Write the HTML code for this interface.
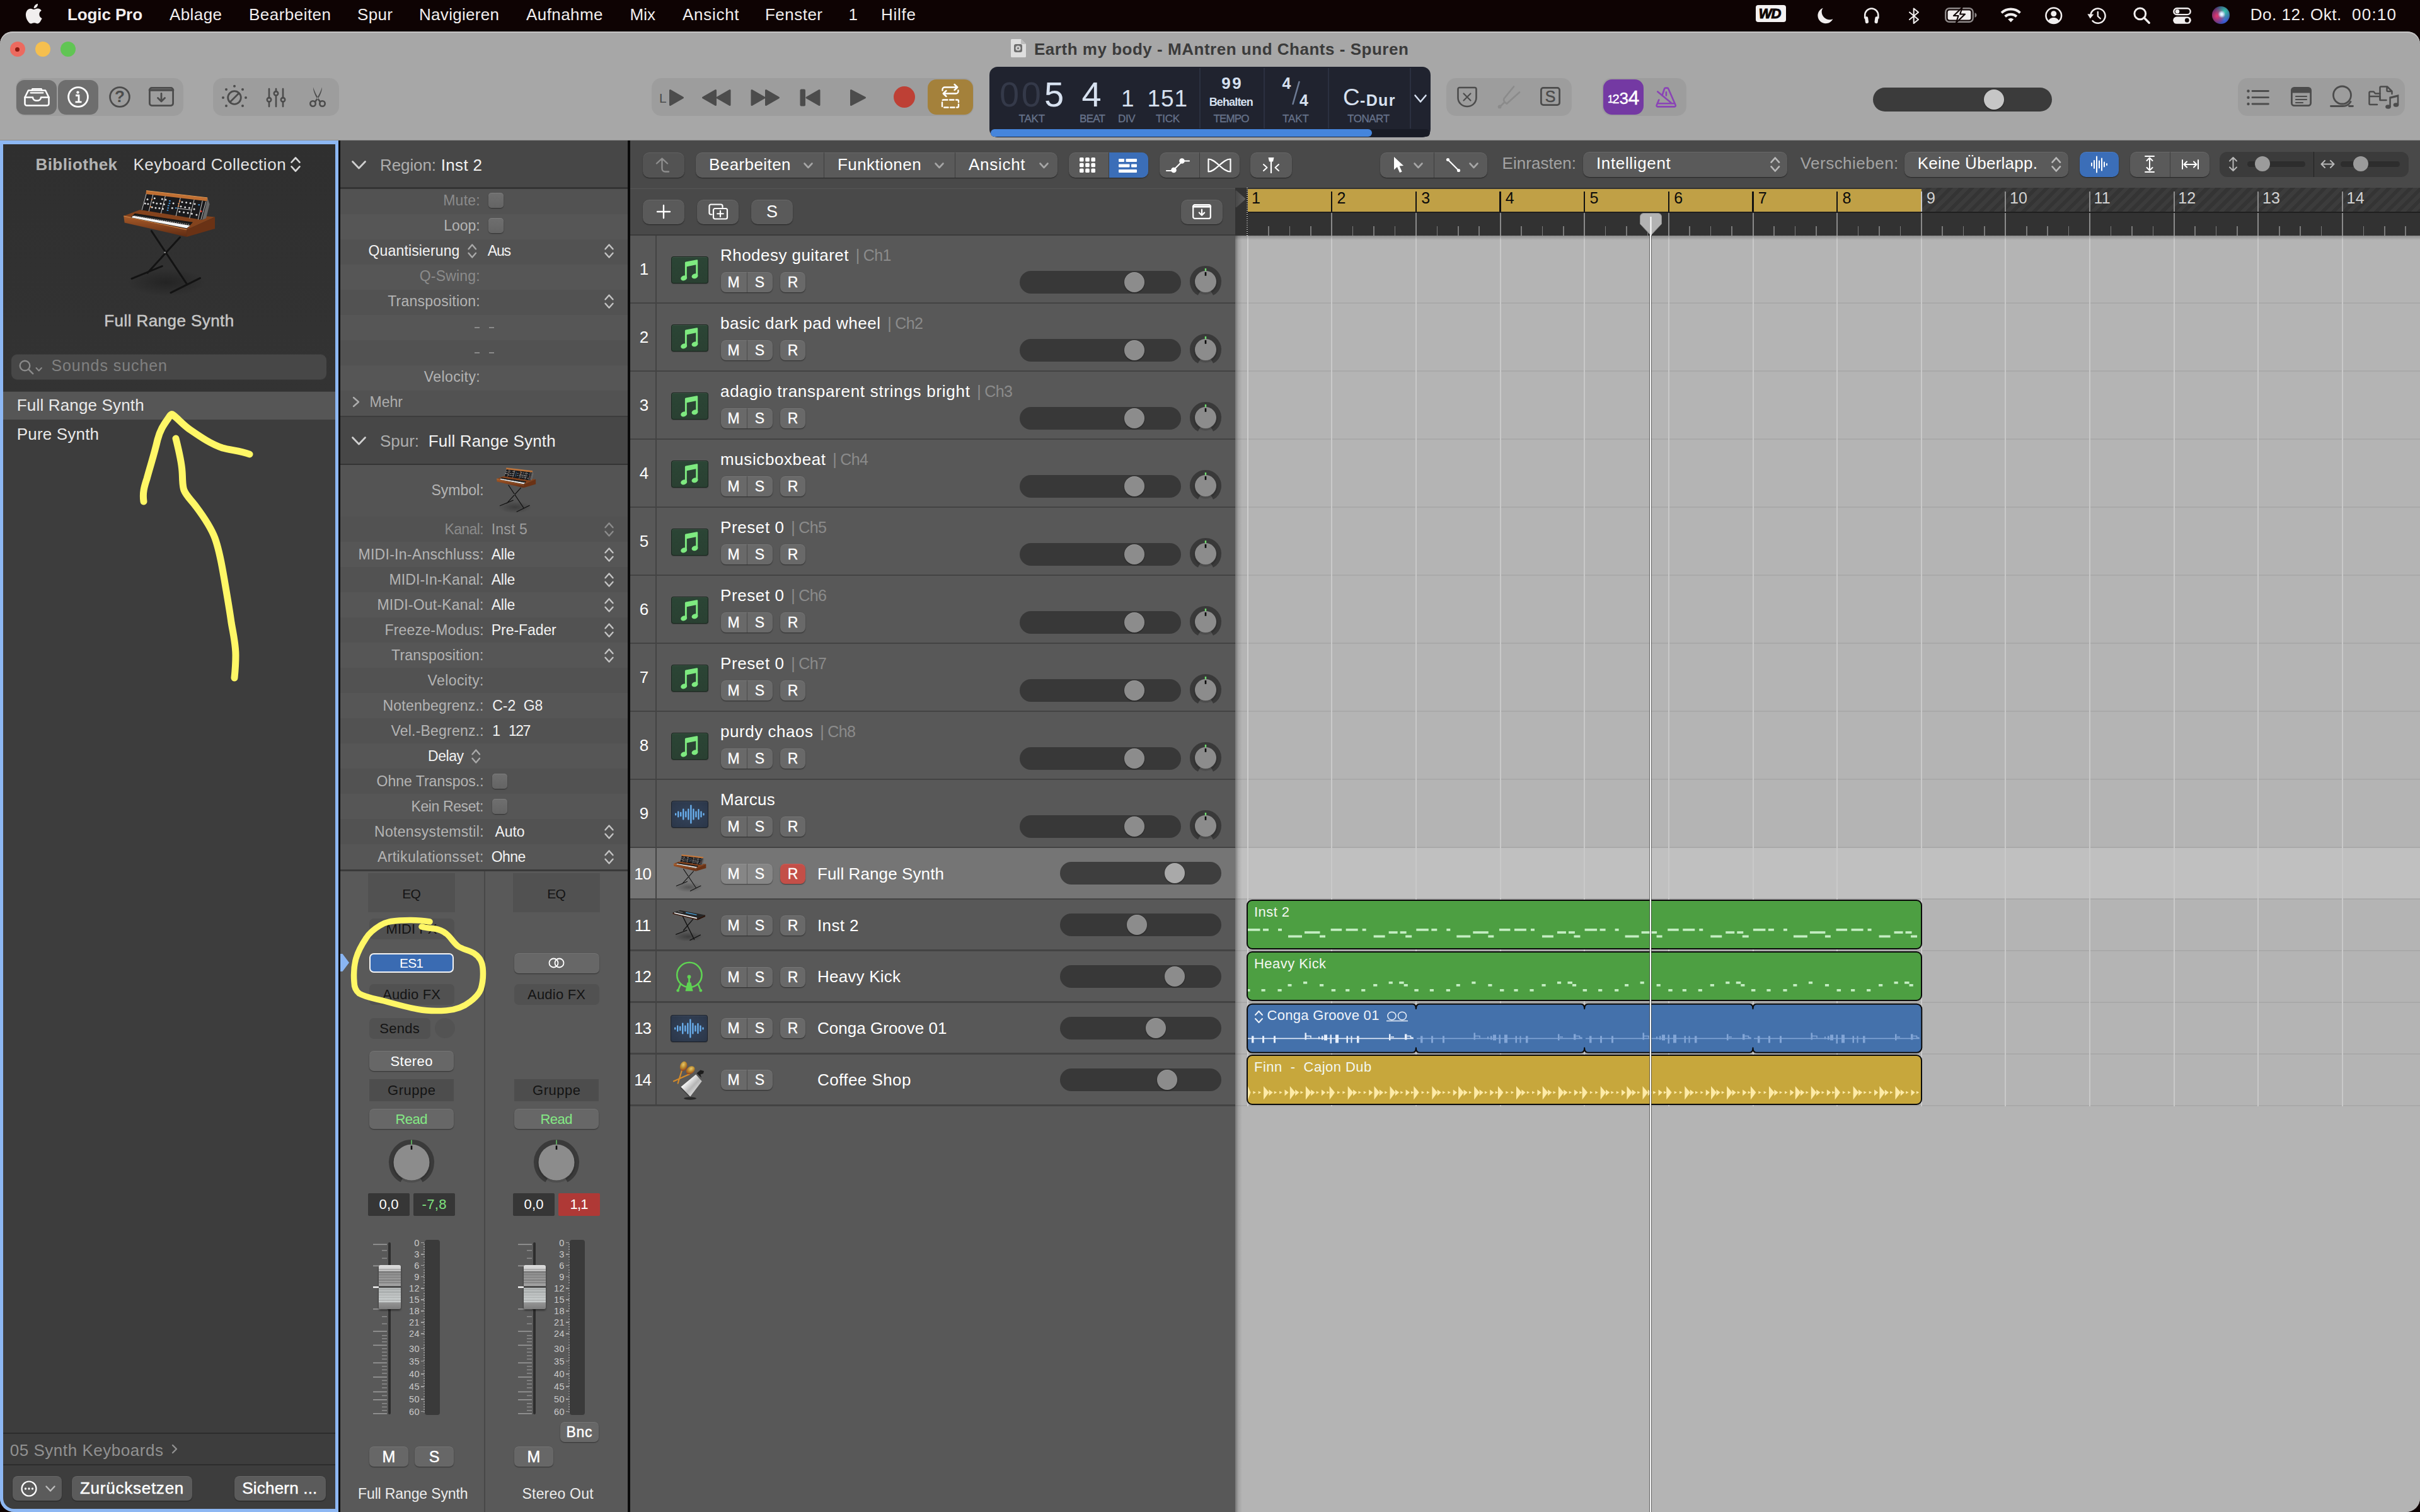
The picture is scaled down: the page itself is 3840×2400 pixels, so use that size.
<!DOCTYPE html>
<html><head><meta charset="utf-8"><title>Logic Pro</title>
<style>
html,body{margin:0;padding:0;}
body{width:3840px;height:2400px;overflow:hidden;background:#0e0303;position:relative;font-family:"Liberation Sans",sans-serif;}
#r{position:absolute;left:0;top:0;width:3840px;height:2400px;overflow:hidden;}
#r div,#r svg{position:absolute;box-sizing:border-box;}
#r svg{overflow:visible;}
.t{white-space:pre;line-height:1;}
</style></head><body><div id="r">
<div style="left:0px;top:0px;width:3840px;height:50px;background:#0e0303;"></div>
<svg style="left:39.5px;top:6px;" width="27.5" height="31.5" viewBox="2.2 0 19.6 24"><path fill="#f1eeee" d="M12.152 6.896c-.948 0-2.415-1.078-3.96-1.04-2.04.027-3.91 1.183-4.961 3.014-2.117 3.675-.546 9.103 1.519 12.09 1.013 1.454 2.208 3.09 3.792 3.039 1.52-.065 2.09-.987 3.935-.987 1.831 0 2.35.987 3.96.948 1.637-.026 2.676-1.48 3.676-2.948 1.156-1.688 1.636-3.325 1.662-3.415-.039-.013-3.182-1.221-3.22-4.857-.026-3.04 2.48-4.494 2.597-4.559-1.429-2.09-3.623-2.324-4.39-2.376-2-.156-3.675 1.09-4.61 1.09zM15.53 3.83c.843-1.012 1.4-2.427 1.245-3.83-1.207.052-2.662.805-3.532 1.818-.78.896-1.454 2.338-1.273 3.714 1.338.104 2.715-.688 3.559-1.701"/></svg>
<div class="t" style="left:107px;top:10.29px;font-size:26px;color:#f1eeee;letter-spacing:-0.11px;font-weight:700;">Logic Pro</div>
<div class="t" style="left:269px;top:10.29px;font-size:26px;color:#f1eeee;letter-spacing:0.41px;">Ablage</div>
<div class="t" style="left:395px;top:10.29px;font-size:26px;color:#f1eeee;letter-spacing:0.47px;">Bearbeiten</div>
<div class="t" style="left:567px;top:10.29px;font-size:26px;color:#f1eeee;letter-spacing:0.36px;">Spur</div>
<div class="t" style="left:665px;top:10.29px;font-size:26px;color:#f1eeee;letter-spacing:0.3px;">Navigieren</div>
<div class="t" style="left:835px;top:10.29px;font-size:26px;color:#f1eeee;letter-spacing:0.43px;">Aufnahme</div>
<div class="t" style="left:999.5px;top:10.29px;font-size:26px;color:#f1eeee;letter-spacing:0.03px;">Mix</div>
<div class="t" style="left:1083px;top:10.29px;font-size:26px;color:#f1eeee;letter-spacing:0.71px;">Ansicht</div>
<div class="t" style="left:1214px;top:10.29px;font-size:26px;color:#f1eeee;letter-spacing:0.48px;">Fenster</div>
<div class="t" style="left:1346.5px;top:10.29px;font-size:26px;color:#f1eeee;letter-spacing:-1.96px;">1</div>
<div class="t" style="left:1398px;top:10.29px;font-size:26px;color:#f1eeee;letter-spacing:0.75px;">Hilfe</div>
<div style="left:2785.5px;top:8px;width:48px;height:27px;background:#f4f2f2;border-radius:4px;"></div>
<div class="t" style="left:2790.67px;top:11.38px;font-size:22px;color:#0e0303;letter-spacing:-1px;font-weight:700;font-style:italic;-webkit-text-stroke:1px;">WD</div>
<svg style="left:2880.5px;top:10.5px;" width="30.5" height="29.4" viewBox="0 0 27 26"><path fill="#f1eeee" d="M10.5 1.5C6 3 2.8 7.5 3 12.6c.3 6 5.2 10.6 11.2 10.6 4.4 0 8.2-2.5 10-6.2-1.4.6-2.9.9-4.5.9-6.2 0-11.2-5-11.2-11.2 0-1.900.7-3.700 2-5.200z"/></svg>
<svg style="left:2956px;top:10.5px;" width="27.5" height="27.5" viewBox="0 0 27.5 27.5"><path fill="none" stroke="#f1eeee" stroke-width="2.6" d="M3.200 18.500V13.200C3.200 7.300 7.900 2.500 13.750 2.500S24.300 7.300 24.300 13.200v5.300"/><rect x="3.400" y="15.200" width="5.200" height="11" rx="2.400" fill="#f1eeee" transform="rotate(-8 6 20.700)"/><rect x="18.900" y="15.200" width="5.200" height="11" rx="2.400" fill="#f1eeee" transform="rotate(8 21.500 20.700)"/></svg>
<svg style="left:3028px;top:12px;" width="18" height="26.5" viewBox="0 0 18 26.5"><path fill="none" stroke="#f1eeee" stroke-width="2.100" stroke-linejoin="round" stroke-linecap="round" d="M2 7.500l14 11.500-7.300 6V1.500l7.300 6L2 19"/></svg>
<svg style="left:3086px;top:12px;" width="52" height="24" viewBox="0 0 52 24"><rect x="1.200" y="1.200" width="43.500" height="21.600" rx="6" fill="none" stroke="#8e8989" stroke-width="2.400"/><path d="M47.500 8.200c2 .6 3 2 3 3.800s-1 3.200-3 3.800z" fill="#8e8989"/><rect x="4.600" y="4.600" width="36.700" height="14.800" rx="3" fill="#f1eeee"/><path d="M27.500 0L14 13h7.500l-3.500 11L32 10.500h-7.800z" fill="#f1eeee" stroke="#0e0303" stroke-width="2.200" stroke-linejoin="round"/></svg>
<svg style="left:3173.5px;top:11px;" width="33.5" height="24.5" viewBox="0 0 33.5 24.5"><g fill="none" stroke="#f1eeee" stroke-width="3.900" stroke-linecap="butt"><path d="M2 9.400c8.300-7.800 21.200-7.800 29.500 0"/><path d="M7.600 15.300c5.200-4.800 13.100-4.800 18.300 0"/></g><path d="M16.750 24.300l-4.600-4.700c2.600-2.300 6.600-2.300 9.200 0z" fill="#f1eeee"/></svg>
<svg style="left:3244.5px;top:10.5px;" width="27.5" height="27.5" viewBox="0 0 27.5 27.5"><circle cx="13.750" cy="13.750" r="12.300" fill="none" stroke="#f1eeee" stroke-width="2.600"/><circle cx="13.750" cy="10.800" r="4.500" fill="#f1eeee"/><path d="M5.200 22.300c1.600-3.700 5-5.300 8.550-5.300s6.950 1.600 8.550 5.300c-2.300 2.300-5.300 3.600-8.550 3.600s-6.250-1.300-8.550-3.600z" fill="#f1eeee"/></svg>
<svg style="left:3311.5px;top:12px;" width="30" height="26.5" viewBox="0 0 30 26.5"><path fill="none" stroke="#f1eeee" stroke-width="2.500" stroke-linecap="round" d="M5.300 12.500a11.600 11.600 0 1 1 3.200 8.700"/><path fill="#f1eeee" d="M0.300 10.200l10 .6-5.600 6.800z"/><path fill="none" stroke="#f1eeee" stroke-width="2.300" stroke-linecap="round" d="M16.800 6.800v7l4 3.700"/></svg>
<svg style="left:3384.5px;top:10.5px;" width="27" height="27" viewBox="0 0 27 27"><circle cx="10.800" cy="10.800" r="8.900" fill="none" stroke="#f1eeee" stroke-width="3"/><path d="M17.300 17.300l7.900 7.900" stroke="#f1eeee" stroke-width="3.400" stroke-linecap="round"/></svg>
<svg style="left:3447.5px;top:12px;" width="29" height="26" viewBox="0 0 29 26"><rect x="1.300" y="1.300" width="26.400" height="9.800" rx="4.900" fill="none" stroke="#f1eeee" stroke-width="2.400"/><circle cx="7" cy="6.200" r="3.300" fill="#f1eeee"/><rect x="0.200" y="14.600" width="28.600" height="11.200" rx="5.600" fill="#f1eeee"/><circle cx="22.300" cy="20.200" r="3.400" fill="#0e0303"/></svg>
<div style="left:3510px;top:10px;width:28px;height:28px;border-radius:14px;background:radial-gradient(circle at 55% 45%,#ffffff 0,#cfe8ff 10%,rgba(255,255,255,0) 28%),radial-gradient(circle at 28% 55%,#e8366f 0,rgba(232,54,111,0) 55%),radial-gradient(circle at 70% 30%,#35c9b0 0,rgba(53,201,176,0) 55%),radial-gradient(circle at 70% 78%,#3a62e0 0,rgba(58,98,224,0) 60%),#3b2b6b;"></div>
<div class="t" style="left:3570.8px;top:9.69px;font-size:26px;color:#f1eeee;letter-spacing:0.52px;">Do. 12. Okt.</div>
<div class="t" style="left:3732px;top:9.69px;font-size:26px;color:#f1eeee;letter-spacing:1.24px;">00:10</div>
<div style="left:0px;top:50px;width:3840px;height:2350px;background:#a7a7a7;border-radius:20px 20px 22px 22px;box-shadow:inset 0 2px 0 #c6c6c6;"></div>
<div style="left:0px;top:221.5px;width:3840px;height:1.5px;background:#8e8e8e;"></div>
<div style="left:15.8px;top:66px;width:24px;height:24px;background:#ec6a5f;border-radius:12px;"></div>
<div style="left:56px;top:66px;width:24px;height:24px;background:#f5bf4f;border-radius:12px;"></div>
<div style="left:96px;top:66px;width:24px;height:24px;background:#61c554;border-radius:12px;"></div>
<div style="left:24.3px;top:74.5px;width:7px;height:7px;background:#8c1a10;border-radius:3.5px;"></div>
<svg style="left:1604px;top:62px;" width="24" height="29" viewBox="0 0 24 29"><path d="M1.500 0h14.500l8 8v19.500a1.500 1.500 0 0 1-1.500 1.500h-21a1.500 1.500 0 0 1-1.500-1.500v-26a1.500 1.500 0 0 1 1.500-1.500z" fill="#dedede"/><path d="M16 0l8 8h-6.500a1.500 1.500 0 0 1-1.500-1.500z" fill="#bcbcbc"/><rect x="5" y="8" width="13" height="13" rx="3" fill="#6e6e6e"/><circle cx="11.500" cy="14.500" r="4" fill="#cfcfcf"/><circle cx="11.500" cy="14.500" r="1.500" fill="#6e6e6e"/></svg>
<div class="t" style="left:1641px;top:64.69px;font-size:26px;color:#3b3b3b;letter-spacing:0.52px;font-weight:700;">Earth my body - MAntren und Chants - Spuren</div>
<div style="left:24.5px;top:124px;width:266px;height:60px;background:rgba(0,0,0,0.055);border-radius:15px;"></div>
<div style="left:26px;top:126.5px;width:64px;height:55px;background:#6e6e6e;border-radius:13px;"></div>
<div style="left:92px;top:126.5px;width:64px;height:55px;background:#6e6e6e;border-radius:13px;"></div>
<svg style="left:37.5px;top:138px;" width="41" height="31" viewBox="0 0 41 31"><g fill="none" stroke="#fff" stroke-width="2.600" stroke-linejoin="round" stroke-linecap="round"><path d="M1.500 16.500L7 5.500h27l5.500 11v10a3 3 0 0 1-3 3h-32a3 3 0 0 1-3-3z"/><path d="M1.500 16.500h12.500c0 3.500 3 5.300 6.500 5.300s6.500-1.800 6.500-5.300h12.500"/><path d="M10.500 9.300h20M12.500 5.500l.8-2.500h14.400l.8 2.500" stroke-width="2.200"/></g></svg>
<svg style="left:107px;top:136.5px;" width="34" height="34" viewBox="0 0 34 34"><circle cx="17" cy="17" r="15.400" fill="none" stroke="#fff" stroke-width="2.800"/><circle cx="16.500" cy="9.600" r="2.200" fill="#fff"/><path d="M13 14.500h5v10M12.500 24.800h10" fill="none" stroke="#fff" stroke-width="2.800"/></svg>
<svg style="left:173px;top:136.5px;" width="34" height="34" viewBox="0 0 34 34"><circle cx="17" cy="17" r="15.400" fill="none" stroke="#4c4c4c" stroke-width="2.800"/></svg>
<div class="t" style="left:182.06px;top:140.49px;font-size:26px;color:#4c4c4c;font-weight:700;">?</div>
<svg style="left:236px;top:138px;" width="40" height="31" viewBox="0 0 40 31"><g fill="none" stroke="#4c4c4c" stroke-width="2.800" stroke-linejoin="round" stroke-linecap="round"><rect x="1.400" y="1.400" width="37.200" height="28.200" rx="3.500"/><path d="M1.400 5h37.200" stroke-width="3.600"/><path d="M20 10.500v12M14.500 17.500l5.500 5.500 5.500-5.500"/></g></svg>
<div style="left:338px;top:124px;width:200px;height:60px;background:rgba(0,0,0,0.055);border-radius:15px;"></div>
<svg style="left:352px;top:134px;" width="40" height="40" viewBox="0 0 40 40"><circle cx="20" cy="21" r="10.300" fill="none" stroke="#4c4c4c" stroke-width="2.800"/><path d="M13.500 27.500L26 15" stroke="#4c4c4c" stroke-width="2.800" stroke-linecap="round"/><g fill="#4c4c4c"><circle cx="20" cy="2.800" r="2"/><circle cx="7" cy="8" r="2"/><circle cx="33" cy="8" r="2"/><circle cx="2" cy="21" r="2"/><circle cx="38" cy="21" r="2"/><circle cx="7" cy="34" r="2"/><circle cx="33" cy="34" r="2"/></g></svg>
<svg style="left:422px;top:139px;" width="32" height="32" viewBox="0 0 32 32"><g stroke="#4c4c4c" stroke-width="2.600" stroke-linecap="round" fill="none"><path d="M5 2v14M5 22.500v7.500M16 2v4M16 12.500v17.500M27 2v14M27 22.500v7.500"/><circle cx="5" cy="19.300" r="3.200"/><circle cx="16" cy="9.300" r="3.200"/><circle cx="27" cy="19.300" r="3.200"/></g></svg>
<svg style="left:491px;top:137px;" width="26" height="34" viewBox="0 0 26 34"><g stroke="#4c4c4c" stroke-width="2.600" fill="none" stroke-linecap="round"><circle cx="5.500" cy="27.500" r="4.200"/><circle cx="20.500" cy="27.500" r="4.200"/></g><path d="M6 1.500c1.500 5 6.500 16.500 12.500 22.500l-2.500 1.500C11 19 5.500 8 6 1.500zM20 1.500c-1.500 5-6.500 16.500-12.500 22.500l2.500 1.500C15 19 20.500 8 20 1.500z" fill="#4c4c4c"/></svg>
<div style="left:1034px;top:124px;width:511px;height:60px;background:rgba(0,0,0,0.055);border-radius:15px;"></div>
<div class="t" style="left:1046px;top:145.22px;font-size:21px;color:#4c4c4c;">L</div>
<svg style="left:1060px;top:140px;" width="330" height="30" viewBox="0 0 330 30"><path d="M3.500 3.500v23l20-11.500z" fill="#4c4c4c" stroke="#4c4c4c" stroke-width="3" stroke-linejoin="round"/><path d="M75.500 3.500v23l-20-11.500zM98 3.500v23l-20-11.500z" fill="#4c4c4c" stroke="#4c4c4c" stroke-width="3" stroke-linejoin="round"/><path d="M133 3.500v23l20-11.500zM155.500 3.500v23l20-11.500z" fill="#4c4c4c" stroke="#4c4c4c" stroke-width="3" stroke-linejoin="round"/><rect x="209.500" y="1.500" width="8.500" height="27" rx="2" fill="#4c4c4c"/><path d="M240 3.500v23l-20-11.500z" fill="#4c4c4c" stroke="#4c4c4c" stroke-width="3" stroke-linejoin="round"/><path d="M290.500 3.500v23l22-11.500z" fill="#4c4c4c" stroke="#4c4c4c" stroke-width="3" stroke-linejoin="round"/></svg>
<div style="left:1418.3px;top:137.3px;width:33.4px;height:33.4px;background:#be4035;border-radius:17px;"></div>
<div style="left:1472px;top:126px;width:72px;height:56px;background:#a4813b;border-radius:14px;"></div>
<svg style="left:1492px;top:132px;" width="32" height="44" viewBox="0 0 32 44"><g fill="none" stroke="#fff" stroke-width="2.400" stroke-linecap="round" stroke-linejoin="round"><path d="M3.500 11.500v-1.500a3.500 3.500 0 0 1 3.500-3.500h20M22.500 2l4.800 4.500-4.800 4.500"/><path d="M28.500 11.500v1.500a3.500 3.500 0 0 1-3.500 3.500h-20M9.500 12l-4.800 4.500 4.800 4.500"/><rect x="3" y="26.500" width="26" height="12" rx="2" stroke-dasharray="6.500 3.500"/></g></svg>
<div style="left:1570px;top:106px;width:700px;height:112px;background:#20232f;border-radius:13px;"></div>
<div class="t" style="left:1586px;top:121.6px;font-size:56px;color:#343949;letter-spacing:3.72px;">00</div>
<div class="t" style="left:1657px;top:121.6px;font-size:56px;color:#d7e1f0;">5</div>
<div class="t" style="left:1716.5px;top:121.6px;font-size:56px;color:#d7e1f0;">4</div>
<div class="t" style="left:1779px;top:137.68px;font-size:37px;color:#d7e1f0;">1</div>
<div class="t" style="left:1820.5px;top:137.68px;font-size:37px;color:#d7e1f0;letter-spacing:0.89px;">151</div>
<div class="t" style="left:1616.6px;top:179.91px;font-size:17px;color:#66728a;letter-spacing:-0.23px;-webkit-text-stroke:.35px;">TAKT</div>
<div class="t" style="left:1713px;top:179.91px;font-size:17px;color:#66728a;letter-spacing:-0.71px;-webkit-text-stroke:.35px;">BEAT</div>
<div class="t" style="left:1774px;top:179.91px;font-size:17px;color:#66728a;letter-spacing:-0.37px;-webkit-text-stroke:.35px;">DIV</div>
<div class="t" style="left:1834px;top:179.91px;font-size:17px;color:#66728a;letter-spacing:-0.24px;-webkit-text-stroke:.35px;">TICK</div>
<div style="left:1903px;top:108px;width:2px;height:96px;background:#2b3040;"></div>
<div style="left:2005px;top:108px;width:2px;height:96px;background:#2b3040;"></div>
<div style="left:2107px;top:108px;width:2px;height:96px;background:#2b3040;"></div>
<div style="left:2237px;top:108px;width:2px;height:96px;background:#2b3040;"></div>
<div class="t" style="left:1938.25px;top:118.99px;font-size:26px;color:#d7e1f0;letter-spacing:2.58px;font-weight:700;">99</div>
<div class="t" style="left:1918.7px;top:153.06px;font-size:18px;color:#d7e1f0;letter-spacing:-0.86px;font-weight:700;">Behalten</div>
<div class="t" style="left:1925.4px;top:179.91px;font-size:17px;color:#66728a;letter-spacing:-0.81px;-webkit-text-stroke:.35px;">TEMPO</div>
<div class="t" style="left:2034.6px;top:119.84px;font-size:25px;color:#d7e1f0;font-weight:700;">4</div>
<svg style="left:2049px;top:128px;" width="16" height="40" viewBox="0 0 16 40"><path d="M12.500 2L2.500 37" stroke="#6d7b95" stroke-width="2.600" stroke-linecap="round"/></svg>
<div class="t" style="left:2062px;top:146.54px;font-size:25px;color:#d7e1f0;font-weight:700;">4</div>
<div class="t" style="left:2035px;top:179.91px;font-size:17px;color:#66728a;letter-spacing:-0.06px;-webkit-text-stroke:.35px;">TAKT</div>
<div class="t" style="left:2131px;top:136.38px;font-size:37px;color:#d7e1f0;">C</div>
<div class="t" style="left:2158px;top:146.54px;font-size:25px;color:#d7e1f0;letter-spacing:1.37px;font-weight:700;">-Dur</div>
<div class="t" style="left:2138px;top:179.91px;font-size:17px;color:#66728a;letter-spacing:-0.45px;-webkit-text-stroke:.35px;">TONART</div>
<svg style="left:2244px;top:150px;" width="20" height="14" viewBox="0 0 20 14"><path d="M1.500 1.500l8.500 10 8.500-10" fill="none" stroke="#d7e1f0" stroke-width="2.600" stroke-linecap="round" stroke-linejoin="round"/></svg>
<div style="left:1572px;top:204.5px;width:696.5px;height:12px;background:#181b25;border-radius:6px;"></div>
<div style="left:1572px;top:204.5px;width:605px;height:12px;background:#4585dc;border-radius:6px;"></div>
<div style="left:2294.5px;top:124px;width:199.5px;height:60px;background:rgba(0,0,0,0.055);border-radius:15px;"></div>
<svg style="left:2312px;top:137px;" width="32" height="34" viewBox="0 0 32 34"><g fill="none" stroke="#4c4c4c" stroke-width="2.600" stroke-linejoin="round" stroke-linecap="round"><path d="M4 2h24a2.500 2.500 0 0 1 2.500 2.500v13.500c0 9-7.500 14-14.500 14S1.500 27 1.500 18V4.500A2.500 2.500 0 0 1 4 2z"/><path d="M10.500 11.500l11 11M21.500 11.500l-11 11" stroke-width="2.200"/></g></svg>
<svg style="left:2376px;top:135px;" width="38" height="38" viewBox="0 0 38 38"><g fill="none" stroke="#8b8b8b" stroke-width="2.700" stroke-linecap="round" stroke-linejoin="round"><path d="M26 2.500L10.500 21.500M35 11.500L15 29.500M10.500 21.500c-1.500 3 1 6.500 4.500 8M11.500 27L4 34.500"/></g><circle cx="3.600" cy="34.400" r="2.900" fill="#8b8b8b"/></svg>
<svg style="left:2444px;top:138px;" width="32" height="30" viewBox="0 0 32 30"><rect x="1.400" y="1.400" width="29.200" height="27.200" rx="3.500" fill="none" stroke="#4c4c4c" stroke-width="2.800"/></svg>
<div class="t" style="left:2451.66px;top:141.34px;font-size:25px;color:#4c4c4c;-webkit-text-stroke:.5px;">S</div>
<div style="left:2541.5px;top:124px;width:134.5px;height:60px;background:rgba(0,0,0,0.055);border-radius:15px;"></div>
<div style="left:2544px;top:126px;width:64px;height:56px;background:#7439a3;border-radius:14px;"></div>
<div class="t" style="left:2551px;top:149.96px;font-size:16px;color:#fff;-webkit-text-stroke:.4px;">1</div>
<div class="t" style="left:2558.5px;top:147.07px;font-size:20px;color:#fff;-webkit-text-stroke:.4px;">2</div>
<div class="t" style="left:2569.5px;top:142.99px;font-size:26px;color:#fff;-webkit-text-stroke:.4px;">3</div>
<div class="t" style="left:2583.5px;top:138.91px;font-size:32px;color:#fff;-webkit-text-stroke:.4px;">4</div>
<svg style="left:2626.5px;top:137px;" width="34" height="35" viewBox="0 0 34 35"><g fill="none" stroke="#8a43b6" stroke-width="2.600" stroke-linejoin="round" stroke-linecap="round"><path d="M10.500 14.500L14 4a2 2 0 0 1 1.900-1.400h2.600a2 2 0 0 1 1.900 1.400l11.300 26a1.700 1.700 0 0 1-1.600 2.400h-26.800a1.700 1.700 0 0 1-1.600-2.400l3.600-8.500"/><path d="M4 27.300h26.500M3.300 8.500L24.500 26M16.900 9.300v5.300"/></g></svg>
<div style="left:2972px;top:139px;width:284px;height:38px;background:#3b3b3b;border-radius:19px;"></div>
<div style="left:3148px;top:142px;width:32px;height:32px;background:#c6c6c6;border-radius:16px;box-shadow:0 1px 2px rgba(0,0,0,.5);"></div>
<div style="left:3551px;top:124px;width:265px;height:60px;background:rgba(0,0,0,0.055);border-radius:15px;"></div>
<svg style="left:3565px;top:141px;" width="36" height="28" viewBox="0 0 36 28"><g fill="#4c4c4c"><circle cx="2.500" cy="3.500" r="2.200"/><circle cx="2.500" cy="13.700" r="2.200"/><circle cx="2.500" cy="24" r="2.200"/></g><path d="M9 3.500h25.500M9 13.700h25.500M9 24h25.500" stroke="#4c4c4c" stroke-width="2.800" stroke-linecap="round"/></svg>
<svg style="left:3635px;top:137.5px;" width="33" height="31" viewBox="0 0 33 31"><rect x="1.400" y="1.400" width="30.200" height="28.200" rx="4" fill="none" stroke="#4c4c4c" stroke-width="2.800"/><path d="M1.400 9.500V5a3.600 3.600 0 0 1 3.600-3.600h23a3.600 3.600 0 0 1 3.600 3.600v4.500z" fill="#4c4c4c"/><path d="M8 15h17M8 20h17M8 25h11" stroke="#4c4c4c" stroke-width="2.200" stroke-linecap="round"/></svg>
<svg style="left:3697px;top:135px;" width="38" height="36" viewBox="0 0 38 36"><g fill="none" stroke="#4c4c4c" stroke-width="2.800" stroke-linecap="round"><circle cx="19.500" cy="16" r="14"/><path d="M1.500 33.500h19c6 0 10-3 12.500-7M30.500 33.500h6"/></g></svg>
<svg style="left:3758px;top:136px;" width="50" height="38" viewBox="0 0 50 38"><g fill="none" stroke="#4c4c4c" stroke-width="2.500" stroke-linejoin="round" stroke-linecap="round"><path d="M18.500 21V3a1.500 1.500 0 0 1 1.500-1.500h10l7.500 7.500v4M29.500 1.500v6a1.500 1.500 0 0 0 1.500 1.500h6.500"/><path d="M14 30h-11a1.500 1.500 0 0 1-1.500-1.500v-17.500a1.500 1.500 0 0 1 1.500-1.500h5.500l2.500 3h7.500M1.500 17h17v6h10"/></g><g fill="#4c4c4c"><ellipse cx="31.500" cy="33.500" rx="4.300" ry="3.300"/><ellipse cx="44" cy="30.500" rx="4.300" ry="3.300"/><path d="M33.300 33.500h2.500V20.500l10-2.500v12.500h2.500V14l-15 3.800z"/></g></svg>
<div style="left:0px;top:223px;width:536.5px;height:2177px;background:#8db7f3;border-radius:0 0 0 22px;"></div>
<div style="left:5px;top:228.5px;width:527px;height:2166.5px;background:#3d3d3d;border-radius:0 0 0 17px;"></div>
<div style="left:5px;top:228.5px;width:527px;height:392px;background:linear-gradient(#2f2f2f,#333333);"></div>
<div style="left:536.5px;top:223px;width:3.5px;height:2177px;background:#0a0a0a;"></div>
<div class="t" style="left:56.5px;top:247.99px;font-size:26px;color:#b3b3b3;letter-spacing:0.43px;font-weight:700;">Bibliothek</div>
<div class="t" style="left:211.4px;top:247.99px;font-size:26px;color:#e3e3e3;letter-spacing:0.53px;">Keyboard Collection</div>
<svg style="left:461px;top:248.5px;" width="16" height="24" viewBox="0 0 16 24"><path d="M1.500 8.64 L8 1.500 L14.5 8.64 M1.500 15.36 L8 22.5 L14.5 15.36" fill="none" stroke="#d8d8d8" stroke-width="2.6" stroke-linecap="round" stroke-linejoin="round"/></svg>
<svg style="left:194px;top:301px;" width="149" height="168" viewBox="14 11 149 168"><defs><linearGradient id="wfL" x1="0" y1="0" x2="0" y2="1"><stop offset="0" stop-color="#a85c2a"/><stop offset="1" stop-color="#5f2b12"/></linearGradient><radialGradient id="shL" cx=".5" cy=".5" r=".5"><stop offset="0" stop-color="rgba(0,0,0,.28)"/><stop offset="1" stop-color="rgba(0,0,0,0)"/></radialGradient></defs><ellipse cx="84" cy="158" rx="62" ry="22" fill="url(#shL)"/><g stroke="#131313" stroke-width="2.900" stroke-linecap="round"><path d="M105.500 86.700L54 143.200M28.900 152.300L77.300 132.500"/><path d="M60.300 76.600L116.800 161.400M91 174.600L137.600 151.400"/></g><circle cx="81.700" cy="110.800" r="1.300" fill="#9a9a9a"/><path d="M16.300 52.800L41.500 43.300 161 54.600 116.200 74.700z" fill="#84431d"/><path d="M116.200 74.700L161 54.600V72.900L116.200 86z" fill="#6a3215"/><path d="M16.300 52.800L116.200 74.700V86L17.600 63.400z" fill="url(#wfL)"/><path d="M16.300 52.800L116.200 74.700" stroke="#c98045" stroke-width="1.200"/><path d="M34 48.800L126 62.800 116.500 73 27.500 55.300z" fill="#111"/><path d="M31 52.400L121.500 68 116.400 72.300 28.600 55.200z" fill="#f4f4f4"/><path d="M36 49.600L125 63.200 121.800 66.800 33 52.300z" fill="#1b1b1b"/><path d="M33.500 52.500L121.500 66.500" stroke="#e9e9e9" stroke-width="1.100" stroke-dasharray="1.300 1.900"/><path d="M149.200 23.900L152.600 33.900 147 56.500 140.700 59z" fill="#676767"/><path d="M51.500 17.600L148.500 29 140.700 59 44.600 43.300z" fill="#1a1a1c"/><path d="M52.100 12.600L149.200 23.900 148.500 29.300 51.500 17.900z" fill="#bf6f33"/><path d="M52.100 12.600L149.200 23.900" stroke="#e39a55" stroke-width="1"/><g stroke="#d8d8d8" stroke-width=".900" fill="none"><path d="M52.100 17.800L45.200 43.400M147 29.500L138.800 58.700M62.800 18.800L56.200 45.500M82.300 21.100L75.400 49M106.200 24.100L99.200 52.800M128.100 27L120.600 56.500M141.300 28.600L134.400 58.400M101.800 40.800L124.400 43.300"/></g><circle cx="54" cy="26.4" r="1.500" fill="#dcdcdc"/><circle cx="50.3" cy="32.9" r="1.500" fill="#dcdcdc"/><circle cx="54.9" cy="33.7" r="1.500" fill="#dcdcdc"/><circle cx="65.3" cy="24.7" r="1.500" fill="#dcdcdc"/><circle cx="77.3" cy="26" r="1.500" fill="#dcdcdc"/><circle cx="63.4" cy="31.4" r="1.500" fill="#dcdcdc"/><circle cx="68.8" cy="32.9" r="1.500" fill="#dcdcdc"/><circle cx="75" cy="33.3" r="1.500" fill="#dcdcdc"/><circle cx="61.3" cy="38.9" r="1.500" fill="#dcdcdc"/><circle cx="67" cy="39.9" r="1.500" fill="#dcdcdc"/><circle cx="72.9" cy="40.6" r="1.500" fill="#dcdcdc"/><circle cx="82.9" cy="27" r="1.500" fill="#dcdcdc"/><circle cx="80.4" cy="34.2" r="1.500" fill="#dcdcdc"/><circle cx="78.5" cy="41.5" r="1.500" fill="#dcdcdc"/><circle cx="95.1" cy="32.7" r="1.500" fill="#dcdcdc"/><circle cx="93.3" cy="40.2" r="1.500" fill="#dcdcdc"/><circle cx="109" cy="30.8" r="1.500" fill="#dcdcdc"/><circle cx="115.6" cy="31.4" r="1.500" fill="#dcdcdc"/><circle cx="122.1" cy="32.4" r="1.500" fill="#dcdcdc"/><circle cx="107" cy="37.7" r="1.500" fill="#dcdcdc"/><circle cx="113.7" cy="38.9" r="1.500" fill="#dcdcdc"/><circle cx="120.4" cy="39.9" r="1.500" fill="#dcdcdc"/><circle cx="104.9" cy="46.1" r="1.500" fill="#dcdcdc"/><circle cx="111.6" cy="47.1" r="1.500" fill="#dcdcdc"/><circle cx="118.1" cy="48" r="1.500" fill="#dcdcdc"/><circle cx="129" cy="33.7" r="1.500" fill="#dcdcdc"/><circle cx="128.1" cy="42.1" r="1.500" fill="#dcdcdc"/><circle cx="124.4" cy="49.2" r="1.500" fill="#dcdcdc"/><circle cx="131.9" cy="50.9" r="1.500" fill="#dcdcdc"/><rect x="88.1" y="28.05" width="2.600" height="1.700" fill="#4aa2ea"/><rect x="87.6" y="31.85" width="2.600" height="1.700" fill="#4aa2ea"/><rect x="86" y="35.55" width="2.600" height="1.700" fill="#4aa2ea"/><rect x="85.4" y="39.35" width="2.600" height="1.700" fill="#4aa2ea"/><rect x="84.7" y="42.85" width="2.600" height="1.700" fill="#4aa2ea"/><rect x="134.4" y="34.35" width="2.600" height="1.700" fill="#4aa2ea"/><rect x="97.9" y="39.35" width="2.600" height="1.700" fill="#4aa2ea"/><rect x="60.1" y="25.65" width="2.200" height="1.900" fill="#e8853f"/><rect x="104.2" y="28.15" width="2.200" height="1.900" fill="#e8853f"/><rect x="102.5" y="32.35" width="2.200" height="1.900" fill="#e8853f"/><rect x="102.2" y="36.15" width="2.200" height="1.900" fill="#e8853f"/><rect x="57.9" y="37.35" width="2.200" height="1.900" fill="#e8853f"/><circle cx="139.200" cy="45.500" r="1.400" fill="#e3342a"/></svg>
<div class="t" style="left:165.2px;top:496.19px;font-size:26px;color:#c6c6c6;letter-spacing:0.44px;-webkit-text-stroke:0.5px #c6c6c6;">Full Range Synth</div>
<div style="left:18px;top:562px;width:500px;height:40px;background:#474747;border-radius:9px;box-shadow:0 1px 0 rgba(255,255,255,.06),inset 0 1px 0 rgba(0,0,0,.15);"></div>
<svg style="left:30px;top:571px;" width="40" height="26" viewBox="0 0 40 26"><circle cx="9.500" cy="9.500" r="7.800" fill="none" stroke="#8a8a8a" stroke-width="2.400"/><path d="M15.200 15.200l7 7" stroke="#8a8a8a" stroke-width="2.600" stroke-linecap="round"/><path d="M27.500 13l4.200 4.500 4.200-4.500" fill="none" stroke="#8a8a8a" stroke-width="2" stroke-linecap="round" stroke-linejoin="round"/></svg>
<div class="t" style="left:81.4px;top:568.44px;font-size:25px;color:#808080;letter-spacing:0.94px;">Sounds suchen</div>
<div style="left:5px;top:622px;width:527px;height:44px;background:#565656;"></div>
<div class="t" style="left:26.8px;top:629.99px;font-size:26px;color:#e9e9e9;letter-spacing:0.16px;">Full Range Synth</div>
<div class="t" style="left:26.8px;top:675.99px;font-size:26px;color:#e9e9e9;letter-spacing:0.18px;">Pure Synth</div>
<div style="left:5px;top:2274px;width:527px;height:2px;background:#2c2c2c;"></div>
<div class="t" style="left:15.7px;top:2288.99px;font-size:26px;color:#919191;letter-spacing:0.54px;">05 Synth Keyboards</div>
<svg style="left:272px;top:2292px;" width="10" height="16" viewBox="0 0 10 16"><path d="M2 2l6 6-6 6" fill="none" stroke="#919191" stroke-width="2.400" stroke-linecap="round" stroke-linejoin="round"/></svg>
<div style="left:5px;top:2324px;width:527px;height:2px;background:#2c2c2c;"></div>
<div style="left:20px;top:2342.5px;width:78px;height:39px;background:#5b5b5b;border-radius:8px;box-shadow:0 1px 1.500px rgba(0,0,0,.45),inset 0 1px 0 rgba(255,255,255,.08);"></div>
<svg style="left:33px;top:2349.5px;" width="26" height="26" viewBox="0 0 26 26"><circle cx="13" cy="13" r="11.500" fill="none" stroke="#fff" stroke-width="2.200"/><g fill="#fff"><circle cx="7.500" cy="13" r="1.700"/><circle cx="13" cy="13" r="1.700"/><circle cx="18.500" cy="13" r="1.700"/></g></svg>
<svg style="left:72px;top:2358px;" width="16" height="11" viewBox="0 0 16 11"><path d="M1.500 1.500l6.500 7 6.500-7" fill="none" stroke="#bdbdbd" stroke-width="2.400" stroke-linecap="round" stroke-linejoin="round"/></svg>
<div style="left:113.5px;top:2342.5px;width:191px;height:39px;background:#5b5b5b;border-radius:8px;box-shadow:0 1px 1.500px rgba(0,0,0,.45),inset 0 1px 0 rgba(255,255,255,.08);"></div>
<div class="t" style="left:126.9px;top:2349.39px;font-size:26px;color:#fff;letter-spacing:0.76px;-webkit-text-stroke:.45px;">Zurücksetzen</div>
<div style="left:372px;top:2342.5px;width:144.5px;height:39px;background:#5b5b5b;border-radius:8px;box-shadow:0 1px 1.500px rgba(0,0,0,.45),inset 0 1px 0 rgba(255,255,255,.08);"></div>
<div class="t" style="left:384.3px;top:2349.39px;font-size:26px;color:#fff;letter-spacing:0.2px;-webkit-text-stroke:.45px;">Sichern ...</div>
<div style="left:540px;top:223px;width:456px;height:2177px;background:#595959;"></div>
<div style="left:996px;top:223px;width:4px;height:2177px;background:#0a0a0a;"></div>
<div style="left:540px;top:223px;width:456px;height:75px;background:#474747;"></div>
<div style="left:540px;top:297px;width:456px;height:2.5px;background:#343434;"></div>
<svg style="left:558px;top:255px;" width="23" height="14" viewBox="0 0 23 14"><path d="M1.500 1.500l10 10.500 10-10.500" fill="none" stroke="#d0d0d0" stroke-width="2.800" stroke-linecap="round" stroke-linejoin="round"/></svg>
<div class="t" style="left:603px;top:249.39px;font-size:26px;color:#adadad;letter-spacing:-0.1px;">Region:</div>
<div class="t" style="left:699.8px;top:249.39px;font-size:26px;color:#f2f2f2;letter-spacing:0.32px;">Inst 2</div>
<div style="left:540px;top:299.5px;width:456px;height:40px;background:#525252;"></div>
<div style="left:540px;top:339.5px;width:456px;height:40px;background:#565656;"></div>
<div style="left:540px;top:379.5px;width:456px;height:40px;background:#525252;"></div>
<div style="left:540px;top:419.5px;width:456px;height:40px;background:#565656;"></div>
<div style="left:540px;top:459.5px;width:456px;height:40px;background:#525252;"></div>
<div style="left:540px;top:499.5px;width:456px;height:40px;background:#565656;"></div>
<div style="left:540px;top:539.5px;width:456px;height:40px;background:#525252;"></div>
<div style="left:540px;top:579.5px;width:456px;height:40px;background:#565656;"></div>
<div style="left:540px;top:619.5px;width:456px;height:40px;background:#525252;"></div>
<div class="t" style="left:703.2px;top:306.73px;font-size:23px;color:#8b8b8b;letter-spacing:0.25px;">Mute:</div>
<div style="left:775px;top:306px;width:24px;height:24px;background:linear-gradient(#6f6f6f,#646464);border-radius:5px;box-shadow:0 1px 1.500px rgba(0,0,0,.45),inset 0 1px 0 rgba(255,255,255,.1);"></div>
<div class="t" style="left:704.2px;top:346.73px;font-size:23px;color:#b4b4b4;letter-spacing:-0.01px;">Loop:</div>
<div style="left:775px;top:346px;width:24px;height:24px;background:linear-gradient(#6f6f6f,#646464);border-radius:5px;box-shadow:0 1px 1.500px rgba(0,0,0,.45),inset 0 1px 0 rgba(255,255,255,.1);"></div>
<div class="t" style="left:584.6px;top:386.73px;font-size:23px;color:#f2f2f2;letter-spacing:0.13px;">Quantisierung</div>
<svg style="left:742px;top:386.5px;" width="14.5" height="23" viewBox="0 0 14.5 23"><path d="M1.500 8.28 L7.25 1.500 L13 8.28 M1.500 14.72 L7.25 21.5 L13 14.72" fill="none" stroke="#a9a9a9" stroke-width="2.4" stroke-linecap="round" stroke-linejoin="round"/></svg>
<div class="t" style="left:773.8px;top:386.73px;font-size:23px;color:#f2f2f2;letter-spacing:-1.22px;">Aus</div>
<svg style="left:958.5px;top:386.5px;" width="15" height="23" viewBox="0 0 15 23"><path d="M1.500 8.28 L7.5 1.500 L13.5 8.28 M1.500 14.72 L7.5 21.5 L13.5 14.72" fill="none" stroke="#c4c4c4" stroke-width="2.4" stroke-linecap="round" stroke-linejoin="round"/></svg>
<div class="t" style="left:665.7px;top:426.73px;font-size:23px;color:#8b8b8b;letter-spacing:0.2px;">Q-Swing:</div>
<div class="t" style="left:615.2px;top:466.73px;font-size:23px;color:#b4b4b4;letter-spacing:0.22px;">Transposition:</div>
<svg style="left:958.5px;top:466.5px;" width="15" height="23" viewBox="0 0 15 23"><path d="M1.500 8.28 L7.5 1.500 L13.5 8.28 M1.500 14.72 L7.5 21.5 L13.5 14.72" fill="none" stroke="#c4c4c4" stroke-width="2.4" stroke-linecap="round" stroke-linejoin="round"/></svg>
<div style="left:753px;top:518.5px;width:8px;height:2px;background:#8a8a8a;"></div>
<div style="left:776px;top:518.5px;width:8px;height:2px;background:#8a8a8a;"></div>
<div style="left:753px;top:558.5px;width:8px;height:2px;background:#8a8a8a;"></div>
<div style="left:776px;top:558.5px;width:8px;height:2px;background:#8a8a8a;"></div>
<div class="t" style="left:672.7px;top:586.73px;font-size:23px;color:#b4b4b4;letter-spacing:0.42px;">Velocity:</div>
<svg style="left:558.5px;top:629px;" width="12" height="18" viewBox="0 0 12 18"><path d="M2 2l8 7-8 7" fill="none" stroke="#adadad" stroke-width="2.400" stroke-linecap="round" stroke-linejoin="round"/></svg>
<div class="t" style="left:586.5px;top:626.73px;font-size:23px;color:#adadad;">Mehr</div>
<div style="left:540px;top:659.5px;width:456px;height:2.5px;background:#3c3c3c;"></div>
<div style="left:540px;top:662px;width:456px;height:74px;background:#474747;"></div>
<div style="left:540px;top:735.5px;width:456px;height:2.5px;background:#343434;"></div>
<svg style="left:558px;top:693px;" width="23" height="14" viewBox="0 0 23 14"><path d="M1.500 1.500l10 10.500 10-10.500" fill="none" stroke="#d0d0d0" stroke-width="2.800" stroke-linecap="round" stroke-linejoin="round"/></svg>
<div class="t" style="left:603px;top:686.99px;font-size:26px;color:#adadad;letter-spacing:-0.04px;">Spur:</div>
<div class="t" style="left:679.8px;top:686.99px;font-size:26px;color:#f2f2f2;letter-spacing:0.16px;">Full Range Synth</div>
<div style="left:540px;top:738px;width:456px;height:82px;background:#545454;"></div>
<div class="t" style="left:684.5px;top:766.53px;font-size:23px;color:#b4b4b4;letter-spacing:-0.01px;">Symbol:</div>
<svg style="left:786.5px;top:742px;" width="64" height="72.2" viewBox="14 11 149 168"><defs><linearGradient id="wfI" x1="0" y1="0" x2="0" y2="1"><stop offset="0" stop-color="#a85c2a"/><stop offset="1" stop-color="#5f2b12"/></linearGradient><radialGradient id="shI" cx=".5" cy=".5" r=".5"><stop offset="0" stop-color="rgba(0,0,0,.28)"/><stop offset="1" stop-color="rgba(0,0,0,0)"/></radialGradient></defs><ellipse cx="84" cy="158" rx="62" ry="22" fill="url(#shI)"/><g stroke="#131313" stroke-width="2.900" stroke-linecap="round"><path d="M105.500 86.700L54 143.200M28.900 152.300L77.300 132.500"/><path d="M60.300 76.600L116.800 161.400M91 174.600L137.600 151.400"/></g><circle cx="81.700" cy="110.800" r="1.300" fill="#9a9a9a"/><path d="M16.300 52.800L41.500 43.300 161 54.600 116.200 74.700z" fill="#84431d"/><path d="M116.200 74.700L161 54.600V72.900L116.200 86z" fill="#6a3215"/><path d="M16.300 52.800L116.200 74.700V86L17.600 63.400z" fill="url(#wfI)"/><path d="M16.300 52.800L116.200 74.700" stroke="#c98045" stroke-width="1.200"/><path d="M34 48.800L126 62.800 116.500 73 27.500 55.300z" fill="#111"/><path d="M31 52.400L121.500 68 116.400 72.300 28.600 55.200z" fill="#f4f4f4"/><path d="M36 49.600L125 63.200 121.800 66.800 33 52.300z" fill="#1b1b1b"/><path d="M33.500 52.500L121.500 66.500" stroke="#e9e9e9" stroke-width="1.100" stroke-dasharray="1.300 1.900"/><path d="M149.200 23.900L152.600 33.900 147 56.500 140.700 59z" fill="#676767"/><path d="M51.500 17.600L148.500 29 140.700 59 44.600 43.300z" fill="#1a1a1c"/><path d="M52.100 12.600L149.200 23.900 148.500 29.300 51.500 17.900z" fill="#bf6f33"/><path d="M52.100 12.600L149.200 23.900" stroke="#e39a55" stroke-width="1"/><g stroke="#d8d8d8" stroke-width=".900" fill="none"><path d="M52.100 17.800L45.200 43.400M147 29.500L138.800 58.700M62.800 18.800L56.200 45.500M82.300 21.100L75.400 49M106.200 24.100L99.200 52.800M128.100 27L120.600 56.500M141.300 28.600L134.400 58.400M101.800 40.800L124.400 43.300"/></g><circle cx="54" cy="26.4" r="1.500" fill="#dcdcdc"/><circle cx="50.3" cy="32.9" r="1.500" fill="#dcdcdc"/><circle cx="54.9" cy="33.7" r="1.500" fill="#dcdcdc"/><circle cx="65.3" cy="24.7" r="1.500" fill="#dcdcdc"/><circle cx="77.3" cy="26" r="1.500" fill="#dcdcdc"/><circle cx="63.4" cy="31.4" r="1.500" fill="#dcdcdc"/><circle cx="68.8" cy="32.9" r="1.500" fill="#dcdcdc"/><circle cx="75" cy="33.3" r="1.500" fill="#dcdcdc"/><circle cx="61.3" cy="38.9" r="1.500" fill="#dcdcdc"/><circle cx="67" cy="39.9" r="1.500" fill="#dcdcdc"/><circle cx="72.9" cy="40.6" r="1.500" fill="#dcdcdc"/><circle cx="82.9" cy="27" r="1.500" fill="#dcdcdc"/><circle cx="80.4" cy="34.2" r="1.500" fill="#dcdcdc"/><circle cx="78.5" cy="41.5" r="1.500" fill="#dcdcdc"/><circle cx="95.1" cy="32.7" r="1.500" fill="#dcdcdc"/><circle cx="93.3" cy="40.2" r="1.500" fill="#dcdcdc"/><circle cx="109" cy="30.8" r="1.500" fill="#dcdcdc"/><circle cx="115.6" cy="31.4" r="1.500" fill="#dcdcdc"/><circle cx="122.1" cy="32.4" r="1.500" fill="#dcdcdc"/><circle cx="107" cy="37.7" r="1.500" fill="#dcdcdc"/><circle cx="113.7" cy="38.9" r="1.500" fill="#dcdcdc"/><circle cx="120.4" cy="39.9" r="1.500" fill="#dcdcdc"/><circle cx="104.9" cy="46.1" r="1.500" fill="#dcdcdc"/><circle cx="111.6" cy="47.1" r="1.500" fill="#dcdcdc"/><circle cx="118.1" cy="48" r="1.500" fill="#dcdcdc"/><circle cx="129" cy="33.7" r="1.500" fill="#dcdcdc"/><circle cx="128.1" cy="42.1" r="1.500" fill="#dcdcdc"/><circle cx="124.4" cy="49.2" r="1.500" fill="#dcdcdc"/><circle cx="131.9" cy="50.9" r="1.500" fill="#dcdcdc"/><rect x="88.1" y="28.05" width="2.600" height="1.700" fill="#4aa2ea"/><rect x="87.6" y="31.85" width="2.600" height="1.700" fill="#4aa2ea"/><rect x="86" y="35.55" width="2.600" height="1.700" fill="#4aa2ea"/><rect x="85.4" y="39.35" width="2.600" height="1.700" fill="#4aa2ea"/><rect x="84.7" y="42.85" width="2.600" height="1.700" fill="#4aa2ea"/><rect x="134.4" y="34.35" width="2.600" height="1.700" fill="#4aa2ea"/><rect x="97.9" y="39.35" width="2.600" height="1.700" fill="#4aa2ea"/><rect x="60.1" y="25.65" width="2.200" height="1.900" fill="#e8853f"/><rect x="104.2" y="28.15" width="2.200" height="1.900" fill="#e8853f"/><rect x="102.5" y="32.35" width="2.200" height="1.900" fill="#e8853f"/><rect x="102.2" y="36.15" width="2.200" height="1.900" fill="#e8853f"/><rect x="57.9" y="37.35" width="2.200" height="1.900" fill="#e8853f"/><circle cx="139.200" cy="45.500" r="1.400" fill="#e3342a"/></svg>
<div style="left:540px;top:820px;width:456px;height:40px;background:#525252;"></div>
<div style="left:540px;top:860px;width:456px;height:40px;background:#565656;"></div>
<div style="left:540px;top:900px;width:456px;height:40px;background:#525252;"></div>
<div style="left:540px;top:940px;width:456px;height:40px;background:#565656;"></div>
<div style="left:540px;top:980px;width:456px;height:40px;background:#525252;"></div>
<div style="left:540px;top:1020px;width:456px;height:40px;background:#565656;"></div>
<div style="left:540px;top:1060px;width:456px;height:40px;background:#525252;"></div>
<div style="left:540px;top:1100px;width:456px;height:40px;background:#565656;"></div>
<div style="left:540px;top:1140px;width:456px;height:40px;background:#525252;"></div>
<div style="left:540px;top:1180px;width:456px;height:40px;background:#565656;"></div>
<div style="left:540px;top:1220px;width:456px;height:40px;background:#525252;"></div>
<div style="left:540px;top:1260px;width:456px;height:40px;background:#565656;"></div>
<div style="left:540px;top:1300px;width:456px;height:40px;background:#525252;"></div>
<div style="left:540px;top:1340px;width:456px;height:40px;background:#565656;"></div>
<div class="t" style="left:705.5px;top:828.73px;font-size:23px;color:#8b8b8b;letter-spacing:-0.64px;">Kanal:</div>
<div class="t" style="left:779.8px;top:828.73px;font-size:23px;color:#9d9d9d;letter-spacing:0.15px;">Inst 5</div>
<svg style="left:958.5px;top:828.5px;" width="15" height="23" viewBox="0 0 15 23"><path d="M1.500 8.28 L7.5 1.500 L13.5 8.28 M1.500 14.72 L7.5 21.5 L13.5 14.72" fill="none" stroke="#8c8c8c" stroke-width="2.4" stroke-linecap="round" stroke-linejoin="round"/></svg>
<div class="t" style="left:568.5px;top:868.73px;font-size:23px;color:#b4b4b4;letter-spacing:0.28px;">MIDI-In-Anschluss:</div>
<div class="t" style="left:779.8px;top:868.73px;font-size:23px;color:#f2f2f2;letter-spacing:-0.28px;">Alle</div>
<svg style="left:958.5px;top:868.5px;" width="15" height="23" viewBox="0 0 15 23"><path d="M1.500 8.28 L7.5 1.500 L13.5 8.28 M1.500 14.72 L7.5 21.5 L13.5 14.72" fill="none" stroke="#c4c4c4" stroke-width="2.4" stroke-linecap="round" stroke-linejoin="round"/></svg>
<div class="t" style="left:617.5px;top:908.73px;font-size:23px;color:#b4b4b4;letter-spacing:0.13px;">MIDI-In-Kanal:</div>
<div class="t" style="left:779.8px;top:908.73px;font-size:23px;color:#f2f2f2;letter-spacing:-0.28px;">Alle</div>
<svg style="left:958.5px;top:908.5px;" width="15" height="23" viewBox="0 0 15 23"><path d="M1.500 8.28 L7.5 1.500 L13.5 8.28 M1.500 14.72 L7.5 21.5 L13.5 14.72" fill="none" stroke="#c4c4c4" stroke-width="2.4" stroke-linecap="round" stroke-linejoin="round"/></svg>
<div class="t" style="left:598.5px;top:948.73px;font-size:23px;color:#b4b4b4;letter-spacing:0.2px;">MIDI-Out-Kanal:</div>
<div class="t" style="left:779.8px;top:948.73px;font-size:23px;color:#f2f2f2;letter-spacing:-0.28px;">Alle</div>
<svg style="left:958.5px;top:948.5px;" width="15" height="23" viewBox="0 0 15 23"><path d="M1.500 8.28 L7.5 1.500 L13.5 8.28 M1.500 14.72 L7.5 21.5 L13.5 14.72" fill="none" stroke="#c4c4c4" stroke-width="2.4" stroke-linecap="round" stroke-linejoin="round"/></svg>
<div class="t" style="left:610.5px;top:988.73px;font-size:23px;color:#b4b4b4;letter-spacing:0.2px;">Freeze-Modus:</div>
<div class="t" style="left:779.8px;top:988.73px;font-size:23px;color:#f2f2f2;letter-spacing:-0.07px;">Pre-Fader</div>
<svg style="left:958.5px;top:988.5px;" width="15" height="23" viewBox="0 0 15 23"><path d="M1.500 8.28 L7.5 1.500 L13.5 8.28 M1.500 14.72 L7.5 21.5 L13.5 14.72" fill="none" stroke="#c4c4c4" stroke-width="2.4" stroke-linecap="round" stroke-linejoin="round"/></svg>
<div class="t" style="left:621px;top:1028.73px;font-size:23px;color:#b4b4b4;letter-spacing:0.22px;">Transposition:</div>
<svg style="left:958.5px;top:1028.5px;" width="15" height="23" viewBox="0 0 15 23"><path d="M1.500 8.28 L7.5 1.500 L13.5 8.28 M1.500 14.72 L7.5 21.5 L13.5 14.72" fill="none" stroke="#c4c4c4" stroke-width="2.4" stroke-linecap="round" stroke-linejoin="round"/></svg>
<div class="t" style="left:678.5px;top:1068.73px;font-size:23px;color:#b4b4b4;letter-spacing:0.42px;">Velocity:</div>
<div class="t" style="left:607.5px;top:1108.73px;font-size:23px;color:#b4b4b4;letter-spacing:0.21px;">Notenbegrenz.:</div>
<div class="t" style="left:781.3px;top:1108.73px;font-size:23px;color:#f2f2f2;letter-spacing:-0.09px;">C-2  G8</div>
<div class="t" style="left:620.5px;top:1148.73px;font-size:23px;color:#b4b4b4;letter-spacing:0.2px;">Vel.-Begrenz.:</div>
<div class="t" style="left:781.3px;top:1148.73px;font-size:23px;color:#f2f2f2;letter-spacing:-1.55px;">1   127</div>
<div class="t" style="left:679px;top:1188.73px;font-size:23px;color:#f2f2f2;letter-spacing:-0.45px;">Delay</div>
<svg style="left:747.5px;top:1188.5px;" width="14.5" height="23" viewBox="0 0 14.5 23"><path d="M1.500 8.28 L7.25 1.500 L13 8.28 M1.500 14.72 L7.25 21.5 L13 14.72" fill="none" stroke="#a9a9a9" stroke-width="2.4" stroke-linecap="round" stroke-linejoin="round"/></svg>
<div class="t" style="left:597.5px;top:1228.73px;font-size:23px;color:#b4b4b4;">Ohne Transpos.:</div>
<div style="left:781px;top:1228px;width:24px;height:24px;background:linear-gradient(#6f6f6f,#646464);border-radius:5px;box-shadow:0 1px 1.500px rgba(0,0,0,.45),inset 0 1px 0 rgba(255,255,255,.1);"></div>
<div class="t" style="left:652.5px;top:1268.73px;font-size:23px;color:#b4b4b4;letter-spacing:-0.39px;">Kein Reset:</div>
<div style="left:781px;top:1268px;width:24px;height:24px;background:linear-gradient(#6f6f6f,#646464);border-radius:5px;box-shadow:0 1px 1.500px rgba(0,0,0,.45),inset 0 1px 0 rgba(255,255,255,.1);"></div>
<div class="t" style="left:594px;top:1308.73px;font-size:23px;color:#b4b4b4;letter-spacing:0.32px;">Notensystemstil:</div>
<div class="t" style="left:785.5px;top:1308.73px;font-size:23px;color:#f2f2f2;letter-spacing:-0.1px;">Auto</div>
<svg style="left:958.5px;top:1308.5px;" width="15" height="23" viewBox="0 0 15 23"><path d="M1.500 8.28 L7.5 1.500 L13.5 8.28 M1.500 14.72 L7.5 21.5 L13.5 14.72" fill="none" stroke="#c4c4c4" stroke-width="2.4" stroke-linecap="round" stroke-linejoin="round"/></svg>
<div class="t" style="left:599px;top:1348.73px;font-size:23px;color:#b4b4b4;letter-spacing:0.38px;">Artikulationsset:</div>
<div class="t" style="left:779.8px;top:1348.73px;font-size:23px;color:#f2f2f2;letter-spacing:-0.59px;">Ohne</div>
<svg style="left:958.5px;top:1348.5px;" width="15" height="23" viewBox="0 0 15 23"><path d="M1.500 8.28 L7.5 1.500 L13.5 8.28 M1.500 14.72 L7.5 21.5 L13.5 14.72" fill="none" stroke="#c4c4c4" stroke-width="2.4" stroke-linecap="round" stroke-linejoin="round"/></svg>
<div style="left:540px;top:1380px;width:456px;height:3px;background:#3a3a3a;"></div>
<div style="left:768px;top:1383px;width:2px;height:1017px;background:#484848;"></div>
<div style="left:584px;top:1386px;width:138px;height:62px;background:#515151;"></div>
<div class="t" style="left:638.13px;top:1407.72px;font-size:21px;color:#141414;letter-spacing:-0.6px;">EQ</div>
<div style="left:585.5px;top:1458px;width:135px;height:33px;background:#515151;border-radius:7px;"></div>
<div class="t" style="left:612.5px;top:1464.38px;font-size:22px;color:#141414;letter-spacing:0.06px;">MIDI FX</div>
<div style="left:586px;top:1512.5px;width:134px;height:31.5px;background:#3a6bb2;border-radius:7px;border:2px solid #f4f4f4;"></div>
<div class="t" style="left:633.95px;top:1518.22px;font-size:21px;color:#fff;letter-spacing:-0.8px;">ES1</div>
<svg style="left:540px;top:1514px;" width="15" height="28" viewBox="0 0 15 28"><path d="M0 0l3.500 0 10.500 14-10.500 14-3.500 0z" fill="#8ab5f2"/></svg>
<div style="left:585.5px;top:1561.5px;width:135px;height:33px;background:#515151;border-radius:7px;"></div>
<div class="t" style="left:607px;top:1567.88px;font-size:22px;color:#141414;letter-spacing:0.22px;">Audio FX</div>
<div style="left:585.5px;top:1615.5px;width:97px;height:33px;background:#515151;border-radius:7px;"></div>
<div class="t" style="left:602.25px;top:1621.88px;font-size:22px;color:#141414;letter-spacing:0.28px;">Sends</div>
<div style="left:690px;top:1616px;width:32px;height:32px;background:#535353;border-radius:16px;"></div>
<div style="left:586px;top:1668px;width:134px;height:32px;background:#676767;border-radius:7px;box-shadow:0 1px 1.500px rgba(0,0,0,.45),inset 0 1px 0 rgba(255,255,255,.09);"></div>
<div class="t" style="left:619.5px;top:1673.88px;font-size:22px;color:#fff;letter-spacing:0.44px;">Stereo</div>
<div style="left:586px;top:1712.5px;width:134px;height:35.5px;background:#4d4d4d;"></div>
<div class="t" style="left:615px;top:1719.88px;font-size:22px;color:#141414;letter-spacing:0.53px;">Gruppe</div>
<div style="left:586px;top:1760px;width:134px;height:32px;background:#676767;border-radius:7px;box-shadow:0 1px 1.500px rgba(0,0,0,.45),inset 0 1px 0 rgba(255,255,255,.09);"></div>
<div class="t" style="left:627.5px;top:1765.88px;font-size:22px;color:#84e984;letter-spacing:-0.53px;">Read</div>
<svg style="left:617px;top:1809px;" width="72" height="72" viewBox="0 0 72 72"><defs><radialGradient id="kn8375" cx=".5" cy=".62" r=".62"><stop offset=".82" stop-color="rgba(0,0,0,.13)"/><stop offset="1" stop-color="rgba(0,0,0,0)"/></radialGradient></defs><path d="M20.61 63.77 A31.75 31.75 0 1 1 51.39 63.77" fill="none" stroke="#3a3a3a" stroke-width="8.5"/><circle cx="36" cy="37.8" r="30.5" fill="url(#kn8375)"/><circle cx="36" cy="36" r="28.5" fill="#8c8c8c"/><rect x="35.35" y="0.5" width="1.3" height="7" fill="#6fe06f"/><rect x="34.7" y="9.5" width="2.600" height="6.27" fill="#0c0c0c"/></svg>
<div style="left:584px;top:1894px;width:66px;height:35.5px;background:#363636;border-radius:2px;"></div>
<div class="t" style="left:601.5px;top:1901.38px;font-size:22px;color:#fff;letter-spacing:0.21px;">0,0</div>
<div style="left:656px;top:1894px;width:66px;height:35.5px;background:#363636;border-radius:2px;"></div>
<div class="t" style="left:669.5px;top:1901.38px;font-size:22px;color:#7fe37f;letter-spacing:0.36px;">-7,8</div>
<svg style="left:591.5px;top:1967px;" width="24" height="282" viewBox="0 0 24 282"><rect x="0" y="7.5" width="22" height="1.600" fill="#9a9a9a"/><rect x="0" y="41.5" width="22" height="1.600" fill="#9a9a9a"/><rect x="0" y="76" width="22" height="1.600" fill="#9a9a9a"/><rect x="0" y="110" width="22" height="1.600" fill="#9a9a9a"/><rect x="0" y="145.5" width="22" height="1.600" fill="#9a9a9a"/><rect x="0" y="167.5" width="22" height="1.600" fill="#9a9a9a"/><rect x="0" y="195.5" width="22" height="1.600" fill="#9a9a9a"/><rect x="0" y="218" width="22" height="1.600" fill="#9a9a9a"/><rect x="0" y="241.5" width="22" height="1.600" fill="#9a9a9a"/><rect x="0" y="254" width="22" height="1.600" fill="#9a9a9a"/><rect x="0" y="276" width="22" height="1.600" fill="#9a9a9a"/><rect x="14" y="17" width="8" height="1.600" fill="#8a8a8a"/><rect x="14" y="29.5" width="8" height="1.600" fill="#8a8a8a"/><rect x="14" y="53" width="8" height="1.600" fill="#8a8a8a"/><rect x="14" y="64.5" width="8" height="1.600" fill="#8a8a8a"/><rect x="14" y="87.5" width="8" height="1.600" fill="#8a8a8a"/><rect x="14" y="99" width="8" height="1.600" fill="#8a8a8a"/><rect x="14" y="122" width="8" height="1.600" fill="#8a8a8a"/><rect x="14" y="133.5" width="8" height="1.600" fill="#8a8a8a"/><rect x="14" y="152" width="8" height="1.600" fill="#8a8a8a"/><rect x="14" y="157" width="8" height="1.600" fill="#8a8a8a"/><rect x="14" y="162" width="8" height="1.600" fill="#8a8a8a"/><rect x="14" y="173" width="8" height="1.600" fill="#8a8a8a"/><rect x="14" y="178.5" width="8" height="1.600" fill="#8a8a8a"/><rect x="14" y="184" width="8" height="1.600" fill="#8a8a8a"/><rect x="14" y="189.5" width="8" height="1.600" fill="#8a8a8a"/><rect x="14" y="201" width="8" height="1.600" fill="#8a8a8a"/><rect x="14" y="206.5" width="8" height="1.600" fill="#8a8a8a"/><rect x="14" y="212" width="8" height="1.600" fill="#8a8a8a"/><rect x="14" y="223.5" width="8" height="1.600" fill="#8a8a8a"/><rect x="14" y="229" width="8" height="1.600" fill="#8a8a8a"/><rect x="14" y="235" width="8" height="1.600" fill="#8a8a8a"/><rect x="14" y="247.5" width="8" height="1.600" fill="#8a8a8a"/><rect x="14" y="260" width="8" height="1.600" fill="#8a8a8a"/><rect x="14" y="265.5" width="8" height="1.600" fill="#8a8a8a"/><rect x="14" y="271" width="8" height="1.600" fill="#8a8a8a"/></svg>
<div style="left:616px;top:1972px;width:4px;height:273px;background:#2e2e2e;border-radius:2px;"></div>
<div style="left:600.5px;top:2007.5px;width:35px;height:70.5px;background:linear-gradient(#dedede 0,#c9c9c9 13%,#8c8c8c 14.500%,#a2a2a2 47.500%,#2c2c2c 48.500%,#2c2c2c 50.500%,#b3b7b7 51.500%,#c9cdcd 84%,#939393 86%,#7c7c7c 100%);border-radius:3px;box-shadow:0 2px 3px rgba(0,0,0,.5);"></div>
<div style="left:600.5px;top:2014px;width:35px;height:26px;background:repeating-linear-gradient(rgba(0,0,0,.16) 0,rgba(0,0,0,.16) 1.500px,rgba(0,0,0,0) 1.500px,rgba(0,0,0,0) 4.300px);"></div>
<div style="left:600.5px;top:2046px;width:35px;height:22px;background:repeating-linear-gradient(rgba(0,0,0,.10) 0,rgba(0,0,0,.10) 1.500px,rgba(0,0,0,0) 1.500px,rgba(0,0,0,0) 4.300px);"></div>
<div style="left:592px;top:2042px;width:9px;height:2px;background:#fff;"></div>
<div style="left:674px;top:1968px;width:24px;height:278px;background:#3a3a3a;border-radius:4px;"></div>
<div class="t" style="left:657.14px;top:1965.53px;font-size:14.5px;color:#c9c9c9;letter-spacing:0.3px;">0</div>
<div style="left:667.5px;top:1971.8px;width:5.5px;height:1.6px;background:#a4a4a4;"></div>
<div class="t" style="left:657.14px;top:1983.93px;font-size:14.5px;color:#c9c9c9;letter-spacing:0.3px;">3</div>
<div style="left:667.5px;top:1990.2px;width:5.5px;height:1.6px;background:#a4a4a4;"></div>
<div class="t" style="left:657.14px;top:2001.63px;font-size:14.5px;color:#c9c9c9;letter-spacing:0.3px;">6</div>
<div style="left:667.5px;top:2007.9px;width:5.5px;height:1.6px;background:#a4a4a4;"></div>
<div class="t" style="left:657.14px;top:2019.63px;font-size:14.5px;color:#c9c9c9;letter-spacing:0.3px;">9</div>
<div style="left:667.5px;top:2025.9px;width:5.5px;height:1.6px;background:#a4a4a4;"></div>
<div class="t" style="left:649.07px;top:2037.73px;font-size:14.5px;color:#c9c9c9;letter-spacing:0.3px;">12</div>
<div style="left:667.5px;top:2044px;width:5.5px;height:1.6px;background:#a4a4a4;"></div>
<div class="t" style="left:649.07px;top:2055.73px;font-size:14.5px;color:#c9c9c9;letter-spacing:0.3px;">15</div>
<div style="left:667.5px;top:2062px;width:5.5px;height:1.6px;background:#a4a4a4;"></div>
<div class="t" style="left:649.07px;top:2073.73px;font-size:14.5px;color:#c9c9c9;letter-spacing:0.3px;">18</div>
<div style="left:667.5px;top:2080px;width:5.5px;height:1.6px;background:#a4a4a4;"></div>
<div class="t" style="left:649.07px;top:2091.83px;font-size:14.5px;color:#c9c9c9;letter-spacing:0.3px;">21</div>
<div style="left:667.5px;top:2098.1px;width:5.5px;height:1.6px;background:#a4a4a4;"></div>
<div class="t" style="left:649.07px;top:2109.83px;font-size:14.5px;color:#c9c9c9;letter-spacing:0.3px;">24</div>
<div style="left:667.5px;top:2116.1px;width:5.5px;height:1.6px;background:#a4a4a4;"></div>
<div class="t" style="left:649.07px;top:2133.63px;font-size:14.5px;color:#c9c9c9;letter-spacing:0.3px;">30</div>
<div style="left:667.5px;top:2139.9px;width:5.5px;height:1.6px;background:#a4a4a4;"></div>
<div class="t" style="left:649.07px;top:2153.63px;font-size:14.5px;color:#c9c9c9;letter-spacing:0.3px;">35</div>
<div style="left:667.5px;top:2159.9px;width:5.5px;height:1.6px;background:#a4a4a4;"></div>
<div class="t" style="left:649.07px;top:2173.73px;font-size:14.5px;color:#c9c9c9;letter-spacing:0.3px;">40</div>
<div style="left:667.5px;top:2180px;width:5.5px;height:1.6px;background:#a4a4a4;"></div>
<div class="t" style="left:649.07px;top:2193.83px;font-size:14.5px;color:#c9c9c9;letter-spacing:0.3px;">45</div>
<div style="left:667.5px;top:2200.1px;width:5.5px;height:1.6px;background:#a4a4a4;"></div>
<div class="t" style="left:649.07px;top:2213.93px;font-size:14.5px;color:#c9c9c9;letter-spacing:0.3px;">50</div>
<div style="left:667.5px;top:2220.2px;width:5.5px;height:1.6px;background:#a4a4a4;"></div>
<div class="t" style="left:649.07px;top:2233.63px;font-size:14.5px;color:#c9c9c9;letter-spacing:0.3px;">60</div>
<div style="left:667.5px;top:2239.9px;width:5.5px;height:1.6px;background:#a4a4a4;"></div>
<div style="left:671.8px;top:1974px;width:1.8px;height:268px;background:repeating-linear-gradient(#929292 0,#929292 1.600px,rgba(0,0,0,0) 1.600px,rgba(0,0,0,0) 4.100px);"></div>
<div style="left:586px;top:2296px;width:62px;height:32px;background:#676767;border-radius:7px;box-shadow:0 1px 1.500px rgba(0,0,0,.45),inset 0 1px 0 rgba(255,255,255,.09);"></div>
<div class="t" style="left:606.59px;top:2299.84px;font-size:25px;color:#fff;-webkit-text-stroke:.45px;">M</div>
<div style="left:658px;top:2296px;width:62px;height:32px;background:#676767;border-radius:7px;box-shadow:0 1px 1.500px rgba(0,0,0,.45),inset 0 1px 0 rgba(255,255,255,.09);"></div>
<div class="t" style="left:680.66px;top:2299.84px;font-size:25px;color:#fff;-webkit-text-stroke:.45px;">S</div>
<div style="left:814px;top:1386px;width:138px;height:62px;background:#515151;"></div>
<div class="t" style="left:868.13px;top:1407.72px;font-size:21px;color:#141414;letter-spacing:-0.6px;">EQ</div>
<div style="left:815.5px;top:1512.5px;width:135px;height:32px;background:#676767;border-radius:7px;box-shadow:0 1px 1.500px rgba(0,0,0,.45),inset 0 1px 0 rgba(255,255,255,.09);"></div>
<svg style="left:870px;top:1520px;" width="26" height="17" viewBox="0 0 26 17"><circle cx="8.500" cy="8.500" r="7" fill="none" stroke="#fff" stroke-width="1.800"/><circle cx="17.500" cy="8.500" r="7" fill="none" stroke="#fff" stroke-width="1.800"/></svg>
<div style="left:815.5px;top:1561.5px;width:135px;height:33px;background:#515151;border-radius:7px;"></div>
<div class="t" style="left:837px;top:1567.88px;font-size:22px;color:#141414;letter-spacing:0.22px;">Audio FX</div>
<div style="left:816px;top:1712.5px;width:134px;height:35.5px;background:#4d4d4d;"></div>
<div class="t" style="left:845px;top:1719.88px;font-size:22px;color:#141414;letter-spacing:0.53px;">Gruppe</div>
<div style="left:816px;top:1760px;width:134px;height:32px;background:#676767;border-radius:7px;box-shadow:0 1px 1.500px rgba(0,0,0,.45),inset 0 1px 0 rgba(255,255,255,.09);"></div>
<div class="t" style="left:857.5px;top:1765.88px;font-size:22px;color:#84e984;letter-spacing:-0.53px;">Read</div>
<svg style="left:847px;top:1809px;" width="72" height="72" viewBox="0 0 72 72"><defs><radialGradient id="kn10675" cx=".5" cy=".62" r=".62"><stop offset=".82" stop-color="rgba(0,0,0,.13)"/><stop offset="1" stop-color="rgba(0,0,0,0)"/></radialGradient></defs><path d="M20.61 63.77 A31.75 31.75 0 1 1 51.39 63.77" fill="none" stroke="#3a3a3a" stroke-width="8.5"/><circle cx="36" cy="37.8" r="30.5" fill="url(#kn10675)"/><circle cx="36" cy="36" r="28.5" fill="#8c8c8c"/><rect x="35.35" y="0.5" width="1.3" height="7" fill="#6fe06f"/><rect x="34.7" y="9.5" width="2.600" height="6.27" fill="#0c0c0c"/></svg>
<div style="left:814px;top:1894px;width:66px;height:35.5px;background:#363636;border-radius:2px;"></div>
<div class="t" style="left:831.5px;top:1901.38px;font-size:22px;color:#fff;letter-spacing:0.21px;">0,0</div>
<div style="left:886px;top:1894px;width:66px;height:35.5px;background:#af3936;border-radius:2px;"></div>
<div class="t" style="left:904.51px;top:1901.38px;font-size:22px;color:#fff;letter-spacing:-0.8px;">1,1</div>
<svg style="left:821.5px;top:1967px;" width="24" height="282" viewBox="0 0 24 282"><rect x="0" y="7.5" width="22" height="1.600" fill="#9a9a9a"/><rect x="0" y="41.5" width="22" height="1.600" fill="#9a9a9a"/><rect x="0" y="76" width="22" height="1.600" fill="#9a9a9a"/><rect x="0" y="110" width="22" height="1.600" fill="#9a9a9a"/><rect x="0" y="145.5" width="22" height="1.600" fill="#9a9a9a"/><rect x="0" y="167.5" width="22" height="1.600" fill="#9a9a9a"/><rect x="0" y="195.5" width="22" height="1.600" fill="#9a9a9a"/><rect x="0" y="218" width="22" height="1.600" fill="#9a9a9a"/><rect x="0" y="241.5" width="22" height="1.600" fill="#9a9a9a"/><rect x="0" y="254" width="22" height="1.600" fill="#9a9a9a"/><rect x="0" y="276" width="22" height="1.600" fill="#9a9a9a"/><rect x="14" y="17" width="8" height="1.600" fill="#8a8a8a"/><rect x="14" y="29.5" width="8" height="1.600" fill="#8a8a8a"/><rect x="14" y="53" width="8" height="1.600" fill="#8a8a8a"/><rect x="14" y="64.5" width="8" height="1.600" fill="#8a8a8a"/><rect x="14" y="87.5" width="8" height="1.600" fill="#8a8a8a"/><rect x="14" y="99" width="8" height="1.600" fill="#8a8a8a"/><rect x="14" y="122" width="8" height="1.600" fill="#8a8a8a"/><rect x="14" y="133.5" width="8" height="1.600" fill="#8a8a8a"/><rect x="14" y="152" width="8" height="1.600" fill="#8a8a8a"/><rect x="14" y="157" width="8" height="1.600" fill="#8a8a8a"/><rect x="14" y="162" width="8" height="1.600" fill="#8a8a8a"/><rect x="14" y="173" width="8" height="1.600" fill="#8a8a8a"/><rect x="14" y="178.5" width="8" height="1.600" fill="#8a8a8a"/><rect x="14" y="184" width="8" height="1.600" fill="#8a8a8a"/><rect x="14" y="189.5" width="8" height="1.600" fill="#8a8a8a"/><rect x="14" y="201" width="8" height="1.600" fill="#8a8a8a"/><rect x="14" y="206.5" width="8" height="1.600" fill="#8a8a8a"/><rect x="14" y="212" width="8" height="1.600" fill="#8a8a8a"/><rect x="14" y="223.5" width="8" height="1.600" fill="#8a8a8a"/><rect x="14" y="229" width="8" height="1.600" fill="#8a8a8a"/><rect x="14" y="235" width="8" height="1.600" fill="#8a8a8a"/><rect x="14" y="247.5" width="8" height="1.600" fill="#8a8a8a"/><rect x="14" y="260" width="8" height="1.600" fill="#8a8a8a"/><rect x="14" y="265.5" width="8" height="1.600" fill="#8a8a8a"/><rect x="14" y="271" width="8" height="1.600" fill="#8a8a8a"/></svg>
<div style="left:846px;top:1972px;width:4px;height:273px;background:#2e2e2e;border-radius:2px;"></div>
<div style="left:830.5px;top:2007.5px;width:35px;height:70.5px;background:linear-gradient(#dedede 0,#c9c9c9 13%,#8c8c8c 14.500%,#a2a2a2 47.500%,#2c2c2c 48.500%,#2c2c2c 50.500%,#b3b7b7 51.500%,#c9cdcd 84%,#939393 86%,#7c7c7c 100%);border-radius:3px;box-shadow:0 2px 3px rgba(0,0,0,.5);"></div>
<div style="left:830.5px;top:2014px;width:35px;height:26px;background:repeating-linear-gradient(rgba(0,0,0,.16) 0,rgba(0,0,0,.16) 1.500px,rgba(0,0,0,0) 1.500px,rgba(0,0,0,0) 4.300px);"></div>
<div style="left:830.5px;top:2046px;width:35px;height:22px;background:repeating-linear-gradient(rgba(0,0,0,.10) 0,rgba(0,0,0,.10) 1.500px,rgba(0,0,0,0) 1.500px,rgba(0,0,0,0) 4.300px);"></div>
<div style="left:822px;top:2042px;width:9px;height:2px;background:#fff;"></div>
<div style="left:904px;top:1968px;width:24px;height:278px;background:#3a3a3a;border-radius:4px;"></div>
<div class="t" style="left:887.14px;top:1965.53px;font-size:14.5px;color:#c9c9c9;letter-spacing:0.3px;">0</div>
<div style="left:897.5px;top:1971.8px;width:5.5px;height:1.6px;background:#a4a4a4;"></div>
<div class="t" style="left:887.14px;top:1983.93px;font-size:14.5px;color:#c9c9c9;letter-spacing:0.3px;">3</div>
<div style="left:897.5px;top:1990.2px;width:5.5px;height:1.6px;background:#a4a4a4;"></div>
<div class="t" style="left:887.14px;top:2001.63px;font-size:14.5px;color:#c9c9c9;letter-spacing:0.3px;">6</div>
<div style="left:897.5px;top:2007.9px;width:5.5px;height:1.6px;background:#a4a4a4;"></div>
<div class="t" style="left:887.14px;top:2019.63px;font-size:14.5px;color:#c9c9c9;letter-spacing:0.3px;">9</div>
<div style="left:897.5px;top:2025.9px;width:5.5px;height:1.6px;background:#a4a4a4;"></div>
<div class="t" style="left:879.07px;top:2037.73px;font-size:14.5px;color:#c9c9c9;letter-spacing:0.3px;">12</div>
<div style="left:897.5px;top:2044px;width:5.5px;height:1.6px;background:#a4a4a4;"></div>
<div class="t" style="left:879.07px;top:2055.73px;font-size:14.5px;color:#c9c9c9;letter-spacing:0.3px;">15</div>
<div style="left:897.5px;top:2062px;width:5.5px;height:1.6px;background:#a4a4a4;"></div>
<div class="t" style="left:879.07px;top:2073.73px;font-size:14.5px;color:#c9c9c9;letter-spacing:0.3px;">18</div>
<div style="left:897.5px;top:2080px;width:5.5px;height:1.6px;background:#a4a4a4;"></div>
<div class="t" style="left:879.07px;top:2091.83px;font-size:14.5px;color:#c9c9c9;letter-spacing:0.3px;">21</div>
<div style="left:897.5px;top:2098.1px;width:5.5px;height:1.6px;background:#a4a4a4;"></div>
<div class="t" style="left:879.07px;top:2109.83px;font-size:14.5px;color:#c9c9c9;letter-spacing:0.3px;">24</div>
<div style="left:897.5px;top:2116.1px;width:5.5px;height:1.6px;background:#a4a4a4;"></div>
<div class="t" style="left:879.07px;top:2133.63px;font-size:14.5px;color:#c9c9c9;letter-spacing:0.3px;">30</div>
<div style="left:897.5px;top:2139.9px;width:5.5px;height:1.6px;background:#a4a4a4;"></div>
<div class="t" style="left:879.07px;top:2153.63px;font-size:14.5px;color:#c9c9c9;letter-spacing:0.3px;">35</div>
<div style="left:897.5px;top:2159.9px;width:5.5px;height:1.6px;background:#a4a4a4;"></div>
<div class="t" style="left:879.07px;top:2173.73px;font-size:14.5px;color:#c9c9c9;letter-spacing:0.3px;">40</div>
<div style="left:897.5px;top:2180px;width:5.5px;height:1.6px;background:#a4a4a4;"></div>
<div class="t" style="left:879.07px;top:2193.83px;font-size:14.5px;color:#c9c9c9;letter-spacing:0.3px;">45</div>
<div style="left:897.5px;top:2200.1px;width:5.5px;height:1.6px;background:#a4a4a4;"></div>
<div class="t" style="left:879.07px;top:2213.93px;font-size:14.5px;color:#c9c9c9;letter-spacing:0.3px;">50</div>
<div style="left:897.5px;top:2220.2px;width:5.5px;height:1.6px;background:#a4a4a4;"></div>
<div class="t" style="left:879.07px;top:2233.63px;font-size:14.5px;color:#c9c9c9;letter-spacing:0.3px;">60</div>
<div style="left:897.5px;top:2239.9px;width:5.5px;height:1.6px;background:#a4a4a4;"></div>
<div style="left:901.8px;top:1974px;width:1.8px;height:268px;background:repeating-linear-gradient(#929292 0,#929292 1.600px,rgba(0,0,0,0) 1.600px,rgba(0,0,0,0) 4.100px);"></div>
<div style="left:816px;top:2296px;width:62px;height:32px;background:#676767;border-radius:7px;box-shadow:0 1px 1.500px rgba(0,0,0,.45),inset 0 1px 0 rgba(255,255,255,.09);"></div>
<div class="t" style="left:836.59px;top:2299.84px;font-size:25px;color:#fff;-webkit-text-stroke:.45px;">M</div>
<div style="left:888.5px;top:2256.5px;width:61px;height:32px;background:#676767;border-radius:7px;box-shadow:0 1px 1.500px rgba(0,0,0,.45),inset 0 1px 0 rgba(255,255,255,.09);"></div>
<div class="t" style="left:898.5px;top:2261.53px;font-size:23px;color:#fff;letter-spacing:0.68px;-webkit-text-stroke:.45px;">Bnc</div>
<div class="t" style="left:568.05px;top:2360.23px;font-size:23px;color:#ececec;letter-spacing:-0.13px;">Full Range Synth</div>
<div class="t" style="left:828.5px;top:2360.23px;font-size:23px;color:#ececec;letter-spacing:0.2px;">Stereo Out</div>
<div style="left:1000px;top:223px;width:2840px;height:76px;background:#494949;"></div>
<div style="left:1000px;top:299px;width:960px;height:75px;background:#494949;"></div>
<div style="left:1000px;top:298.5px;width:960px;height:1.5px;background:#565656;"></div>
<div style="left:1020px;top:242px;width:66px;height:40px;background:#535353;border-radius:10px;box-shadow:0 1px 1.500px rgba(0,0,0,.5),inset 0 1px 0 rgba(255,255,255,.09);"></div>
<svg style="left:1040px;top:250px;" width="24" height="25" viewBox="0 0 24 25"><g fill="none" stroke="#8e8e8e" stroke-width="2.400" stroke-linecap="round" stroke-linejoin="round"><path d="M2 9.500L10.500 1.500 19 9.500M10.500 2v15.500a5 5 0 0 0 5 5h5.500"/></g></svg>
<div style="left:1104px;top:242px;width:574px;height:40px;background:#5a5a5a;border-radius:10px;box-shadow:0 1px 1.500px rgba(0,0,0,.5),inset 0 1px 0 rgba(255,255,255,.09);"></div>
<div style="left:1306.5px;top:242px;width:1.5px;height:40px;background:rgba(0,0,0,.3);"></div>
<div style="left:1514.5px;top:242px;width:1.5px;height:40px;background:rgba(0,0,0,.3);"></div>
<div class="t" style="left:1125px;top:248.29px;font-size:26px;color:#fff;letter-spacing:0.42px;">Bearbeiten</div>
<svg style="left:1274.5px;top:257.5px;" width="15" height="9.5" viewBox="0 0 15 9.5"><path d="M1.500 1.500L7.5 8 L13.5 1.500" fill="none" stroke="#a6a6a6" stroke-width="2.600" stroke-linecap="round" stroke-linejoin="round"/></svg>
<div class="t" style="left:1329px;top:248.29px;font-size:26px;color:#fff;letter-spacing:0.44px;">Funktionen</div>
<svg style="left:1482.5px;top:257.5px;" width="15" height="9.5" viewBox="0 0 15 9.5"><path d="M1.500 1.500L7.5 8 L13.5 1.500" fill="none" stroke="#a6a6a6" stroke-width="2.600" stroke-linecap="round" stroke-linejoin="round"/></svg>
<div class="t" style="left:1537px;top:248.29px;font-size:26px;color:#fff;letter-spacing:0.71px;">Ansicht</div>
<svg style="left:1648.5px;top:257.5px;" width="15" height="9.5" viewBox="0 0 15 9.5"><path d="M1.500 1.500L7.5 8 L13.5 1.500" fill="none" stroke="#a6a6a6" stroke-width="2.600" stroke-linecap="round" stroke-linejoin="round"/></svg>
<div style="left:1696px;top:242px;width:126px;height:40px;background:#5a5a5a;border-radius:10px;box-shadow:0 1px 1.500px rgba(0,0,0,.5),inset 0 1px 0 rgba(255,255,255,.09);"></div>
<div style="left:1760px;top:242px;width:62px;height:40px;background:#3b6eb8;border-radius:0 10px 10px 0;"></div>
<div style="left:1758.5px;top:242px;width:1.5px;height:40px;background:rgba(0,0,0,.3);"></div>
<svg style="left:1712.5px;top:249.5px;" width="26" height="25" viewBox="0 0 26 25"><rect x="0" y="0" width="6.600" height="6.600" rx="1.600" fill="#fff"/><rect x="9.2" y="0" width="6.600" height="6.600" rx="1.600" fill="#fff"/><rect x="18.4" y="0" width="6.600" height="6.600" rx="1.600" fill="#fff"/><rect x="0" y="8.7" width="6.600" height="6.600" rx="1.600" fill="#fff"/><rect x="9.2" y="8.7" width="6.600" height="6.600" rx="1.600" fill="#fff"/><rect x="18.4" y="8.7" width="6.600" height="6.600" rx="1.600" fill="#fff"/><rect x="0" y="17.4" width="6.600" height="6.600" rx="1.600" fill="#fff"/><rect x="9.2" y="17.4" width="6.600" height="6.600" rx="1.600" fill="#fff"/><rect x="18.4" y="17.4" width="6.600" height="6.600" rx="1.600" fill="#fff"/></svg>
<svg style="left:1775px;top:252px;" width="29" height="22" viewBox="0 0 29 22"><g fill="#fff"><rect x="0" y="0" width="9" height="5" rx="1"/><rect x="11.500" y="0" width="17.500" height="5" rx="1"/><rect x="0" y="8.500" width="17.500" height="5" rx="1"/><rect x="20" y="8.500" width="9" height="5" rx="1"/><rect x="0" y="17" width="29" height="5" rx="1"/></g></svg>
<div style="left:1840px;top:242px;width:126.5px;height:40px;background:#5a5a5a;border-radius:10px;box-shadow:0 1px 1.500px rgba(0,0,0,.5),inset 0 1px 0 rgba(255,255,255,.09);"></div>
<div style="left:1902.5px;top:242px;width:1.5px;height:40px;background:rgba(0,0,0,.3);"></div>
<svg style="left:1850px;top:249px;" width="40" height="26" viewBox="0 0 40 26"><path d="M1 22h10M26 6.500h11M12.500 20.500L25 8" stroke="#fff" stroke-width="2.200" stroke-linecap="round"/><circle cx="12.500" cy="21" r="4.300" fill="#fff"/><circle cx="25.500" cy="6.500" r="4.300" fill="#fff"/></svg>
<svg style="left:1916px;top:250.5px;" width="38" height="23" viewBox="0 0 38 23"><path d="M1.500 1.500c12 0 22 20 35 20v-20c-13 0-23 20-35 20z" fill="none" stroke="#fff" stroke-width="2.200" stroke-linejoin="round"/></svg>
<div style="left:1984px;top:242px;width:66px;height:40px;background:#5a5a5a;border-radius:10px;box-shadow:0 1px 1.500px rgba(0,0,0,.5),inset 0 1px 0 rgba(255,255,255,.09);"></div>
<svg style="left:2003px;top:249px;" width="28" height="27" viewBox="0 0 28 27"><path d="M9.500 1h9l-1.500 6.500h-6z" fill="#fff"/><path d="M14 7v19" stroke="#fff" stroke-width="2.200"/><path d="M2 12l5.500 5L2 22M26 12l-5.500 5L26 22" fill="none" stroke="#fff" stroke-width="2" stroke-linecap="round" stroke-linejoin="round"/></svg>
<div style="left:2190px;top:242px;width:170px;height:40px;background:#5a5a5a;border-radius:10px;box-shadow:0 1px 1.500px rgba(0,0,0,.5),inset 0 1px 0 rgba(255,255,255,.09);"></div>
<div style="left:2274.5px;top:242px;width:1.5px;height:40px;background:rgba(0,0,0,.3);"></div>
<svg style="left:2211px;top:248px;" width="17" height="27" viewBox="0 0 17 27"><path d="M1 1v20.500l5-4.500 4 9 3.600-1.600-4-8.800 6.500-.5z" fill="#fff"/></svg>
<svg style="left:2243px;top:257.5px;" width="15" height="9.5" viewBox="0 0 15 9.5"><path d="M1.500 1.500L7.5 8 L13.5 1.500" fill="none" stroke="#a6a6a6" stroke-width="2.600" stroke-linecap="round" stroke-linejoin="round"/></svg>
<svg style="left:2294px;top:250px;" width="24" height="24" viewBox="0 0 24 24"><path d="M3.500 3.500l17 17" stroke="#fff" stroke-width="2.200"/><circle cx="3.500" cy="3.500" r="2.600" fill="#fff"/><circle cx="20.500" cy="20.500" r="2.600" fill="#fff"/></svg>
<svg style="left:2330.5px;top:257.5px;" width="15" height="9.5" viewBox="0 0 15 9.5"><path d="M1.500 1.500L7.5 8 L13.5 1.500" fill="none" stroke="#a6a6a6" stroke-width="2.600" stroke-linecap="round" stroke-linejoin="round"/></svg>
<div class="t" style="left:2383.5px;top:245.99px;font-size:26px;color:#a3a3a3;letter-spacing:0.05px;">Einrasten:</div>
<div style="left:2512px;top:240.5px;width:324px;height:40px;background:#5a5a5a;border-radius:10px;box-shadow:0 1px 1.500px rgba(0,0,0,.5),inset 0 1px 0 rgba(255,255,255,.09);"></div>
<div class="t" style="left:2533px;top:245.99px;font-size:26px;color:#fff;letter-spacing:0.64px;">Intelligent</div>
<svg style="left:2808.5px;top:248.5px;" width="15.5" height="24" viewBox="0 0 15.5 24"><path d="M1.500 8.64 L7.75 1.500 L14 8.64 M1.500 15.36 L7.75 22.5 L14 15.36" fill="none" stroke="#b9b9b9" stroke-width="2.6" stroke-linecap="round" stroke-linejoin="round"/></svg>
<div class="t" style="left:2856.7px;top:245.99px;font-size:26px;color:#a3a3a3;letter-spacing:0.48px;">Verschieben:</div>
<div style="left:3022px;top:240.5px;width:260px;height:40px;background:#5a5a5a;border-radius:10px;box-shadow:0 1px 1.500px rgba(0,0,0,.5),inset 0 1px 0 rgba(255,255,255,.09);"></div>
<div class="t" style="left:3042.7px;top:245.99px;font-size:26px;color:#fff;letter-spacing:0.28px;">Keine Überlapp.</div>
<svg style="left:3254.5px;top:248.5px;" width="15.5" height="24" viewBox="0 0 15.5 24"><path d="M1.500 8.64 L7.75 1.500 L14 8.64 M1.500 15.36 L7.75 22.5 L14 15.36" fill="none" stroke="#b9b9b9" stroke-width="2.6" stroke-linecap="round" stroke-linejoin="round"/></svg>
<div style="left:3300px;top:240.5px;width:62px;height:40px;background:#3b6eb8;border-radius:10px;box-shadow:0 1px 1.500px rgba(0,0,0,.5),inset 0 1px 0 rgba(255,255,255,.09);"></div>
<svg style="left:3318px;top:246.5px;" width="26" height="28" viewBox="0 0 26 28"><rect x="0" y="11" width="2" height="6" rx="1" fill="#fff"/><rect x="4" y="7" width="2" height="14" rx="1" fill="#fff"/><rect x="8" y="0.5" width="2" height="27" rx="1" fill="#fff"/><rect x="12" y="7.5" width="2" height="13" rx="1" fill="#fff"/><rect x="16" y="3.5" width="2" height="21" rx="1" fill="#fff"/><rect x="20" y="9.5" width="2" height="9" rx="1" fill="#fff"/><rect x="24" y="12" width="2" height="4" rx="1" fill="#fff"/></svg>
<div style="left:3380px;top:240.5px;width:126px;height:40px;background:#5a5a5a;border-radius:10px;box-shadow:0 1px 1.500px rgba(0,0,0,.5),inset 0 1px 0 rgba(255,255,255,.09);"></div>
<div style="left:3442.5px;top:240.5px;width:1.5px;height:40px;background:rgba(0,0,0,.3);"></div>
<svg style="left:3403px;top:246.5px;" width="16" height="27" viewBox="0 0 16 27"><g fill="none" stroke="#fff" stroke-width="2" stroke-linecap="round" stroke-linejoin="round"><path d="M1 1h14M1 26h14M8 3.500v20M3.500 8L8 3.500l4.500 4.500M3.500 19L8 23.500l4.500-4.500"/></g></svg>
<svg style="left:3461.5px;top:252.5px;" width="27" height="16" viewBox="0 0 27 16"><g fill="none" stroke="#fff" stroke-width="2" stroke-linecap="round" stroke-linejoin="round"><path d="M1 1v14M26 1v14M3.500 8h20M8 3.500L3.500 8 8 12.500M19 3.500L23.500 8 19 12.500"/></g></svg>
<div style="left:3522px;top:240.5px;width:300px;height:40px;background:#3b3b3b;border-radius:12px;"></div>
<div style="left:3670.5px;top:240.5px;width:1.5px;height:40px;background:#222;"></div>
<svg style="left:3536px;top:248px;" width="15" height="25" viewBox="0 0 15 25"><g fill="none" stroke="#b7b7b7" stroke-width="2" stroke-linecap="round" stroke-linejoin="round"><path d="M7.500 2v21M2 7.500L7.500 2 13 7.500M2 17.500L7.500 23 13 17.500"/></g></svg>
<div style="left:3566px;top:256px;width:92px;height:8.5px;background:#2d2d2d;border-radius:4.25px;"></div>
<div style="left:3578px;top:248.2px;width:24px;height:24px;background:#9b9b9b;border-radius:12px;"></div>
<svg style="left:3681.5px;top:253px;" width="23" height="15" viewBox="0 0 23 15"><g fill="none" stroke="#b7b7b7" stroke-width="2" stroke-linecap="round" stroke-linejoin="round"><path d="M2 7.500h19M7 2L1.500 7.500 7 13M16 2l5.500 5.500L16 13"/></g></svg>
<div style="left:3714px;top:256px;width:94px;height:8.5px;background:#2d2d2d;border-radius:4.25px;"></div>
<div style="left:3734px;top:248.2px;width:24px;height:24px;background:#9b9b9b;border-radius:12px;"></div>
<div style="left:1020px;top:316.5px;width:66px;height:39.5px;background:#5a5a5a;border-radius:10px;box-shadow:0 1px 1.500px rgba(0,0,0,.5),inset 0 1px 0 rgba(255,255,255,.09);"></div>
<svg style="left:1042px;top:325px;" width="22" height="22" viewBox="0 0 22 22"><path d="M11 1v20M1 11h20" stroke="#fff" stroke-width="2.400" stroke-linecap="round"/></svg>
<div style="left:1106px;top:316.5px;width:66px;height:39.5px;background:#5a5a5a;border-radius:10px;box-shadow:0 1px 1.500px rgba(0,0,0,.5),inset 0 1px 0 rgba(255,255,255,.09);"></div>
<svg style="left:1124px;top:323px;" width="32" height="26" viewBox="0 0 32 26"><g fill="none" stroke="#fff" stroke-width="2.200" stroke-linejoin="round" stroke-linecap="round"><path d="M5.500 17.500h-1.500a2.500 2.500 0 0 1-2.500-2.500v-11a2.500 2.500 0 0 1 2.500-2.500h16a2.500 2.500 0 0 1 2.500 2.500v2"/><rect x="8" y="8" width="22" height="16.500" rx="2.500"/><path d="M19 11.500v9.500M14.200 16.250h9.600"/></g></svg>
<div style="left:1192px;top:316.5px;width:66px;height:39.5px;background:#5a5a5a;border-radius:10px;box-shadow:0 1px 1.500px rgba(0,0,0,.5),inset 0 1px 0 rgba(255,255,255,.09);"></div>
<div class="t" style="left:1216px;top:323.14px;font-size:27px;color:#fff;">S</div>
<div style="left:1874px;top:316.5px;width:66px;height:39.5px;background:#5a5a5a;border-radius:10px;box-shadow:0 1px 1.500px rgba(0,0,0,.5),inset 0 1px 0 rgba(255,255,255,.09);"></div>
<svg style="left:1892px;top:324px;" width="30" height="24" viewBox="0 0 30 24"><g fill="none" stroke="#fff" stroke-width="2.200" stroke-linejoin="round" stroke-linecap="round"><rect x="1.200" y="1.200" width="27.600" height="21.600" rx="2.500"/><path d="M1.200 4h27.600" stroke-width="2.800"/><path d="M15 8.500v9M10.800 13.500l4.200 4.200 4.200-4.200"/></g></svg>
<div style="left:1000px;top:372px;width:960px;height:2.5px;background:#3a3a3a;"></div>
<div style="left:1000px;top:374px;width:960px;height:2026px;background:#585858;"></div>
<div style="left:1000px;top:479.5px;width:960px;height:2.5px;background:#434343;"></div>
<div class="t" style="left:1014.77px;top:413.69px;font-size:26px;color:#fff;">1</div>
<div style="left:1064.5px;top:406.5px;width:59px;height:43px;background:linear-gradient(#2b4535,#2a4032);border-radius:4px;border:1px solid rgba(0,0,0,.4);box-shadow:inset 0 1px 0 rgba(255,255,255,.08),0 1px 1px rgba(0,0,0,.25);"></div>
<svg style="left:1064.5px;top:406.5px;" width="59" height="43" viewBox="0 0 59 43"><g fill="#7eea80"><ellipse cx="20.200" cy="34.400" rx="5.100" ry="3.900" transform="rotate(-20 20.200 34.400)"/><ellipse cx="37.500" cy="31.300" rx="5.100" ry="3.900" transform="rotate(-20 37.500 31.300)"/><path d="M21.900 10.100a1.600 1.600 0 0 1 1.300-1.600L40.600 5.200a1.300 1.300 0 0 1 1.600 1.300V31.500h-2.900V13.300L24.800 16.200V34.600h-2.900z"/></g></svg>
<div class="t" style="left:1143px;top:391.79px;font-size:26px;color:#fff;letter-spacing:0.46px;">Rhodesy guitaret</div>
<div class="t" style="left:1357.8px;top:392.64px;font-size:25px;color:#8b8b8b;letter-spacing:-0.7px;">| Ch1</div>
<div style="left:1144px;top:432px;width:82px;height:32px;background:#696969;border-radius:8px;box-shadow:0 1px 1.500px rgba(0,0,0,.5),inset 0 1px 0 rgba(255,255,255,.09);"></div>
<div style="left:1184.5px;top:432px;width:1.5px;height:32px;background:rgba(0,0,0,.28);"></div>
<div class="t" style="left:1154.42px;top:437.03px;font-size:23px;color:#fff;-webkit-text-stroke:.3px;">M</div>
<div class="t" style="left:1197.83px;top:437.03px;font-size:23px;color:#fff;-webkit-text-stroke:.3px;">S</div>
<div style="left:1237.5px;top:432px;width:40.5px;height:32px;background:#696969;border-radius:8px;box-shadow:0 1px 1.500px rgba(0,0,0,.5),inset 0 1px 0 rgba(255,255,255,.09);"></div>
<div class="t" style="left:1249.69px;top:437.03px;font-size:23px;color:#fff;-webkit-text-stroke:.3px;">R</div>
<div style="left:1618px;top:430px;width:256px;height:36px;background:#383838;border-radius:18px;"></div>
<div style="left:1784px;top:432px;width:32px;height:32px;background:#8c8c8c;border-radius:16px;box-shadow:0 1px 2px rgba(0,0,0,.45),inset 0 1px 0 rgba(255,255,255,.15);"></div>
<svg style="left:1888px;top:422px;" width="50" height="50" viewBox="0 0 50 50"><defs><radialGradient id="kn19577" cx=".5" cy=".62" r=".62"><stop offset=".82" stop-color="rgba(0,0,0,.13)"/><stop offset="1" stop-color="rgba(0,0,0,0)"/></radialGradient></defs><path d="M15.06 42.93 A20.5 20.5 0 1 1 34.94 42.93" fill="none" stroke="#393939" stroke-width="9"/><circle cx="25" cy="26.8" r="19" fill="url(#kn19577)"/><circle cx="25" cy="25" r="17" fill="#8c8c8c"/><rect x="23.8" y="4" width="2.4" height="4" fill="#6fe06f"/><rect x="23.7" y="10" width="2.600" height="5.78" fill="#0c0c0c"/></svg>
<div style="left:1000px;top:587.5px;width:960px;height:2.5px;background:#434343;"></div>
<div class="t" style="left:1014.77px;top:521.69px;font-size:26px;color:#fff;">2</div>
<div style="left:1064.5px;top:514.5px;width:59px;height:43px;background:linear-gradient(#2b4535,#2a4032);border-radius:4px;border:1px solid rgba(0,0,0,.4);box-shadow:inset 0 1px 0 rgba(255,255,255,.08),0 1px 1px rgba(0,0,0,.25);"></div>
<svg style="left:1064.5px;top:514.5px;" width="59" height="43" viewBox="0 0 59 43"><g fill="#7eea80"><ellipse cx="20.200" cy="34.400" rx="5.100" ry="3.900" transform="rotate(-20 20.200 34.400)"/><ellipse cx="37.500" cy="31.300" rx="5.100" ry="3.900" transform="rotate(-20 37.500 31.300)"/><path d="M21.900 10.100a1.600 1.600 0 0 1 1.300-1.600L40.600 5.200a1.300 1.300 0 0 1 1.600 1.300V31.500h-2.900V13.300L24.800 16.200V34.600h-2.900z"/></g></svg>
<div class="t" style="left:1143px;top:499.79px;font-size:26px;color:#fff;letter-spacing:0.51px;">basic dark pad wheel</div>
<div class="t" style="left:1408.3px;top:500.64px;font-size:25px;color:#8b8b8b;letter-spacing:-0.7px;">| Ch2</div>
<div style="left:1144px;top:540px;width:82px;height:32px;background:#696969;border-radius:8px;box-shadow:0 1px 1.500px rgba(0,0,0,.5),inset 0 1px 0 rgba(255,255,255,.09);"></div>
<div style="left:1184.5px;top:540px;width:1.5px;height:32px;background:rgba(0,0,0,.28);"></div>
<div class="t" style="left:1154.42px;top:545.03px;font-size:23px;color:#fff;-webkit-text-stroke:.3px;">M</div>
<div class="t" style="left:1197.83px;top:545.03px;font-size:23px;color:#fff;-webkit-text-stroke:.3px;">S</div>
<div style="left:1237.5px;top:540px;width:40.5px;height:32px;background:#696969;border-radius:8px;box-shadow:0 1px 1.500px rgba(0,0,0,.5),inset 0 1px 0 rgba(255,255,255,.09);"></div>
<div class="t" style="left:1249.69px;top:545.03px;font-size:23px;color:#fff;-webkit-text-stroke:.3px;">R</div>
<div style="left:1618px;top:538px;width:256px;height:36px;background:#383838;border-radius:18px;"></div>
<div style="left:1784px;top:540px;width:32px;height:32px;background:#8c8c8c;border-radius:16px;box-shadow:0 1px 2px rgba(0,0,0,.45),inset 0 1px 0 rgba(255,255,255,.15);"></div>
<svg style="left:1888px;top:530px;" width="50" height="50" viewBox="0 0 50 50"><defs><radialGradient id="kn19685" cx=".5" cy=".62" r=".62"><stop offset=".82" stop-color="rgba(0,0,0,.13)"/><stop offset="1" stop-color="rgba(0,0,0,0)"/></radialGradient></defs><path d="M15.06 42.93 A20.5 20.5 0 1 1 34.94 42.93" fill="none" stroke="#393939" stroke-width="9"/><circle cx="25" cy="26.8" r="19" fill="url(#kn19685)"/><circle cx="25" cy="25" r="17" fill="#8c8c8c"/><rect x="23.8" y="4" width="2.4" height="4" fill="#6fe06f"/><rect x="23.7" y="10" width="2.600" height="5.78" fill="#0c0c0c"/></svg>
<div style="left:1000px;top:695.5px;width:960px;height:2.5px;background:#434343;"></div>
<div class="t" style="left:1014.77px;top:629.69px;font-size:26px;color:#fff;">3</div>
<div style="left:1064.5px;top:622.5px;width:59px;height:43px;background:linear-gradient(#2b4535,#2a4032);border-radius:4px;border:1px solid rgba(0,0,0,.4);box-shadow:inset 0 1px 0 rgba(255,255,255,.08),0 1px 1px rgba(0,0,0,.25);"></div>
<svg style="left:1064.5px;top:622.5px;" width="59" height="43" viewBox="0 0 59 43"><g fill="#7eea80"><ellipse cx="20.200" cy="34.400" rx="5.100" ry="3.900" transform="rotate(-20 20.200 34.400)"/><ellipse cx="37.500" cy="31.300" rx="5.100" ry="3.900" transform="rotate(-20 37.500 31.300)"/><path d="M21.900 10.100a1.600 1.600 0 0 1 1.300-1.600L40.600 5.200a1.300 1.300 0 0 1 1.600 1.300V31.500h-2.900V13.300L24.800 16.200V34.600h-2.900z"/></g></svg>
<div class="t" style="left:1143px;top:607.79px;font-size:26px;color:#fff;letter-spacing:0.72px;">adagio transparent strings bright</div>
<div class="t" style="left:1550.3px;top:608.64px;font-size:25px;color:#8b8b8b;letter-spacing:-0.7px;">| Ch3</div>
<div style="left:1144px;top:648px;width:82px;height:32px;background:#696969;border-radius:8px;box-shadow:0 1px 1.500px rgba(0,0,0,.5),inset 0 1px 0 rgba(255,255,255,.09);"></div>
<div style="left:1184.5px;top:648px;width:1.5px;height:32px;background:rgba(0,0,0,.28);"></div>
<div class="t" style="left:1154.42px;top:653.03px;font-size:23px;color:#fff;-webkit-text-stroke:.3px;">M</div>
<div class="t" style="left:1197.83px;top:653.03px;font-size:23px;color:#fff;-webkit-text-stroke:.3px;">S</div>
<div style="left:1237.5px;top:648px;width:40.5px;height:32px;background:#696969;border-radius:8px;box-shadow:0 1px 1.500px rgba(0,0,0,.5),inset 0 1px 0 rgba(255,255,255,.09);"></div>
<div class="t" style="left:1249.69px;top:653.03px;font-size:23px;color:#fff;-webkit-text-stroke:.3px;">R</div>
<div style="left:1618px;top:646px;width:256px;height:36px;background:#383838;border-radius:18px;"></div>
<div style="left:1784px;top:648px;width:32px;height:32px;background:#8c8c8c;border-radius:16px;box-shadow:0 1px 2px rgba(0,0,0,.45),inset 0 1px 0 rgba(255,255,255,.15);"></div>
<svg style="left:1888px;top:638px;" width="50" height="50" viewBox="0 0 50 50"><defs><radialGradient id="kn19793" cx=".5" cy=".62" r=".62"><stop offset=".82" stop-color="rgba(0,0,0,.13)"/><stop offset="1" stop-color="rgba(0,0,0,0)"/></radialGradient></defs><path d="M15.06 42.93 A20.5 20.5 0 1 1 34.94 42.93" fill="none" stroke="#393939" stroke-width="9"/><circle cx="25" cy="26.8" r="19" fill="url(#kn19793)"/><circle cx="25" cy="25" r="17" fill="#8c8c8c"/><rect x="23.8" y="4" width="2.4" height="4" fill="#6fe06f"/><rect x="23.7" y="10" width="2.600" height="5.78" fill="#0c0c0c"/></svg>
<div style="left:1000px;top:803.5px;width:960px;height:2.5px;background:#434343;"></div>
<div class="t" style="left:1014.77px;top:737.69px;font-size:26px;color:#fff;">4</div>
<div style="left:1064.5px;top:730.5px;width:59px;height:43px;background:linear-gradient(#2b4535,#2a4032);border-radius:4px;border:1px solid rgba(0,0,0,.4);box-shadow:inset 0 1px 0 rgba(255,255,255,.08),0 1px 1px rgba(0,0,0,.25);"></div>
<svg style="left:1064.5px;top:730.5px;" width="59" height="43" viewBox="0 0 59 43"><g fill="#7eea80"><ellipse cx="20.200" cy="34.400" rx="5.100" ry="3.900" transform="rotate(-20 20.200 34.400)"/><ellipse cx="37.500" cy="31.300" rx="5.100" ry="3.900" transform="rotate(-20 37.500 31.300)"/><path d="M21.900 10.100a1.600 1.600 0 0 1 1.300-1.600L40.600 5.200a1.300 1.300 0 0 1 1.600 1.300V31.500h-2.900V13.300L24.800 16.200V34.600h-2.900z"/></g></svg>
<div class="t" style="left:1143px;top:715.79px;font-size:26px;color:#fff;letter-spacing:0.6px;">musicboxbeat</div>
<div class="t" style="left:1321.3px;top:716.64px;font-size:25px;color:#8b8b8b;letter-spacing:-0.7px;">| Ch4</div>
<div style="left:1144px;top:756px;width:82px;height:32px;background:#696969;border-radius:8px;box-shadow:0 1px 1.500px rgba(0,0,0,.5),inset 0 1px 0 rgba(255,255,255,.09);"></div>
<div style="left:1184.5px;top:756px;width:1.5px;height:32px;background:rgba(0,0,0,.28);"></div>
<div class="t" style="left:1154.42px;top:761.03px;font-size:23px;color:#fff;-webkit-text-stroke:.3px;">M</div>
<div class="t" style="left:1197.83px;top:761.03px;font-size:23px;color:#fff;-webkit-text-stroke:.3px;">S</div>
<div style="left:1237.5px;top:756px;width:40.5px;height:32px;background:#696969;border-radius:8px;box-shadow:0 1px 1.500px rgba(0,0,0,.5),inset 0 1px 0 rgba(255,255,255,.09);"></div>
<div class="t" style="left:1249.69px;top:761.03px;font-size:23px;color:#fff;-webkit-text-stroke:.3px;">R</div>
<div style="left:1618px;top:754px;width:256px;height:36px;background:#383838;border-radius:18px;"></div>
<div style="left:1784px;top:756px;width:32px;height:32px;background:#8c8c8c;border-radius:16px;box-shadow:0 1px 2px rgba(0,0,0,.45),inset 0 1px 0 rgba(255,255,255,.15);"></div>
<svg style="left:1888px;top:746px;" width="50" height="50" viewBox="0 0 50 50"><defs><radialGradient id="kn19901" cx=".5" cy=".62" r=".62"><stop offset=".82" stop-color="rgba(0,0,0,.13)"/><stop offset="1" stop-color="rgba(0,0,0,0)"/></radialGradient></defs><path d="M15.06 42.93 A20.5 20.5 0 1 1 34.94 42.93" fill="none" stroke="#393939" stroke-width="9"/><circle cx="25" cy="26.8" r="19" fill="url(#kn19901)"/><circle cx="25" cy="25" r="17" fill="#8c8c8c"/><rect x="23.8" y="4" width="2.4" height="4" fill="#6fe06f"/><rect x="23.7" y="10" width="2.600" height="5.78" fill="#0c0c0c"/></svg>
<div style="left:1000px;top:911.5px;width:960px;height:2.5px;background:#434343;"></div>
<div class="t" style="left:1014.77px;top:845.69px;font-size:26px;color:#fff;">5</div>
<div style="left:1064.5px;top:838.5px;width:59px;height:43px;background:linear-gradient(#2b4535,#2a4032);border-radius:4px;border:1px solid rgba(0,0,0,.4);box-shadow:inset 0 1px 0 rgba(255,255,255,.08),0 1px 1px rgba(0,0,0,.25);"></div>
<svg style="left:1064.5px;top:838.5px;" width="59" height="43" viewBox="0 0 59 43"><g fill="#7eea80"><ellipse cx="20.200" cy="34.400" rx="5.100" ry="3.900" transform="rotate(-20 20.200 34.400)"/><ellipse cx="37.500" cy="31.300" rx="5.100" ry="3.900" transform="rotate(-20 37.500 31.300)"/><path d="M21.900 10.100a1.600 1.600 0 0 1 1.300-1.600L40.600 5.200a1.300 1.300 0 0 1 1.600 1.300V31.500h-2.900V13.300L24.800 16.200V34.600h-2.900z"/></g></svg>
<div class="t" style="left:1143px;top:823.79px;font-size:26px;color:#fff;letter-spacing:0.6px;">Preset 0</div>
<div class="t" style="left:1255.3px;top:824.64px;font-size:25px;color:#8b8b8b;letter-spacing:-0.7px;">| Ch5</div>
<div style="left:1144px;top:864px;width:82px;height:32px;background:#696969;border-radius:8px;box-shadow:0 1px 1.500px rgba(0,0,0,.5),inset 0 1px 0 rgba(255,255,255,.09);"></div>
<div style="left:1184.5px;top:864px;width:1.5px;height:32px;background:rgba(0,0,0,.28);"></div>
<div class="t" style="left:1154.42px;top:869.03px;font-size:23px;color:#fff;-webkit-text-stroke:.3px;">M</div>
<div class="t" style="left:1197.83px;top:869.03px;font-size:23px;color:#fff;-webkit-text-stroke:.3px;">S</div>
<div style="left:1237.5px;top:864px;width:40.5px;height:32px;background:#696969;border-radius:8px;box-shadow:0 1px 1.500px rgba(0,0,0,.5),inset 0 1px 0 rgba(255,255,255,.09);"></div>
<div class="t" style="left:1249.69px;top:869.03px;font-size:23px;color:#fff;-webkit-text-stroke:.3px;">R</div>
<div style="left:1618px;top:862px;width:256px;height:36px;background:#383838;border-radius:18px;"></div>
<div style="left:1784px;top:864px;width:32px;height:32px;background:#8c8c8c;border-radius:16px;box-shadow:0 1px 2px rgba(0,0,0,.45),inset 0 1px 0 rgba(255,255,255,.15);"></div>
<svg style="left:1888px;top:854px;" width="50" height="50" viewBox="0 0 50 50"><defs><radialGradient id="kn20009" cx=".5" cy=".62" r=".62"><stop offset=".82" stop-color="rgba(0,0,0,.13)"/><stop offset="1" stop-color="rgba(0,0,0,0)"/></radialGradient></defs><path d="M15.06 42.93 A20.5 20.5 0 1 1 34.94 42.93" fill="none" stroke="#393939" stroke-width="9"/><circle cx="25" cy="26.8" r="19" fill="url(#kn20009)"/><circle cx="25" cy="25" r="17" fill="#8c8c8c"/><rect x="23.8" y="4" width="2.4" height="4" fill="#6fe06f"/><rect x="23.7" y="10" width="2.600" height="5.78" fill="#0c0c0c"/></svg>
<div style="left:1000px;top:1019.5px;width:960px;height:2.5px;background:#434343;"></div>
<div class="t" style="left:1014.77px;top:953.69px;font-size:26px;color:#fff;">6</div>
<div style="left:1064.5px;top:946.5px;width:59px;height:43px;background:linear-gradient(#2b4535,#2a4032);border-radius:4px;border:1px solid rgba(0,0,0,.4);box-shadow:inset 0 1px 0 rgba(255,255,255,.08),0 1px 1px rgba(0,0,0,.25);"></div>
<svg style="left:1064.5px;top:946.5px;" width="59" height="43" viewBox="0 0 59 43"><g fill="#7eea80"><ellipse cx="20.200" cy="34.400" rx="5.100" ry="3.900" transform="rotate(-20 20.200 34.400)"/><ellipse cx="37.500" cy="31.300" rx="5.100" ry="3.900" transform="rotate(-20 37.500 31.300)"/><path d="M21.900 10.100a1.600 1.600 0 0 1 1.300-1.600L40.600 5.200a1.300 1.300 0 0 1 1.600 1.300V31.500h-2.900V13.300L24.800 16.200V34.600h-2.900z"/></g></svg>
<div class="t" style="left:1143px;top:931.79px;font-size:26px;color:#fff;letter-spacing:0.6px;">Preset 0</div>
<div class="t" style="left:1255.3px;top:932.64px;font-size:25px;color:#8b8b8b;letter-spacing:-0.7px;">| Ch6</div>
<div style="left:1144px;top:972px;width:82px;height:32px;background:#696969;border-radius:8px;box-shadow:0 1px 1.500px rgba(0,0,0,.5),inset 0 1px 0 rgba(255,255,255,.09);"></div>
<div style="left:1184.5px;top:972px;width:1.5px;height:32px;background:rgba(0,0,0,.28);"></div>
<div class="t" style="left:1154.42px;top:977.03px;font-size:23px;color:#fff;-webkit-text-stroke:.3px;">M</div>
<div class="t" style="left:1197.83px;top:977.03px;font-size:23px;color:#fff;-webkit-text-stroke:.3px;">S</div>
<div style="left:1237.5px;top:972px;width:40.5px;height:32px;background:#696969;border-radius:8px;box-shadow:0 1px 1.500px rgba(0,0,0,.5),inset 0 1px 0 rgba(255,255,255,.09);"></div>
<div class="t" style="left:1249.69px;top:977.03px;font-size:23px;color:#fff;-webkit-text-stroke:.3px;">R</div>
<div style="left:1618px;top:970px;width:256px;height:36px;background:#383838;border-radius:18px;"></div>
<div style="left:1784px;top:972px;width:32px;height:32px;background:#8c8c8c;border-radius:16px;box-shadow:0 1px 2px rgba(0,0,0,.45),inset 0 1px 0 rgba(255,255,255,.15);"></div>
<svg style="left:1888px;top:962px;" width="50" height="50" viewBox="0 0 50 50"><defs><radialGradient id="kn20117" cx=".5" cy=".62" r=".62"><stop offset=".82" stop-color="rgba(0,0,0,.13)"/><stop offset="1" stop-color="rgba(0,0,0,0)"/></radialGradient></defs><path d="M15.06 42.93 A20.5 20.5 0 1 1 34.94 42.93" fill="none" stroke="#393939" stroke-width="9"/><circle cx="25" cy="26.8" r="19" fill="url(#kn20117)"/><circle cx="25" cy="25" r="17" fill="#8c8c8c"/><rect x="23.8" y="4" width="2.4" height="4" fill="#6fe06f"/><rect x="23.7" y="10" width="2.600" height="5.78" fill="#0c0c0c"/></svg>
<div style="left:1000px;top:1127.5px;width:960px;height:2.5px;background:#434343;"></div>
<div class="t" style="left:1014.77px;top:1061.69px;font-size:26px;color:#fff;">7</div>
<div style="left:1064.5px;top:1054.5px;width:59px;height:43px;background:linear-gradient(#2b4535,#2a4032);border-radius:4px;border:1px solid rgba(0,0,0,.4);box-shadow:inset 0 1px 0 rgba(255,255,255,.08),0 1px 1px rgba(0,0,0,.25);"></div>
<svg style="left:1064.5px;top:1054.5px;" width="59" height="43" viewBox="0 0 59 43"><g fill="#7eea80"><ellipse cx="20.200" cy="34.400" rx="5.100" ry="3.900" transform="rotate(-20 20.200 34.400)"/><ellipse cx="37.500" cy="31.300" rx="5.100" ry="3.900" transform="rotate(-20 37.500 31.300)"/><path d="M21.900 10.100a1.600 1.600 0 0 1 1.300-1.600L40.600 5.200a1.300 1.300 0 0 1 1.600 1.300V31.500h-2.900V13.300L24.800 16.200V34.600h-2.900z"/></g></svg>
<div class="t" style="left:1143px;top:1039.79px;font-size:26px;color:#fff;letter-spacing:0.6px;">Preset 0</div>
<div class="t" style="left:1255.3px;top:1040.64px;font-size:25px;color:#8b8b8b;letter-spacing:-0.7px;">| Ch7</div>
<div style="left:1144px;top:1080px;width:82px;height:32px;background:#696969;border-radius:8px;box-shadow:0 1px 1.500px rgba(0,0,0,.5),inset 0 1px 0 rgba(255,255,255,.09);"></div>
<div style="left:1184.5px;top:1080px;width:1.5px;height:32px;background:rgba(0,0,0,.28);"></div>
<div class="t" style="left:1154.42px;top:1085.03px;font-size:23px;color:#fff;-webkit-text-stroke:.3px;">M</div>
<div class="t" style="left:1197.83px;top:1085.03px;font-size:23px;color:#fff;-webkit-text-stroke:.3px;">S</div>
<div style="left:1237.5px;top:1080px;width:40.5px;height:32px;background:#696969;border-radius:8px;box-shadow:0 1px 1.500px rgba(0,0,0,.5),inset 0 1px 0 rgba(255,255,255,.09);"></div>
<div class="t" style="left:1249.69px;top:1085.03px;font-size:23px;color:#fff;-webkit-text-stroke:.3px;">R</div>
<div style="left:1618px;top:1078px;width:256px;height:36px;background:#383838;border-radius:18px;"></div>
<div style="left:1784px;top:1080px;width:32px;height:32px;background:#8c8c8c;border-radius:16px;box-shadow:0 1px 2px rgba(0,0,0,.45),inset 0 1px 0 rgba(255,255,255,.15);"></div>
<svg style="left:1888px;top:1070px;" width="50" height="50" viewBox="0 0 50 50"><defs><radialGradient id="kn20225" cx=".5" cy=".62" r=".62"><stop offset=".82" stop-color="rgba(0,0,0,.13)"/><stop offset="1" stop-color="rgba(0,0,0,0)"/></radialGradient></defs><path d="M15.06 42.93 A20.5 20.5 0 1 1 34.94 42.93" fill="none" stroke="#393939" stroke-width="9"/><circle cx="25" cy="26.8" r="19" fill="url(#kn20225)"/><circle cx="25" cy="25" r="17" fill="#8c8c8c"/><rect x="23.8" y="4" width="2.4" height="4" fill="#6fe06f"/><rect x="23.7" y="10" width="2.600" height="5.78" fill="#0c0c0c"/></svg>
<div style="left:1000px;top:1235.5px;width:960px;height:2.5px;background:#434343;"></div>
<div class="t" style="left:1014.77px;top:1169.69px;font-size:26px;color:#fff;">8</div>
<div style="left:1064.5px;top:1162.5px;width:59px;height:43px;background:linear-gradient(#2b4535,#2a4032);border-radius:4px;border:1px solid rgba(0,0,0,.4);box-shadow:inset 0 1px 0 rgba(255,255,255,.08),0 1px 1px rgba(0,0,0,.25);"></div>
<svg style="left:1064.5px;top:1162.5px;" width="59" height="43" viewBox="0 0 59 43"><g fill="#7eea80"><ellipse cx="20.200" cy="34.400" rx="5.100" ry="3.900" transform="rotate(-20 20.200 34.400)"/><ellipse cx="37.500" cy="31.300" rx="5.100" ry="3.900" transform="rotate(-20 37.500 31.300)"/><path d="M21.900 10.100a1.600 1.600 0 0 1 1.300-1.600L40.600 5.200a1.300 1.300 0 0 1 1.600 1.300V31.500h-2.900V13.300L24.800 16.200V34.600h-2.900z"/></g></svg>
<div class="t" style="left:1143px;top:1147.79px;font-size:26px;color:#fff;letter-spacing:0.54px;">purdy chaos</div>
<div class="t" style="left:1301.3px;top:1148.64px;font-size:25px;color:#8b8b8b;letter-spacing:-0.7px;">| Ch8</div>
<div style="left:1144px;top:1188px;width:82px;height:32px;background:#696969;border-radius:8px;box-shadow:0 1px 1.500px rgba(0,0,0,.5),inset 0 1px 0 rgba(255,255,255,.09);"></div>
<div style="left:1184.5px;top:1188px;width:1.5px;height:32px;background:rgba(0,0,0,.28);"></div>
<div class="t" style="left:1154.42px;top:1193.03px;font-size:23px;color:#fff;-webkit-text-stroke:.3px;">M</div>
<div class="t" style="left:1197.83px;top:1193.03px;font-size:23px;color:#fff;-webkit-text-stroke:.3px;">S</div>
<div style="left:1237.5px;top:1188px;width:40.5px;height:32px;background:#696969;border-radius:8px;box-shadow:0 1px 1.500px rgba(0,0,0,.5),inset 0 1px 0 rgba(255,255,255,.09);"></div>
<div class="t" style="left:1249.69px;top:1193.03px;font-size:23px;color:#fff;-webkit-text-stroke:.3px;">R</div>
<div style="left:1618px;top:1186px;width:256px;height:36px;background:#383838;border-radius:18px;"></div>
<div style="left:1784px;top:1188px;width:32px;height:32px;background:#8c8c8c;border-radius:16px;box-shadow:0 1px 2px rgba(0,0,0,.45),inset 0 1px 0 rgba(255,255,255,.15);"></div>
<svg style="left:1888px;top:1178px;" width="50" height="50" viewBox="0 0 50 50"><defs><radialGradient id="kn20333" cx=".5" cy=".62" r=".62"><stop offset=".82" stop-color="rgba(0,0,0,.13)"/><stop offset="1" stop-color="rgba(0,0,0,0)"/></radialGradient></defs><path d="M15.06 42.93 A20.5 20.5 0 1 1 34.94 42.93" fill="none" stroke="#393939" stroke-width="9"/><circle cx="25" cy="26.8" r="19" fill="url(#kn20333)"/><circle cx="25" cy="25" r="17" fill="#8c8c8c"/><rect x="23.8" y="4" width="2.4" height="4" fill="#6fe06f"/><rect x="23.7" y="10" width="2.600" height="5.78" fill="#0c0c0c"/></svg>
<div style="left:1000px;top:1343.5px;width:960px;height:2.5px;background:#434343;"></div>
<div class="t" style="left:1014.77px;top:1277.69px;font-size:26px;color:#fff;">9</div>
<div style="left:1064.5px;top:1270.5px;width:59px;height:43px;background:radial-gradient(#34445c,#2b3648);border-radius:4px;border:1px solid rgba(0,0,0,.4);box-shadow:inset 0 1px 0 rgba(255,255,255,.08),0 1px 1px rgba(0,0,0,.25);"></div>
<svg style="left:1064.5px;top:1270.5px;" width="60" height="44" viewBox="0 0 60 44"><rect x="6.1" y="19.5" width="2.200" height="4" rx="1.100" fill="#6db6f7"/><rect x="10.13" y="16.5" width="2.200" height="10" rx="1.100" fill="#6db6f7"/><rect x="14.16" y="17.75" width="2.200" height="7.5" rx="1.100" fill="#6db6f7"/><rect x="18.19" y="12.5" width="2.200" height="18" rx="1.100" fill="#6db6f7"/><rect x="22.22" y="16.5" width="2.200" height="10" rx="1.100" fill="#6db6f7"/><rect x="26.25" y="12.5" width="2.200" height="18" rx="1.100" fill="#6db6f7"/><rect x="30.28" y="6.5" width="2.200" height="30" rx="1.100" fill="#6db6f7"/><rect x="34.31" y="12.5" width="2.200" height="18" rx="1.100" fill="#6db6f7"/><rect x="38.34" y="16.5" width="2.200" height="10" rx="1.100" fill="#6db6f7"/><rect x="42.37" y="13" width="2.200" height="17" rx="1.100" fill="#6db6f7"/><rect x="46.4" y="16.5" width="2.200" height="10" rx="1.100" fill="#6db6f7"/><rect x="50.43" y="19.5" width="2.200" height="4" rx="1.100" fill="#6db6f7"/></svg>
<div class="t" style="left:1143px;top:1255.79px;font-size:26px;color:#fff;letter-spacing:0.29px;">Marcus</div>
<div style="left:1144px;top:1296px;width:82px;height:32px;background:#696969;border-radius:8px;box-shadow:0 1px 1.500px rgba(0,0,0,.5),inset 0 1px 0 rgba(255,255,255,.09);"></div>
<div style="left:1184.5px;top:1296px;width:1.5px;height:32px;background:rgba(0,0,0,.28);"></div>
<div class="t" style="left:1154.42px;top:1301.03px;font-size:23px;color:#fff;-webkit-text-stroke:.3px;">M</div>
<div class="t" style="left:1197.83px;top:1301.03px;font-size:23px;color:#fff;-webkit-text-stroke:.3px;">S</div>
<div style="left:1237.5px;top:1296px;width:40.5px;height:32px;background:#696969;border-radius:8px;box-shadow:0 1px 1.500px rgba(0,0,0,.5),inset 0 1px 0 rgba(255,255,255,.09);"></div>
<div class="t" style="left:1249.69px;top:1301.03px;font-size:23px;color:#fff;-webkit-text-stroke:.3px;">R</div>
<div style="left:1618px;top:1294px;width:256px;height:36px;background:#383838;border-radius:18px;"></div>
<div style="left:1784px;top:1296px;width:32px;height:32px;background:#8c8c8c;border-radius:16px;box-shadow:0 1px 2px rgba(0,0,0,.45),inset 0 1px 0 rgba(255,255,255,.15);"></div>
<svg style="left:1888px;top:1286px;" width="50" height="50" viewBox="0 0 50 50"><defs><radialGradient id="kn20441" cx=".5" cy=".62" r=".62"><stop offset=".82" stop-color="rgba(0,0,0,.13)"/><stop offset="1" stop-color="rgba(0,0,0,0)"/></radialGradient></defs><path d="M15.06 42.93 A20.5 20.5 0 1 1 34.94 42.93" fill="none" stroke="#393939" stroke-width="9"/><circle cx="25" cy="26.8" r="19" fill="url(#kn20441)"/><circle cx="25" cy="25" r="17" fill="#8c8c8c"/><rect x="23.8" y="4" width="2.4" height="4" fill="#6fe06f"/><rect x="23.7" y="10" width="2.600" height="5.78" fill="#0c0c0c"/></svg>
<div style="left:1000px;top:1346px;width:960px;height:80px;background:#757575;"></div>
<div style="left:1000px;top:1425.5px;width:960px;height:2.5px;background:#434343;"></div>
<div class="t" style="left:1006.14px;top:1373.69px;font-size:26px;color:#fff;letter-spacing:-1.2px;">10</div>
<svg style="left:1067.5px;top:1355.5px;" width="53" height="59.8" viewBox="14 11 149 168"><defs><linearGradient id="wfT" x1="0" y1="0" x2="0" y2="1"><stop offset="0" stop-color="#a85c2a"/><stop offset="1" stop-color="#5f2b12"/></linearGradient><radialGradient id="shT" cx=".5" cy=".5" r=".5"><stop offset="0" stop-color="rgba(0,0,0,.28)"/><stop offset="1" stop-color="rgba(0,0,0,0)"/></radialGradient></defs><ellipse cx="84" cy="158" rx="62" ry="22" fill="url(#shT)"/><g stroke="#131313" stroke-width="2.900" stroke-linecap="round"><path d="M105.500 86.700L54 143.200M28.900 152.300L77.300 132.500"/><path d="M60.300 76.600L116.800 161.400M91 174.600L137.600 151.400"/></g><circle cx="81.700" cy="110.800" r="1.300" fill="#9a9a9a"/><path d="M16.300 52.800L41.500 43.300 161 54.600 116.200 74.700z" fill="#84431d"/><path d="M116.200 74.700L161 54.600V72.900L116.200 86z" fill="#6a3215"/><path d="M16.300 52.800L116.200 74.700V86L17.600 63.400z" fill="url(#wfT)"/><path d="M16.300 52.800L116.200 74.700" stroke="#c98045" stroke-width="1.200"/><path d="M34 48.800L126 62.800 116.500 73 27.500 55.300z" fill="#111"/><path d="M31 52.400L121.500 68 116.400 72.300 28.600 55.200z" fill="#f4f4f4"/><path d="M36 49.600L125 63.200 121.800 66.800 33 52.300z" fill="#1b1b1b"/><path d="M33.500 52.500L121.500 66.500" stroke="#e9e9e9" stroke-width="1.100" stroke-dasharray="1.300 1.900"/><path d="M149.200 23.900L152.600 33.900 147 56.500 140.700 59z" fill="#676767"/><path d="M51.500 17.600L148.500 29 140.700 59 44.600 43.300z" fill="#1a1a1c"/><path d="M52.100 12.600L149.200 23.900 148.500 29.300 51.500 17.900z" fill="#bf6f33"/><path d="M52.100 12.600L149.200 23.900" stroke="#e39a55" stroke-width="1"/><g stroke="#d8d8d8" stroke-width=".900" fill="none"><path d="M52.100 17.800L45.200 43.400M147 29.500L138.800 58.700M62.800 18.800L56.200 45.500M82.300 21.100L75.400 49M106.200 24.100L99.200 52.800M128.100 27L120.600 56.500M141.300 28.600L134.400 58.400M101.800 40.800L124.400 43.300"/></g><circle cx="54" cy="26.4" r="1.500" fill="#dcdcdc"/><circle cx="50.3" cy="32.9" r="1.500" fill="#dcdcdc"/><circle cx="54.9" cy="33.7" r="1.500" fill="#dcdcdc"/><circle cx="65.3" cy="24.7" r="1.500" fill="#dcdcdc"/><circle cx="77.3" cy="26" r="1.500" fill="#dcdcdc"/><circle cx="63.4" cy="31.4" r="1.500" fill="#dcdcdc"/><circle cx="68.8" cy="32.9" r="1.500" fill="#dcdcdc"/><circle cx="75" cy="33.3" r="1.500" fill="#dcdcdc"/><circle cx="61.3" cy="38.9" r="1.500" fill="#dcdcdc"/><circle cx="67" cy="39.9" r="1.500" fill="#dcdcdc"/><circle cx="72.9" cy="40.6" r="1.500" fill="#dcdcdc"/><circle cx="82.9" cy="27" r="1.500" fill="#dcdcdc"/><circle cx="80.4" cy="34.2" r="1.500" fill="#dcdcdc"/><circle cx="78.5" cy="41.5" r="1.500" fill="#dcdcdc"/><circle cx="95.1" cy="32.7" r="1.500" fill="#dcdcdc"/><circle cx="93.3" cy="40.2" r="1.500" fill="#dcdcdc"/><circle cx="109" cy="30.8" r="1.500" fill="#dcdcdc"/><circle cx="115.6" cy="31.4" r="1.500" fill="#dcdcdc"/><circle cx="122.1" cy="32.4" r="1.500" fill="#dcdcdc"/><circle cx="107" cy="37.7" r="1.500" fill="#dcdcdc"/><circle cx="113.7" cy="38.9" r="1.500" fill="#dcdcdc"/><circle cx="120.4" cy="39.9" r="1.500" fill="#dcdcdc"/><circle cx="104.9" cy="46.1" r="1.500" fill="#dcdcdc"/><circle cx="111.6" cy="47.1" r="1.500" fill="#dcdcdc"/><circle cx="118.1" cy="48" r="1.500" fill="#dcdcdc"/><circle cx="129" cy="33.7" r="1.500" fill="#dcdcdc"/><circle cx="128.1" cy="42.1" r="1.500" fill="#dcdcdc"/><circle cx="124.4" cy="49.2" r="1.500" fill="#dcdcdc"/><circle cx="131.9" cy="50.9" r="1.500" fill="#dcdcdc"/><rect x="88.1" y="28.05" width="2.600" height="1.700" fill="#4aa2ea"/><rect x="87.6" y="31.85" width="2.600" height="1.700" fill="#4aa2ea"/><rect x="86" y="35.55" width="2.600" height="1.700" fill="#4aa2ea"/><rect x="85.4" y="39.35" width="2.600" height="1.700" fill="#4aa2ea"/><rect x="84.7" y="42.85" width="2.600" height="1.700" fill="#4aa2ea"/><rect x="134.4" y="34.35" width="2.600" height="1.700" fill="#4aa2ea"/><rect x="97.9" y="39.35" width="2.600" height="1.700" fill="#4aa2ea"/><rect x="60.1" y="25.65" width="2.200" height="1.900" fill="#e8853f"/><rect x="104.2" y="28.15" width="2.200" height="1.900" fill="#e8853f"/><rect x="102.5" y="32.35" width="2.200" height="1.900" fill="#e8853f"/><rect x="102.2" y="36.15" width="2.200" height="1.900" fill="#e8853f"/><rect x="57.9" y="37.35" width="2.200" height="1.900" fill="#e8853f"/><circle cx="139.200" cy="45.500" r="1.400" fill="#e3342a"/></svg>
<div style="left:1144px;top:1370.7px;width:82px;height:32px;background:#868686;border-radius:8px;box-shadow:0 1px 1.500px rgba(0,0,0,.5),inset 0 1px 0 rgba(255,255,255,.09);"></div>
<div style="left:1184.5px;top:1370.7px;width:1.5px;height:32px;background:rgba(0,0,0,.28);"></div>
<div class="t" style="left:1154.42px;top:1375.73px;font-size:23px;color:#fff;-webkit-text-stroke:.3px;">M</div>
<div class="t" style="left:1197.83px;top:1375.73px;font-size:23px;color:#fff;-webkit-text-stroke:.3px;">S</div>
<div style="left:1237.5px;top:1370.7px;width:40.5px;height:32px;background:#c34f48;border-radius:8px;box-shadow:0 1px 1.500px rgba(0,0,0,.5),inset 0 1px 0 rgba(255,255,255,.09);"></div>
<div class="t" style="left:1249.69px;top:1375.73px;font-size:23px;color:#fff;-webkit-text-stroke:.3px;">R</div>
<div class="t" style="left:1297px;top:1373.69px;font-size:26px;color:#fff;letter-spacing:0.1px;">Full Range Synth</div>
<div style="left:1682px;top:1368px;width:256px;height:36px;background:#3e3e3e;border-radius:18px;"></div>
<div style="left:1848px;top:1370px;width:32px;height:32px;background:#a9a9a9;border-radius:16px;box-shadow:0 1px 2px rgba(0,0,0,.45),inset 0 1px 0 rgba(255,255,255,.15);"></div>
<div style="left:1000px;top:1507.4px;width:960px;height:2.5px;background:#434343;"></div>
<div class="t" style="left:1007.11px;top:1455.59px;font-size:26px;color:#fff;letter-spacing:-1.2px;">11</div>
<svg style="left:1067px;top:1437.9px;" width="54" height="61" viewBox="0 0 56 62"><defs><radialGradient id="shk" cx=".5" cy=".5" r=".5"><stop offset="0" stop-color="rgba(0,0,0,.3)"/><stop offset="1" stop-color="rgba(0,0,0,0)"/></radialGradient></defs><ellipse cx="26" cy="50" rx="24" ry="8" fill="url(#shk)"/><g stroke="#141414" stroke-width="1.500" stroke-linecap="round"><path d="M34.500 20.500L18.200 39.500M6 46.200L23.700 39.500M16.900 16.400L35.800 54.400M29 55.700L45.900 47.100"/></g><path d="M0.600 10.200L12.800 6.400 54 14.500 41.300 20z" fill="#262626"/><path d="M0.600 10.200L41.300 20v2.600L0.600 12.600z" fill="#3a1c10"/><path d="M41.300 20L54 14.500v2.600L41.300 22.600z" fill="#2a140b"/><path d="M3 10.700L40.300 19.700" stroke="#f0f0f0" stroke-width="1.700"/><path d="M22 10.300L40 14" stroke="#4aa0d8" stroke-width="1.500"/><path d="M9 8.600L17 10.200" stroke="#6a6a6a" stroke-width="1.200"/></svg>
<div style="left:1144px;top:1452.6px;width:82px;height:32px;background:#696969;border-radius:8px;box-shadow:0 1px 1.500px rgba(0,0,0,.5),inset 0 1px 0 rgba(255,255,255,.09);"></div>
<div style="left:1184.5px;top:1452.6px;width:1.5px;height:32px;background:rgba(0,0,0,.28);"></div>
<div class="t" style="left:1154.42px;top:1457.63px;font-size:23px;color:#fff;-webkit-text-stroke:.3px;">M</div>
<div class="t" style="left:1197.83px;top:1457.63px;font-size:23px;color:#fff;-webkit-text-stroke:.3px;">S</div>
<div style="left:1237.5px;top:1452.6px;width:40.5px;height:32px;background:#696969;border-radius:8px;box-shadow:0 1px 1.500px rgba(0,0,0,.5),inset 0 1px 0 rgba(255,255,255,.09);"></div>
<div class="t" style="left:1249.69px;top:1457.63px;font-size:23px;color:#fff;-webkit-text-stroke:.3px;">R</div>
<div class="t" style="left:1297px;top:1455.59px;font-size:26px;color:#fff;letter-spacing:0.36px;">Inst 2</div>
<div style="left:1682px;top:1449.9px;width:256px;height:36px;background:#383838;border-radius:18px;"></div>
<div style="left:1788px;top:1451.9px;width:32px;height:32px;background:#8c8c8c;border-radius:16px;box-shadow:0 1px 2px rgba(0,0,0,.45),inset 0 1px 0 rgba(255,255,255,.15);"></div>
<div style="left:1000px;top:1589.3px;width:960px;height:2.5px;background:#434343;"></div>
<div class="t" style="left:1006.14px;top:1537.49px;font-size:26px;color:#fff;letter-spacing:-1.2px;">12</div>
<svg style="left:1069.5px;top:1524.3px;" width="50" height="52" viewBox="0 0 50 52"><circle cx="23.900" cy="23.500" r="19.700" fill="none" stroke="#5fd353" stroke-width="2.600"/><g stroke="#5fd353" stroke-width="2.600" stroke-linecap="round"><path d="M23.500 27v9M10 38L5.900 48M37.800 38L41.700 48"/></g><circle cx="23.500" cy="26.400" r="2.900" fill="#5fd353"/><circle cx="5.700" cy="48.300" r="2.300" fill="#5fd353"/><circle cx="41.900" cy="48.300" r="2.300" fill="#5fd353"/><path d="M20.500 35.500h6l3 13.800h-12z" fill="#5fd353"/></svg>
<div style="left:1144px;top:1534.5px;width:82px;height:32px;background:#696969;border-radius:8px;box-shadow:0 1px 1.500px rgba(0,0,0,.5),inset 0 1px 0 rgba(255,255,255,.09);"></div>
<div style="left:1184.5px;top:1534.5px;width:1.5px;height:32px;background:rgba(0,0,0,.28);"></div>
<div class="t" style="left:1154.42px;top:1539.53px;font-size:23px;color:#fff;-webkit-text-stroke:.3px;">M</div>
<div class="t" style="left:1197.83px;top:1539.53px;font-size:23px;color:#fff;-webkit-text-stroke:.3px;">S</div>
<div style="left:1237.5px;top:1534.5px;width:40.5px;height:32px;background:#696969;border-radius:8px;box-shadow:0 1px 1.500px rgba(0,0,0,.5),inset 0 1px 0 rgba(255,255,255,.09);"></div>
<div class="t" style="left:1249.69px;top:1539.53px;font-size:23px;color:#fff;-webkit-text-stroke:.3px;">R</div>
<div class="t" style="left:1297px;top:1537.49px;font-size:26px;color:#fff;letter-spacing:0.22px;">Heavy Kick</div>
<div style="left:1682px;top:1531.8px;width:256px;height:36px;background:#383838;border-radius:18px;"></div>
<div style="left:1848px;top:1533.8px;width:32px;height:32px;background:#8c8c8c;border-radius:16px;box-shadow:0 1px 2px rgba(0,0,0,.45),inset 0 1px 0 rgba(255,255,255,.15);"></div>
<div style="left:1000px;top:1671.2px;width:960px;height:2.5px;background:#434343;"></div>
<div class="t" style="left:1006.14px;top:1619.39px;font-size:26px;color:#fff;letter-spacing:-1.2px;">13</div>
<div style="left:1064px;top:1610.7px;width:59px;height:43px;background:radial-gradient(#34445c,#2b3648);border-radius:4px;border:1px solid rgba(0,0,0,.4);box-shadow:inset 0 1px 0 rgba(255,255,255,.08),0 1px 1px rgba(0,0,0,.25);"></div>
<svg style="left:1064px;top:1610.7px;" width="60" height="44" viewBox="0 0 60 44"><rect x="6.1" y="19.5" width="2.200" height="4" rx="1.100" fill="#6db6f7"/><rect x="10.13" y="16.5" width="2.200" height="10" rx="1.100" fill="#6db6f7"/><rect x="14.16" y="17.75" width="2.200" height="7.5" rx="1.100" fill="#6db6f7"/><rect x="18.19" y="12.5" width="2.200" height="18" rx="1.100" fill="#6db6f7"/><rect x="22.22" y="16.5" width="2.200" height="10" rx="1.100" fill="#6db6f7"/><rect x="26.25" y="12.5" width="2.200" height="18" rx="1.100" fill="#6db6f7"/><rect x="30.28" y="6.5" width="2.200" height="30" rx="1.100" fill="#6db6f7"/><rect x="34.31" y="12.5" width="2.200" height="18" rx="1.100" fill="#6db6f7"/><rect x="38.34" y="16.5" width="2.200" height="10" rx="1.100" fill="#6db6f7"/><rect x="42.37" y="13" width="2.200" height="17" rx="1.100" fill="#6db6f7"/><rect x="46.4" y="16.5" width="2.200" height="10" rx="1.100" fill="#6db6f7"/><rect x="50.43" y="19.5" width="2.200" height="4" rx="1.100" fill="#6db6f7"/></svg>
<div style="left:1144px;top:1616.4px;width:82px;height:32px;background:#696969;border-radius:8px;box-shadow:0 1px 1.500px rgba(0,0,0,.5),inset 0 1px 0 rgba(255,255,255,.09);"></div>
<div style="left:1184.5px;top:1616.4px;width:1.5px;height:32px;background:rgba(0,0,0,.28);"></div>
<div class="t" style="left:1154.42px;top:1621.43px;font-size:23px;color:#fff;-webkit-text-stroke:.3px;">M</div>
<div class="t" style="left:1197.83px;top:1621.43px;font-size:23px;color:#fff;-webkit-text-stroke:.3px;">S</div>
<div style="left:1237.5px;top:1616.4px;width:40.5px;height:32px;background:#696969;border-radius:8px;box-shadow:0 1px 1.500px rgba(0,0,0,.5),inset 0 1px 0 rgba(255,255,255,.09);"></div>
<div class="t" style="left:1249.69px;top:1621.43px;font-size:23px;color:#fff;-webkit-text-stroke:.3px;">R</div>
<div class="t" style="left:1297px;top:1619.39px;font-size:26px;color:#fff;letter-spacing:0.02px;">Conga Groove 01</div>
<div style="left:1682px;top:1613.7px;width:256px;height:36px;background:#383838;border-radius:18px;"></div>
<div style="left:1818px;top:1615.7px;width:32px;height:32px;background:#8c8c8c;border-radius:16px;box-shadow:0 1px 2px rgba(0,0,0,.45),inset 0 1px 0 rgba(255,255,255,.15);"></div>
<div style="left:1000px;top:1753.1px;width:960px;height:2.5px;background:#434343;"></div>
<div class="t" style="left:1006.14px;top:1701.29px;font-size:26px;color:#fff;letter-spacing:-1.2px;">14</div>
<svg style="left:1067px;top:1683.6px;" width="56" height="62" viewBox="0 0 56 62"><defs><linearGradient id="cb" x1="0" y1="0" x2="1" y2="1"><stop offset="0" stop-color="#7d7d7d"/><stop offset=".3" stop-color="#f6f6f6"/><stop offset=".55" stop-color="#b5b5b5"/><stop offset=".8" stop-color="#e6e6e6"/><stop offset="1" stop-color="#4a4a4a"/></linearGradient><radialGradient id="mr" cx=".4" cy=".35" r=".7"><stop offset="0" stop-color="#e9c76d"/><stop offset=".5" stop-color="#b98a2c"/><stop offset="1" stop-color="#93381a"/></radialGradient></defs><ellipse cx="28" cy="59.500" rx="10" ry="2.200" fill="rgba(0,0,0,.55)"/><g stroke="#d38a2a" stroke-width="2.200" stroke-linecap="round"><path d="M15 15L8.700 35.500M27 21L2 32.300"/></g><ellipse cx="17.700" cy="8.400" rx="5.600" ry="7.800" fill="url(#mr)" transform="rotate(18 17.700 8.400)"/><ellipse cx="28.500" cy="14.800" rx="5.600" ry="7.800" fill="url(#mr)" transform="rotate(52 28.500 14.800)"/><path d="M37.200 21.400L46.700 32.300 27.700 57.200 12.800 41.700z" fill="url(#cb)"/><path d="M12.800 41.700L27.700 57.200" stroke="#3c3c3c" stroke-width="1.600"/><path d="M38.500 19.500l6-5 5.500 1.500-1 4-4.500 1.500 1.500 5-3.500-3z" fill="#1c1c1c"/></svg>
<div style="left:1144px;top:1698.3px;width:82px;height:32px;background:#696969;border-radius:8px;box-shadow:0 1px 1.500px rgba(0,0,0,.5),inset 0 1px 0 rgba(255,255,255,.09);"></div>
<div style="left:1184.5px;top:1698.3px;width:1.5px;height:32px;background:rgba(0,0,0,.28);"></div>
<div class="t" style="left:1154.42px;top:1703.33px;font-size:23px;color:#fff;-webkit-text-stroke:.3px;">M</div>
<div class="t" style="left:1197.83px;top:1703.33px;font-size:23px;color:#fff;-webkit-text-stroke:.3px;">S</div>
<div class="t" style="left:1297px;top:1701.29px;font-size:26px;color:#fff;letter-spacing:0.44px;">Coffee Shop</div>
<div style="left:1682px;top:1695.6px;width:256px;height:36px;background:#383838;border-radius:18px;"></div>
<div style="left:1835.6px;top:1697.6px;width:32px;height:32px;background:#8c8c8c;border-radius:16px;box-shadow:0 1px 2px rgba(0,0,0,.45),inset 0 1px 0 rgba(255,255,255,.15);"></div>
<div style="left:1040px;top:374px;width:2px;height:1382px;background:#434343;"></div>
<div style="left:1960px;top:374px;width:1880px;height:2026px;background:#b4b4b4;border-radius:0 0 22px 0;"></div>
<div style="left:1960px;top:1346px;width:1880px;height:80px;background:#c0c0c0;"></div>
<div style="left:1960px;top:480px;width:1880px;height:2px;background:#a9a9a9;"></div>
<div style="left:1960px;top:588px;width:1880px;height:2px;background:#a9a9a9;"></div>
<div style="left:1960px;top:696px;width:1880px;height:2px;background:#a9a9a9;"></div>
<div style="left:1960px;top:804px;width:1880px;height:2px;background:#a9a9a9;"></div>
<div style="left:1960px;top:912px;width:1880px;height:2px;background:#a9a9a9;"></div>
<div style="left:1960px;top:1020px;width:1880px;height:2px;background:#a9a9a9;"></div>
<div style="left:1960px;top:1128px;width:1880px;height:2px;background:#a9a9a9;"></div>
<div style="left:1960px;top:1236px;width:1880px;height:2px;background:#a9a9a9;"></div>
<div style="left:1960px;top:1344px;width:1880px;height:2px;background:#a9a9a9;"></div>
<div style="left:1960px;top:1425.9px;width:1880px;height:2px;background:#a9a9a9;"></div>
<div style="left:1960px;top:1507.8px;width:1880px;height:2px;background:#a9a9a9;"></div>
<div style="left:1960px;top:1589.7px;width:1880px;height:2px;background:#a9a9a9;"></div>
<div style="left:1960px;top:1671.6px;width:1880px;height:2px;background:#a9a9a9;"></div>
<div style="left:1960px;top:1753.5px;width:1880px;height:2px;background:#a9a9a9;"></div>
<div style="left:1978.6px;top:374px;width:2px;height:1382px;background:#cdcdcd;"></div>
<div style="left:2112.25px;top:374px;width:2px;height:1382px;background:#c9c9c9;"></div>
<div style="left:2245.9px;top:374px;width:2px;height:1382px;background:#c9c9c9;"></div>
<div style="left:2379.55px;top:374px;width:2px;height:1382px;background:#c9c9c9;"></div>
<div style="left:2513.2px;top:374px;width:2px;height:1382px;background:#c9c9c9;"></div>
<div style="left:2646.85px;top:374px;width:2px;height:1382px;background:#c9c9c9;"></div>
<div style="left:2780.5px;top:374px;width:2px;height:1382px;background:#c9c9c9;"></div>
<div style="left:2914.15px;top:374px;width:2px;height:1382px;background:#c9c9c9;"></div>
<div style="left:3047.8px;top:374px;width:2px;height:1382px;background:#c9c9c9;"></div>
<div style="left:3181.45px;top:374px;width:2px;height:1382px;background:#c9c9c9;"></div>
<div style="left:3315.1px;top:374px;width:2px;height:1382px;background:#c9c9c9;"></div>
<div style="left:3448.75px;top:374px;width:2px;height:1382px;background:#c9c9c9;"></div>
<div style="left:3582.4px;top:374px;width:2px;height:1382px;background:#c9c9c9;"></div>
<div style="left:3716.05px;top:374px;width:2px;height:1382px;background:#c9c9c9;"></div>
<div style="left:1960px;top:374px;width:11px;height:2026px;background:linear-gradient(90deg,rgba(0,0,0,.34),rgba(0,0,0,.10) 45%,rgba(0,0,0,0));"></div>
<div style="left:1960px;top:374px;width:1880px;height:7px;background:linear-gradient(rgba(0,0,0,.22),rgba(0,0,0,0));"></div>
<div style="left:1960px;top:298px;width:1880px;height:76px;background:#323232;"></div>
<div style="left:3048.8px;top:298px;width:791.2px;height:38px;background:repeating-linear-gradient(135deg,#3c3c3c 0,#3c3c3c 6px,#343434 6px,#343434 12px);"></div>
<div style="left:1979.6px;top:335.5px;width:1860.4px;height:2px;background:#1f1f1f;"></div>
<div style="left:1979.6px;top:300.3px;width:1069.2px;height:35.3px;background:#c0a046;"></div>
<svg style="left:1960px;top:301.5px;" width="17" height="27.5" viewBox="0 0 17 27.5"><defs><linearGradient id="cyt" x1="0" y1="0" x2="1" y2="0"><stop offset="0" stop-color="#474747"/><stop offset="1" stop-color="#5e5e5e"/></linearGradient></defs><path d="M0.500 0.500h1.500l13.500 12a1.600 1.600 0 0 1 0 2.400l-13.500 12h-1.500z" fill="url(#cyt)"/></svg>
<div style="left:1977.6px;top:298px;width:2px;height:76px;background:repeating-linear-gradient(#c9c9c9 0,#c9c9c9 1.500px,#1a1a1a 1.500px,#1a1a1a 3px);"></div>
<div class="t" style="left:1986.1px;top:302.34px;font-size:25px;color:#0b0b0b;letter-spacing:0.2px;">1</div>
<div style="left:2012.21px;top:358.5px;width:1.6px;height:15.5px;background:#7a7a7a;"></div>
<div style="left:2045.62px;top:358.5px;width:1.6px;height:15.5px;background:#7a7a7a;"></div>
<div style="left:2079.04px;top:358.5px;width:1.6px;height:15.5px;background:#7a7a7a;"></div>
<div style="left:2112.05px;top:304px;width:2.4px;height:31.5px;background:#111;"></div>
<div style="left:2112.25px;top:337.5px;width:2px;height:36.5px;background:#8a8a8a;"></div>
<div class="t" style="left:2121.55px;top:302.34px;font-size:25px;color:#0b0b0b;letter-spacing:0.2px;">2</div>
<div style="left:2145.86px;top:358.5px;width:1.6px;height:15.5px;background:#7a7a7a;"></div>
<div style="left:2179.27px;top:358.5px;width:1.6px;height:15.5px;background:#7a7a7a;"></div>
<div style="left:2212.69px;top:358.5px;width:1.6px;height:15.5px;background:#7a7a7a;"></div>
<div style="left:2245.7px;top:304px;width:2.4px;height:31.5px;background:#111;"></div>
<div style="left:2245.9px;top:337.5px;width:2px;height:36.5px;background:#8a8a8a;"></div>
<div class="t" style="left:2255.2px;top:302.34px;font-size:25px;color:#0b0b0b;letter-spacing:0.2px;">3</div>
<div style="left:2279.51px;top:358.5px;width:1.6px;height:15.5px;background:#7a7a7a;"></div>
<div style="left:2312.92px;top:358.5px;width:1.6px;height:15.5px;background:#7a7a7a;"></div>
<div style="left:2346.34px;top:358.5px;width:1.6px;height:15.5px;background:#7a7a7a;"></div>
<div style="left:2379.35px;top:304px;width:2.4px;height:31.5px;background:#111;"></div>
<div style="left:2379.55px;top:337.5px;width:2px;height:36.5px;background:#8a8a8a;"></div>
<div class="t" style="left:2388.85px;top:302.34px;font-size:25px;color:#0b0b0b;letter-spacing:0.2px;">4</div>
<div style="left:2413.16px;top:358.5px;width:1.6px;height:15.5px;background:#7a7a7a;"></div>
<div style="left:2446.57px;top:358.5px;width:1.6px;height:15.5px;background:#7a7a7a;"></div>
<div style="left:2479.99px;top:358.5px;width:1.6px;height:15.5px;background:#7a7a7a;"></div>
<div style="left:2513px;top:304px;width:2.4px;height:31.5px;background:#111;"></div>
<div style="left:2513.2px;top:337.5px;width:2px;height:36.5px;background:#8a8a8a;"></div>
<div class="t" style="left:2522.5px;top:302.34px;font-size:25px;color:#0b0b0b;letter-spacing:0.2px;">5</div>
<div style="left:2546.81px;top:358.5px;width:1.6px;height:15.5px;background:#7a7a7a;"></div>
<div style="left:2580.22px;top:358.5px;width:1.6px;height:15.5px;background:#7a7a7a;"></div>
<div style="left:2613.64px;top:358.5px;width:1.6px;height:15.5px;background:#7a7a7a;"></div>
<div style="left:2646.65px;top:304px;width:2.4px;height:31.5px;background:#111;"></div>
<div style="left:2646.85px;top:337.5px;width:2px;height:36.5px;background:#8a8a8a;"></div>
<div class="t" style="left:2656.15px;top:302.34px;font-size:25px;color:#0b0b0b;letter-spacing:0.2px;">6</div>
<div style="left:2680.46px;top:358.5px;width:1.6px;height:15.5px;background:#7a7a7a;"></div>
<div style="left:2713.87px;top:358.5px;width:1.6px;height:15.5px;background:#7a7a7a;"></div>
<div style="left:2747.29px;top:358.5px;width:1.6px;height:15.5px;background:#7a7a7a;"></div>
<div style="left:2780.3px;top:304px;width:2.4px;height:31.5px;background:#111;"></div>
<div style="left:2780.5px;top:337.5px;width:2px;height:36.5px;background:#8a8a8a;"></div>
<div class="t" style="left:2789.8px;top:302.34px;font-size:25px;color:#0b0b0b;letter-spacing:0.2px;">7</div>
<div style="left:2814.11px;top:358.5px;width:1.6px;height:15.5px;background:#7a7a7a;"></div>
<div style="left:2847.52px;top:358.5px;width:1.6px;height:15.5px;background:#7a7a7a;"></div>
<div style="left:2880.94px;top:358.5px;width:1.6px;height:15.5px;background:#7a7a7a;"></div>
<div style="left:2913.95px;top:304px;width:2.4px;height:31.5px;background:#111;"></div>
<div style="left:2914.15px;top:337.5px;width:2px;height:36.5px;background:#8a8a8a;"></div>
<div class="t" style="left:2923.45px;top:302.34px;font-size:25px;color:#0b0b0b;letter-spacing:0.2px;">8</div>
<div style="left:2947.76px;top:358.5px;width:1.6px;height:15.5px;background:#7a7a7a;"></div>
<div style="left:2981.17px;top:358.5px;width:1.6px;height:15.5px;background:#7a7a7a;"></div>
<div style="left:3014.59px;top:358.5px;width:1.6px;height:15.5px;background:#7a7a7a;"></div>
<div style="left:3047.6px;top:304px;width:2.4px;height:31.5px;background:#c9c9c9;"></div>
<div style="left:3047.8px;top:337.5px;width:2px;height:36.5px;background:#8a8a8a;"></div>
<div class="t" style="left:3057.1px;top:302.34px;font-size:25px;color:#d2d2d2;letter-spacing:0.2px;">9</div>
<div style="left:3081.41px;top:358.5px;width:1.6px;height:15.5px;background:#7a7a7a;"></div>
<div style="left:3114.82px;top:358.5px;width:1.6px;height:15.5px;background:#7a7a7a;"></div>
<div style="left:3148.24px;top:358.5px;width:1.6px;height:15.5px;background:#7a7a7a;"></div>
<div style="left:3181.45px;top:304px;width:2px;height:31.5px;background:#8d8d8d;"></div>
<div style="left:3181.45px;top:337.5px;width:2px;height:36.5px;background:#8a8a8a;"></div>
<div class="t" style="left:3188.95px;top:302.34px;font-size:25px;color:#d2d2d2;letter-spacing:0.2px;">10</div>
<div style="left:3215.06px;top:358.5px;width:1.6px;height:15.5px;background:#7a7a7a;"></div>
<div style="left:3248.47px;top:358.5px;width:1.6px;height:15.5px;background:#7a7a7a;"></div>
<div style="left:3281.89px;top:358.5px;width:1.6px;height:15.5px;background:#7a7a7a;"></div>
<div style="left:3315.1px;top:304px;width:2px;height:31.5px;background:#8d8d8d;"></div>
<div style="left:3315.1px;top:337.5px;width:2px;height:36.5px;background:#8a8a8a;"></div>
<div class="t" style="left:3322.6px;top:302.34px;font-size:25px;color:#d2d2d2;letter-spacing:0.2px;">11</div>
<div style="left:3348.71px;top:358.5px;width:1.6px;height:15.5px;background:#7a7a7a;"></div>
<div style="left:3382.12px;top:358.5px;width:1.6px;height:15.5px;background:#7a7a7a;"></div>
<div style="left:3415.54px;top:358.5px;width:1.6px;height:15.5px;background:#7a7a7a;"></div>
<div style="left:3448.75px;top:304px;width:2px;height:31.5px;background:#8d8d8d;"></div>
<div style="left:3448.75px;top:337.5px;width:2px;height:36.5px;background:#8a8a8a;"></div>
<div class="t" style="left:3456.25px;top:302.34px;font-size:25px;color:#d2d2d2;letter-spacing:0.2px;">12</div>
<div style="left:3482.36px;top:358.5px;width:1.6px;height:15.5px;background:#7a7a7a;"></div>
<div style="left:3515.77px;top:358.5px;width:1.6px;height:15.5px;background:#7a7a7a;"></div>
<div style="left:3549.19px;top:358.5px;width:1.6px;height:15.5px;background:#7a7a7a;"></div>
<div style="left:3582.4px;top:304px;width:2px;height:31.5px;background:#8d8d8d;"></div>
<div style="left:3582.4px;top:337.5px;width:2px;height:36.5px;background:#8a8a8a;"></div>
<div class="t" style="left:3589.9px;top:302.34px;font-size:25px;color:#d2d2d2;letter-spacing:0.2px;">13</div>
<div style="left:3616.01px;top:358.5px;width:1.6px;height:15.5px;background:#7a7a7a;"></div>
<div style="left:3649.42px;top:358.5px;width:1.6px;height:15.5px;background:#7a7a7a;"></div>
<div style="left:3682.84px;top:358.5px;width:1.6px;height:15.5px;background:#7a7a7a;"></div>
<div style="left:3716.05px;top:304px;width:2px;height:31.5px;background:#8d8d8d;"></div>
<div style="left:3716.05px;top:337.5px;width:2px;height:36.5px;background:#8a8a8a;"></div>
<div class="t" style="left:3723.55px;top:302.34px;font-size:25px;color:#d2d2d2;letter-spacing:0.2px;">14</div>
<div style="left:3749.66px;top:358.5px;width:1.6px;height:15.5px;background:#7a7a7a;"></div>
<div style="left:3783.07px;top:358.5px;width:1.6px;height:15.5px;background:#7a7a7a;"></div>
<div style="left:3816.49px;top:358.5px;width:1.6px;height:15.5px;background:#7a7a7a;"></div>
<div style="left:1978.1px;top:1427.8px;width:1072.2px;height:79.7px;background:#4d9f42;border-radius:9px;border:2px solid #0a0a0a;"></div>
<div class="t" style="left:1990px;top:1437.38px;font-size:22px;color:#f3f7f0;letter-spacing:0.45px;">Inst 2</div>
<svg style="left:1980.4px;top:1473.7px;" width="1068" height="16" viewBox="0 0 1068 16"><rect x="0" y="0" width="19.5" height="3.700" fill="#c4edc2"/><rect x="24" y="0" width="9" height="3.700" fill="#c4edc2"/><rect x="48" y="0" width="6" height="3.700" fill="#c4edc2"/><rect x="64" y="10.5" width="22" height="3.700" fill="#c4edc2"/><rect x="90" y="4.2" width="24.5" height="3.700" fill="#c4edc2"/><rect x="114" y="10.5" width="9" height="3.700" fill="#c4edc2"/><rect x="131.65" y="0" width="17.5" height="3.700" fill="#c4edc2"/><rect x="155.65" y="0" width="19" height="3.700" fill="#c4edc2"/><rect x="181.65" y="0" width="6" height="3.700" fill="#c4edc2"/><rect x="199.65" y="10.5" width="18" height="3.700" fill="#c4edc2"/><rect x="223.65" y="4.2" width="14" height="3.700" fill="#c4edc2"/><rect x="241.65" y="4.2" width="10" height="3.700" fill="#c4edc2"/><rect x="250.15" y="10.5" width="10" height="3.700" fill="#c4edc2"/><rect x="267.3" y="0" width="19.5" height="3.700" fill="#c4edc2"/><rect x="291.3" y="0" width="9" height="3.700" fill="#c4edc2"/><rect x="315.3" y="0" width="6" height="3.700" fill="#c4edc2"/><rect x="331.3" y="10.5" width="22" height="3.700" fill="#c4edc2"/><rect x="357.3" y="4.2" width="24.5" height="3.700" fill="#c4edc2"/><rect x="381.3" y="10.5" width="9" height="3.700" fill="#c4edc2"/><rect x="398.95" y="0" width="17.5" height="3.700" fill="#c4edc2"/><rect x="422.95" y="0" width="19" height="3.700" fill="#c4edc2"/><rect x="448.95" y="0" width="6" height="3.700" fill="#c4edc2"/><rect x="466.95" y="10.5" width="18" height="3.700" fill="#c4edc2"/><rect x="490.95" y="4.2" width="14" height="3.700" fill="#c4edc2"/><rect x="508.95" y="4.2" width="10" height="3.700" fill="#c4edc2"/><rect x="517.45" y="10.5" width="10" height="3.700" fill="#c4edc2"/><rect x="534.6" y="0" width="19.5" height="3.700" fill="#c4edc2"/><rect x="558.6" y="0" width="9" height="3.700" fill="#c4edc2"/><rect x="582.6" y="0" width="6" height="3.700" fill="#c4edc2"/><rect x="598.6" y="10.5" width="22" height="3.700" fill="#c4edc2"/><rect x="624.6" y="4.2" width="24.5" height="3.700" fill="#c4edc2"/><rect x="648.6" y="10.5" width="9" height="3.700" fill="#c4edc2"/><rect x="666.25" y="0" width="17.5" height="3.700" fill="#c4edc2"/><rect x="690.25" y="0" width="19" height="3.700" fill="#c4edc2"/><rect x="716.25" y="0" width="6" height="3.700" fill="#c4edc2"/><rect x="734.25" y="10.5" width="18" height="3.700" fill="#c4edc2"/><rect x="758.25" y="4.2" width="14" height="3.700" fill="#c4edc2"/><rect x="776.25" y="4.2" width="10" height="3.700" fill="#c4edc2"/><rect x="784.75" y="10.5" width="10" height="3.700" fill="#c4edc2"/><rect x="801.9" y="0" width="19.5" height="3.700" fill="#c4edc2"/><rect x="825.9" y="0" width="9" height="3.700" fill="#c4edc2"/><rect x="849.9" y="0" width="6" height="3.700" fill="#c4edc2"/><rect x="865.9" y="10.5" width="22" height="3.700" fill="#c4edc2"/><rect x="891.9" y="4.2" width="24.5" height="3.700" fill="#c4edc2"/><rect x="915.9" y="10.5" width="9" height="3.700" fill="#c4edc2"/><rect x="933.55" y="0" width="17.5" height="3.700" fill="#c4edc2"/><rect x="957.55" y="0" width="19" height="3.700" fill="#c4edc2"/><rect x="983.55" y="0" width="6" height="3.700" fill="#c4edc2"/><rect x="1001.55" y="10.5" width="18" height="3.700" fill="#c4edc2"/><rect x="1025.55" y="4.2" width="14" height="3.700" fill="#c4edc2"/><rect x="1043.55" y="4.2" width="10" height="3.700" fill="#c4edc2"/><rect x="1052.05" y="10.5" width="10" height="3.700" fill="#c4edc2"/></svg>
<div style="left:1978.1px;top:1510.2px;width:1072.2px;height:79.3px;background:#4d9f42;border-radius:9px;border:2px solid #0a0a0a;"></div>
<div class="t" style="left:1990px;top:1519.38px;font-size:22px;color:#f3f7f0;letter-spacing:0.45px;">Heavy Kick</div>
<svg style="left:1980.4px;top:1558.2px;" width="1068" height="18" viewBox="0 0 1068 18"><rect x="0" y="12" width="3.5" height="3.700" fill="#c4edc2"/><rect x="21.5" y="12" width="6.2" height="3.700" fill="#c4edc2"/><rect x="47.5" y="12" width="6.2" height="3.700" fill="#c4edc2"/><rect x="63.5" y="4" width="6" height="3.700" fill="#c4edc2"/><rect x="88" y="0" width="6.2" height="3.700" fill="#c4edc2"/><rect x="114" y="4" width="6.2" height="3.700" fill="#c4edc2"/><rect x="132.65" y="12" width="6.5" height="3.700" fill="#c4edc2"/><rect x="155.15" y="12" width="6.2" height="3.700" fill="#c4edc2"/><rect x="180.15" y="12" width="6.2" height="3.700" fill="#c4edc2"/><rect x="199.15" y="4" width="6.2" height="3.700" fill="#c4edc2"/><rect x="223.65" y="0" width="6.2" height="3.700" fill="#c4edc2"/><rect x="240.15" y="0" width="7.5" height="3.700" fill="#c4edc2"/><rect x="247.65" y="4" width="6.2" height="3.700" fill="#c4edc2"/><rect x="264.3" y="12" width="6.5" height="3.700" fill="#c4edc2"/><rect x="288.8" y="12" width="6.2" height="3.700" fill="#c4edc2"/><rect x="314.8" y="12" width="6.2" height="3.700" fill="#c4edc2"/><rect x="330.8" y="4" width="6" height="3.700" fill="#c4edc2"/><rect x="355.3" y="0" width="6.2" height="3.700" fill="#c4edc2"/><rect x="381.3" y="4" width="6.2" height="3.700" fill="#c4edc2"/><rect x="399.95" y="12" width="6.5" height="3.700" fill="#c4edc2"/><rect x="422.45" y="12" width="6.2" height="3.700" fill="#c4edc2"/><rect x="447.45" y="12" width="6.2" height="3.700" fill="#c4edc2"/><rect x="466.45" y="4" width="6.2" height="3.700" fill="#c4edc2"/><rect x="490.95" y="0" width="6.2" height="3.700" fill="#c4edc2"/><rect x="507.45" y="0" width="7.5" height="3.700" fill="#c4edc2"/><rect x="514.95" y="4" width="6.2" height="3.700" fill="#c4edc2"/><rect x="531.6" y="12" width="6.5" height="3.700" fill="#c4edc2"/><rect x="556.1" y="12" width="6.2" height="3.700" fill="#c4edc2"/><rect x="582.1" y="12" width="6.2" height="3.700" fill="#c4edc2"/><rect x="598.1" y="4" width="6" height="3.700" fill="#c4edc2"/><rect x="622.6" y="0" width="6.2" height="3.700" fill="#c4edc2"/><rect x="648.6" y="4" width="6.2" height="3.700" fill="#c4edc2"/><rect x="667.25" y="12" width="6.5" height="3.700" fill="#c4edc2"/><rect x="689.75" y="12" width="6.2" height="3.700" fill="#c4edc2"/><rect x="714.75" y="12" width="6.2" height="3.700" fill="#c4edc2"/><rect x="733.75" y="4" width="6.2" height="3.700" fill="#c4edc2"/><rect x="758.25" y="0" width="6.2" height="3.700" fill="#c4edc2"/><rect x="774.75" y="0" width="7.5" height="3.700" fill="#c4edc2"/><rect x="782.25" y="4" width="6.2" height="3.700" fill="#c4edc2"/><rect x="798.9" y="12" width="6.5" height="3.700" fill="#c4edc2"/><rect x="823.4" y="12" width="6.2" height="3.700" fill="#c4edc2"/><rect x="849.4" y="12" width="6.2" height="3.700" fill="#c4edc2"/><rect x="865.4" y="4" width="6" height="3.700" fill="#c4edc2"/><rect x="889.9" y="0" width="6.2" height="3.700" fill="#c4edc2"/><rect x="915.9" y="4" width="6.2" height="3.700" fill="#c4edc2"/><rect x="934.55" y="12" width="6.5" height="3.700" fill="#c4edc2"/><rect x="957.05" y="12" width="6.2" height="3.700" fill="#c4edc2"/><rect x="982.05" y="12" width="6.2" height="3.700" fill="#c4edc2"/><rect x="1001.05" y="4" width="6.2" height="3.700" fill="#c4edc2"/><rect x="1025.55" y="0" width="6.2" height="3.700" fill="#c4edc2"/><rect x="1042.05" y="0" width="7.5" height="3.700" fill="#c4edc2"/><rect x="1049.55" y="4" width="6.2" height="3.700" fill="#c4edc2"/></svg>
<svg style="left:0px;top:0px;" width="3840" height="2400" viewBox="0 0 3840 2400"><path d="M1987.1 1593.7 H2241.4 q5.500 0 5.500 7.500 q0 -7.500 5.500 -7.500 H2508.7 q5.500 0 5.500 7.500 q0 -7.500 5.500 -7.500 H2776 q5.500 0 5.500 7.500 q0 -7.500 5.500 -7.500 H3041.3 a8 8 0 0 1 8 8 V1662.8 a8 8 0 0 1 -8 8 H2787 q-5.500 0 -5.500 -7.500 q0 7.500 -5.500 7.500 H2519.7 q-5.500 0 -5.500 -7.500 q0 7.500 -5.500 7.500 H2252.4 q-5.500 0 -5.500 -7.500 q0 7.500 -5.500 7.500 H1987.1 a8 8 0 0 1 -8 -8 V1601.7 a8 8 0 0 1 8 -8 z" fill="#4471ab" stroke="#0a0a0a" stroke-width="2" stroke-linejoin="round"/></svg>
<svg style="left:1989.5px;top:1602.5px;" width="15" height="22" viewBox="0 0 15 22"><g fill="none" stroke="#eef3fa" stroke-width="2" stroke-linecap="round" stroke-linejoin="round"><path d="M2 8l5.500-6 5.500 6M2 14l5.500 6 5.500-6"/></g></svg>
<div class="t" style="left:2010.5px;top:1601.38px;font-size:22px;color:#f0f4fa;letter-spacing:0.3px;">Conga Groove 01</div>
<svg style="left:2200px;top:1605px;" width="34" height="17" viewBox="0 0 34 17"><g fill="none" stroke="#e8eef8" stroke-width="1.600"><ellipse cx="8.500" cy="7.500" rx="6.500" ry="6.300"/><ellipse cx="25" cy="7.500" rx="6.500" ry="6.300"/><path d="M0 15.500h34"/></g></svg>
<svg style="left:1980.4px;top:1638.3px;" width="264" height="20" viewBox="0 0 264 20"><rect x="0" y="9.600" width="263" height="1.600" fill="#e4edfb"/><rect x="6" y="6.4" width="3.5" height="11" fill="#e4edfb"/><rect x="23" y="6.4" width="3" height="11" fill="#e4edfb"/><rect x="41" y="6.4" width="3" height="11" fill="#e4edfb"/><rect x="90.5" y="1.4" width="2.5" height="11" fill="#e4edfb"/><rect x="112" y="7.4" width="2" height="4" fill="#e4edfb"/><rect x="117" y="6.4" width="2.5" height="6" fill="#e4edfb"/><rect x="121" y="4.4" width="5" height="9" fill="#e4edfb"/><rect x="130.5" y="4.4" width="2.5" height="14" fill="#e4edfb"/><rect x="139" y="4.4" width="5" height="13" fill="#e4edfb"/><rect x="156.5" y="6.4" width="2.5" height="11" fill="#e4edfb"/><rect x="163.5" y="6.4" width="2" height="11" fill="#e4edfb"/><rect x="173" y="6.4" width="3.5" height="11" fill="#e4edfb"/><rect x="224" y="3.4" width="2.5" height="10" fill="#e4edfb"/><rect x="249" y="3.4" width="3.5" height="9" fill="#e4edfb"/><path d="M93 6.500h7v3M227 8h5M252.500 6.500h6v2.500h4" fill="none" stroke="#e4edfb" stroke-width="1.600"/></svg>
<svg style="left:2248.4px;top:1638.3px;" width="264" height="20" viewBox="0 0 264 20"><rect x="0" y="9.600" width="263" height="1.600" fill="#82a5d6"/><rect x="6" y="6.4" width="3.5" height="11" fill="#82a5d6"/><rect x="23" y="6.4" width="3" height="11" fill="#82a5d6"/><rect x="41" y="6.4" width="3" height="11" fill="#82a5d6"/><rect x="90.5" y="1.4" width="2.5" height="11" fill="#82a5d6"/><rect x="112" y="7.4" width="2" height="4" fill="#82a5d6"/><rect x="117" y="6.4" width="2.5" height="6" fill="#82a5d6"/><rect x="121" y="4.4" width="5" height="9" fill="#82a5d6"/><rect x="130.5" y="4.4" width="2.5" height="14" fill="#82a5d6"/><rect x="139" y="4.4" width="5" height="13" fill="#82a5d6"/><rect x="156.5" y="6.4" width="2.5" height="11" fill="#82a5d6"/><rect x="163.5" y="6.4" width="2" height="11" fill="#82a5d6"/><rect x="173" y="6.4" width="3.5" height="11" fill="#82a5d6"/><rect x="224" y="3.4" width="2.5" height="10" fill="#82a5d6"/><rect x="249" y="3.4" width="3.5" height="9" fill="#82a5d6"/><path d="M93 6.500h7v3M227 8h5M252.500 6.500h6v2.500h4" fill="none" stroke="#82a5d6" stroke-width="1.600"/></svg>
<svg style="left:2515.7px;top:1638.3px;" width="264" height="20" viewBox="0 0 264 20"><rect x="0" y="9.600" width="263" height="1.600" fill="#82a5d6"/><rect x="6" y="6.4" width="3.5" height="11" fill="#82a5d6"/><rect x="23" y="6.4" width="3" height="11" fill="#82a5d6"/><rect x="41" y="6.4" width="3" height="11" fill="#82a5d6"/><rect x="90.5" y="1.4" width="2.5" height="11" fill="#82a5d6"/><rect x="112" y="7.4" width="2" height="4" fill="#82a5d6"/><rect x="117" y="6.4" width="2.5" height="6" fill="#82a5d6"/><rect x="121" y="4.4" width="5" height="9" fill="#82a5d6"/><rect x="130.5" y="4.4" width="2.5" height="14" fill="#82a5d6"/><rect x="139" y="4.4" width="5" height="13" fill="#82a5d6"/><rect x="156.5" y="6.4" width="2.5" height="11" fill="#82a5d6"/><rect x="163.5" y="6.4" width="2" height="11" fill="#82a5d6"/><rect x="173" y="6.4" width="3.5" height="11" fill="#82a5d6"/><rect x="224" y="3.4" width="2.5" height="10" fill="#82a5d6"/><rect x="249" y="3.4" width="3.5" height="9" fill="#82a5d6"/><path d="M93 6.500h7v3M227 8h5M252.500 6.500h6v2.500h4" fill="none" stroke="#82a5d6" stroke-width="1.600"/></svg>
<svg style="left:2783px;top:1638.3px;" width="264" height="20" viewBox="0 0 264 20"><rect x="0" y="9.600" width="263" height="1.600" fill="#82a5d6"/><rect x="6" y="6.4" width="3.5" height="11" fill="#82a5d6"/><rect x="23" y="6.4" width="3" height="11" fill="#82a5d6"/><rect x="41" y="6.4" width="3" height="11" fill="#82a5d6"/><rect x="90.5" y="1.4" width="2.5" height="11" fill="#82a5d6"/><rect x="112" y="7.4" width="2" height="4" fill="#82a5d6"/><rect x="117" y="6.4" width="2.5" height="6" fill="#82a5d6"/><rect x="121" y="4.4" width="5" height="9" fill="#82a5d6"/><rect x="130.5" y="4.4" width="2.5" height="14" fill="#82a5d6"/><rect x="139" y="4.4" width="5" height="13" fill="#82a5d6"/><rect x="156.5" y="6.4" width="2.5" height="11" fill="#82a5d6"/><rect x="163.5" y="6.4" width="2" height="11" fill="#82a5d6"/><rect x="173" y="6.4" width="3.5" height="11" fill="#82a5d6"/><rect x="224" y="3.4" width="2.5" height="10" fill="#82a5d6"/><rect x="249" y="3.4" width="3.5" height="9" fill="#82a5d6"/><path d="M93 6.500h7v3M227 8h5M252.500 6.500h6v2.500h4" fill="none" stroke="#82a5d6" stroke-width="1.600"/></svg>
<div style="left:1978.1px;top:1674.2px;width:1072.2px;height:79.6px;background:#c7a73c;border-radius:9px;border:2px solid #0a0a0a;"></div>
<div class="t" style="left:1990px;top:1683.38px;font-size:22px;color:#f3f7f0;letter-spacing:0.45px;">Finn  -  Cajon Dub</div>
<svg style="left:1980.4px;top:1722.7px;" width="1068" height="24" viewBox="0 0 1068 24"><path d="M0 1 L4.5 11 L0 22.5 z" fill="#fdeaa6"/><path d="M8.35 8.7 L12.95 11 L8.35 13.6 z" fill="#fdeaa6"/><path d="M16.71 8.7 L21.31 11 L16.71 13.6 z" fill="#fdeaa6"/><path d="M25.06 1 L33.56 11 L25.06 22.5 z" fill="#fdeaa6"/><path d="M33.41 6.5 L39.71 11 L33.41 16.5 z" fill="#fdeaa6"/><path d="M41.77 8.7 L46.37 11 L41.77 13.6 z" fill="#fdeaa6"/><path d="M50.12 8.7 L54.72 11 L50.12 13.6 z" fill="#fdeaa6"/><path d="M58.47 6.5 L64.77 11 L58.47 16.5 z" fill="#fdeaa6"/><path d="M66.83 1 L75.33 11 L66.83 22.5 z" fill="#fdeaa6"/><path d="M75.18 6.5 L81.48 11 L75.18 16.5 z" fill="#fdeaa6"/><path d="M83.53 8.7 L88.13 11 L83.53 13.6 z" fill="#fdeaa6"/><path d="M91.88 1 L100.38 11 L91.88 22.5 z" fill="#fdeaa6"/><path d="M100.24 6.5 L106.54 11 L100.24 16.5 z" fill="#fdeaa6"/><path d="M108.59 8.7 L113.19 11 L108.59 13.6 z" fill="#fdeaa6"/><path d="M116.94 6.5 L123.24 11 L116.94 16.5 z" fill="#fdeaa6"/><path d="M125.3 8.7 L129.9 11 L125.3 13.6 z" fill="#fdeaa6"/><path d="M129.65 1 L138.15 11 L129.65 22.5 z" fill="#fdeaa6"/><path d="M142 8.7 L146.6 11 L142 13.6 z" fill="#fdeaa6"/><path d="M150.36 8.7 L154.96 11 L150.36 13.6 z" fill="#fdeaa6"/><path d="M158.71 1 L167.21 11 L158.71 22.5 z" fill="#fdeaa6"/><path d="M167.06 6.5 L173.36 11 L167.06 16.5 z" fill="#fdeaa6"/><path d="M175.42 8.7 L180.02 11 L175.42 13.6 z" fill="#fdeaa6"/><path d="M183.77 8.7 L188.37 11 L183.77 13.6 z" fill="#fdeaa6"/><path d="M192.12 6.5 L198.42 11 L192.12 16.5 z" fill="#fdeaa6"/><path d="M200.48 1 L208.98 11 L200.48 22.5 z" fill="#fdeaa6"/><path d="M208.83 6.5 L215.13 11 L208.83 16.5 z" fill="#fdeaa6"/><path d="M217.18 8.7 L221.78 11 L217.18 13.6 z" fill="#fdeaa6"/><path d="M225.53 1 L234.03 11 L225.53 22.5 z" fill="#fdeaa6"/><path d="M233.89 6.5 L240.19 11 L233.89 16.5 z" fill="#fdeaa6"/><path d="M242.24 8.7 L246.84 11 L242.24 13.6 z" fill="#fdeaa6"/><path d="M250.59 6.5 L256.89 11 L250.59 16.5 z" fill="#fdeaa6"/><path d="M258.95 8.7 L263.55 11 L258.95 13.6 z" fill="#fdeaa6"/><path d="M263.3 1 L271.8 11 L263.3 22.5 z" fill="#fdeaa6"/><path d="M275.65 8.7 L280.25 11 L275.65 13.6 z" fill="#fdeaa6"/><path d="M284.01 8.7 L288.61 11 L284.01 13.6 z" fill="#fdeaa6"/><path d="M292.36 1 L300.86 11 L292.36 22.5 z" fill="#fdeaa6"/><path d="M300.71 6.5 L307.01 11 L300.71 16.5 z" fill="#fdeaa6"/><path d="M309.07 8.7 L313.67 11 L309.07 13.6 z" fill="#fdeaa6"/><path d="M317.42 8.7 L322.02 11 L317.42 13.6 z" fill="#fdeaa6"/><path d="M325.77 6.5 L332.07 11 L325.77 16.5 z" fill="#fdeaa6"/><path d="M334.12 1 L342.62 11 L334.12 22.5 z" fill="#fdeaa6"/><path d="M342.48 6.5 L348.78 11 L342.48 16.5 z" fill="#fdeaa6"/><path d="M350.83 8.7 L355.43 11 L350.83 13.6 z" fill="#fdeaa6"/><path d="M359.18 1 L367.68 11 L359.18 22.5 z" fill="#fdeaa6"/><path d="M367.54 6.5 L373.84 11 L367.54 16.5 z" fill="#fdeaa6"/><path d="M375.89 8.7 L380.49 11 L375.89 13.6 z" fill="#fdeaa6"/><path d="M384.24 6.5 L390.54 11 L384.24 16.5 z" fill="#fdeaa6"/><path d="M392.6 8.7 L397.2 11 L392.6 13.6 z" fill="#fdeaa6"/><path d="M396.95 1 L405.45 11 L396.95 22.5 z" fill="#fdeaa6"/><path d="M409.3 8.7 L413.9 11 L409.3 13.6 z" fill="#fdeaa6"/><path d="M417.66 8.7 L422.26 11 L417.66 13.6 z" fill="#fdeaa6"/><path d="M426.01 1 L434.51 11 L426.01 22.5 z" fill="#fdeaa6"/><path d="M434.36 6.5 L440.66 11 L434.36 16.5 z" fill="#fdeaa6"/><path d="M442.72 8.7 L447.32 11 L442.72 13.6 z" fill="#fdeaa6"/><path d="M451.07 8.7 L455.67 11 L451.07 13.6 z" fill="#fdeaa6"/><path d="M459.42 6.5 L465.72 11 L459.42 16.5 z" fill="#fdeaa6"/><path d="M467.78 1 L476.28 11 L467.78 22.5 z" fill="#fdeaa6"/><path d="M476.13 6.5 L482.43 11 L476.13 16.5 z" fill="#fdeaa6"/><path d="M484.48 8.7 L489.08 11 L484.48 13.6 z" fill="#fdeaa6"/><path d="M492.83 1 L501.33 11 L492.83 22.5 z" fill="#fdeaa6"/><path d="M501.19 6.5 L507.49 11 L501.19 16.5 z" fill="#fdeaa6"/><path d="M509.54 8.7 L514.14 11 L509.54 13.6 z" fill="#fdeaa6"/><path d="M517.89 6.5 L524.19 11 L517.89 16.5 z" fill="#fdeaa6"/><path d="M526.25 8.7 L530.85 11 L526.25 13.6 z" fill="#fdeaa6"/><path d="M530.6 1 L539.1 11 L530.6 22.5 z" fill="#fdeaa6"/><path d="M542.95 8.7 L547.55 11 L542.95 13.6 z" fill="#fdeaa6"/><path d="M551.31 8.7 L555.91 11 L551.31 13.6 z" fill="#fdeaa6"/><path d="M559.66 1 L568.16 11 L559.66 22.5 z" fill="#fdeaa6"/><path d="M568.01 6.5 L574.31 11 L568.01 16.5 z" fill="#fdeaa6"/><path d="M576.37 8.7 L580.97 11 L576.37 13.6 z" fill="#fdeaa6"/><path d="M584.72 8.7 L589.32 11 L584.72 13.6 z" fill="#fdeaa6"/><path d="M593.07 6.5 L599.37 11 L593.07 16.5 z" fill="#fdeaa6"/><path d="M601.43 1 L609.93 11 L601.43 22.5 z" fill="#fdeaa6"/><path d="M609.78 6.5 L616.08 11 L609.78 16.5 z" fill="#fdeaa6"/><path d="M618.13 8.7 L622.73 11 L618.13 13.6 z" fill="#fdeaa6"/><path d="M626.48 1 L634.98 11 L626.48 22.5 z" fill="#fdeaa6"/><path d="M634.84 6.5 L641.14 11 L634.84 16.5 z" fill="#fdeaa6"/><path d="M643.19 8.7 L647.79 11 L643.19 13.6 z" fill="#fdeaa6"/><path d="M651.54 6.5 L657.84 11 L651.54 16.5 z" fill="#fdeaa6"/><path d="M659.9 8.7 L664.5 11 L659.9 13.6 z" fill="#fdeaa6"/><path d="M664.25 1 L672.75 11 L664.25 22.5 z" fill="#fdeaa6"/><path d="M676.6 8.7 L681.2 11 L676.6 13.6 z" fill="#fdeaa6"/><path d="M684.96 8.7 L689.56 11 L684.96 13.6 z" fill="#fdeaa6"/><path d="M693.31 1 L701.81 11 L693.31 22.5 z" fill="#fdeaa6"/><path d="M701.66 6.5 L707.96 11 L701.66 16.5 z" fill="#fdeaa6"/><path d="M710.02 8.7 L714.62 11 L710.02 13.6 z" fill="#fdeaa6"/><path d="M718.37 8.7 L722.97 11 L718.37 13.6 z" fill="#fdeaa6"/><path d="M726.72 6.5 L733.02 11 L726.72 16.5 z" fill="#fdeaa6"/><path d="M735.08 1 L743.58 11 L735.08 22.5 z" fill="#fdeaa6"/><path d="M743.43 6.5 L749.73 11 L743.43 16.5 z" fill="#fdeaa6"/><path d="M751.78 8.7 L756.38 11 L751.78 13.6 z" fill="#fdeaa6"/><path d="M760.13 1 L768.63 11 L760.13 22.5 z" fill="#fdeaa6"/><path d="M768.49 6.5 L774.79 11 L768.49 16.5 z" fill="#fdeaa6"/><path d="M776.84 8.7 L781.44 11 L776.84 13.6 z" fill="#fdeaa6"/><path d="M785.19 6.5 L791.49 11 L785.19 16.5 z" fill="#fdeaa6"/><path d="M793.55 8.7 L798.15 11 L793.55 13.6 z" fill="#fdeaa6"/><path d="M797.9 1 L806.4 11 L797.9 22.5 z" fill="#fdeaa6"/><path d="M810.25 8.7 L814.85 11 L810.25 13.6 z" fill="#fdeaa6"/><path d="M818.61 8.7 L823.21 11 L818.61 13.6 z" fill="#fdeaa6"/><path d="M826.96 1 L835.46 11 L826.96 22.5 z" fill="#fdeaa6"/><path d="M835.31 6.5 L841.61 11 L835.31 16.5 z" fill="#fdeaa6"/><path d="M843.67 8.7 L848.27 11 L843.67 13.6 z" fill="#fdeaa6"/><path d="M852.02 8.7 L856.62 11 L852.02 13.6 z" fill="#fdeaa6"/><path d="M860.37 6.5 L866.67 11 L860.37 16.5 z" fill="#fdeaa6"/><path d="M868.73 1 L877.23 11 L868.73 22.5 z" fill="#fdeaa6"/><path d="M877.08 6.5 L883.38 11 L877.08 16.5 z" fill="#fdeaa6"/><path d="M885.43 8.7 L890.03 11 L885.43 13.6 z" fill="#fdeaa6"/><path d="M893.78 1 L902.28 11 L893.78 22.5 z" fill="#fdeaa6"/><path d="M902.14 6.5 L908.44 11 L902.14 16.5 z" fill="#fdeaa6"/><path d="M910.49 8.7 L915.09 11 L910.49 13.6 z" fill="#fdeaa6"/><path d="M918.84 6.5 L925.14 11 L918.84 16.5 z" fill="#fdeaa6"/><path d="M927.2 8.7 L931.8 11 L927.2 13.6 z" fill="#fdeaa6"/><path d="M931.55 1 L940.05 11 L931.55 22.5 z" fill="#fdeaa6"/><path d="M943.9 8.7 L948.5 11 L943.9 13.6 z" fill="#fdeaa6"/><path d="M952.26 8.7 L956.86 11 L952.26 13.6 z" fill="#fdeaa6"/><path d="M960.61 1 L969.11 11 L960.61 22.5 z" fill="#fdeaa6"/><path d="M968.96 6.5 L975.26 11 L968.96 16.5 z" fill="#fdeaa6"/><path d="M977.32 8.7 L981.92 11 L977.32 13.6 z" fill="#fdeaa6"/><path d="M985.67 8.7 L990.27 11 L985.67 13.6 z" fill="#fdeaa6"/><path d="M994.02 6.5 L1000.32 11 L994.02 16.5 z" fill="#fdeaa6"/><path d="M1002.38 1 L1010.88 11 L1002.38 22.5 z" fill="#fdeaa6"/><path d="M1010.73 6.5 L1017.03 11 L1010.73 16.5 z" fill="#fdeaa6"/><path d="M1019.08 8.7 L1023.68 11 L1019.08 13.6 z" fill="#fdeaa6"/><path d="M1027.43 1 L1035.93 11 L1027.43 22.5 z" fill="#fdeaa6"/><path d="M1035.79 6.5 L1042.09 11 L1035.79 16.5 z" fill="#fdeaa6"/><path d="M1044.14 8.7 L1048.74 11 L1044.14 13.6 z" fill="#fdeaa6"/><path d="M1052.49 6.5 L1058.79 11 L1052.49 16.5 z" fill="#fdeaa6"/><path d="M1060.85 8.7 L1065.45 11 L1060.85 13.6 z" fill="#fdeaa6"/></svg>
<div style="left:2618px;top:352px;width:2px;height:2048px;background:#f4f4f4;box-shadow:0 0 0 1px rgba(40,40,40,.55);"></div>
<svg style="left:2601.5px;top:338px;" width="35" height="36" viewBox="0 0 35 36"><path d="M6 0.500h23a5.500 5.500 0 0 1 5.500 5.500v11.500L17.500 35.500 0.500 17.500V6A5.500 5.500 0 0 1 6 0.500z" fill="#b3b3b3" stroke="#8e8e8e" stroke-width="1"/><rect x="16.500" y="6" width="2" height="30" fill="#fff"/></svg>
<svg style="left:0px;top:0px;" width="3840" height="2400" viewBox="0 0 3840 2400"><g fill="none" stroke="#fff766" stroke-linecap="round" stroke-linejoin="round"><path stroke-width="11" d="M228 796c-2-14 1-24 5-36 6-22 12-40 17-62 4-16 10-24 17-34 3-5 5-8 8-5 8 6 16 16 28 24 16 11 32 22 50 28 14 4 28 4 43 10"/><path stroke-width="11" d="M279 696c4 16 9 36 10 52 1 12 0 22 3 30 4 10 12 16 19 26 12 16 24 34 30 50 8 22 11 44 15 66 4 24 8 46 11 68 3 18 7 34 7 52 0 12-1 26-2 36" /><path stroke-width="9.500" d="M682 1463c-16-3-32-3-48-2-12 1-22 2-31 8-10 6-17 12-22 20-8 12-13 22-16 32-4 14-4 26-3 38 0 8 3 14 8 18 10 6 24 8 40 12 18 5 36 10 53 13 16 3 30 3 45 2 14-1 28-6 38-14 8-6 14-12 17-20 3-10 4-24 3-34 -1-10-6-18-14-23-8-5-18-6-25-11-8-6-12-15-19-20-6-5-12-7-19-8-7-1-13-1-20-3"/></g></svg>
</div></body></html>
